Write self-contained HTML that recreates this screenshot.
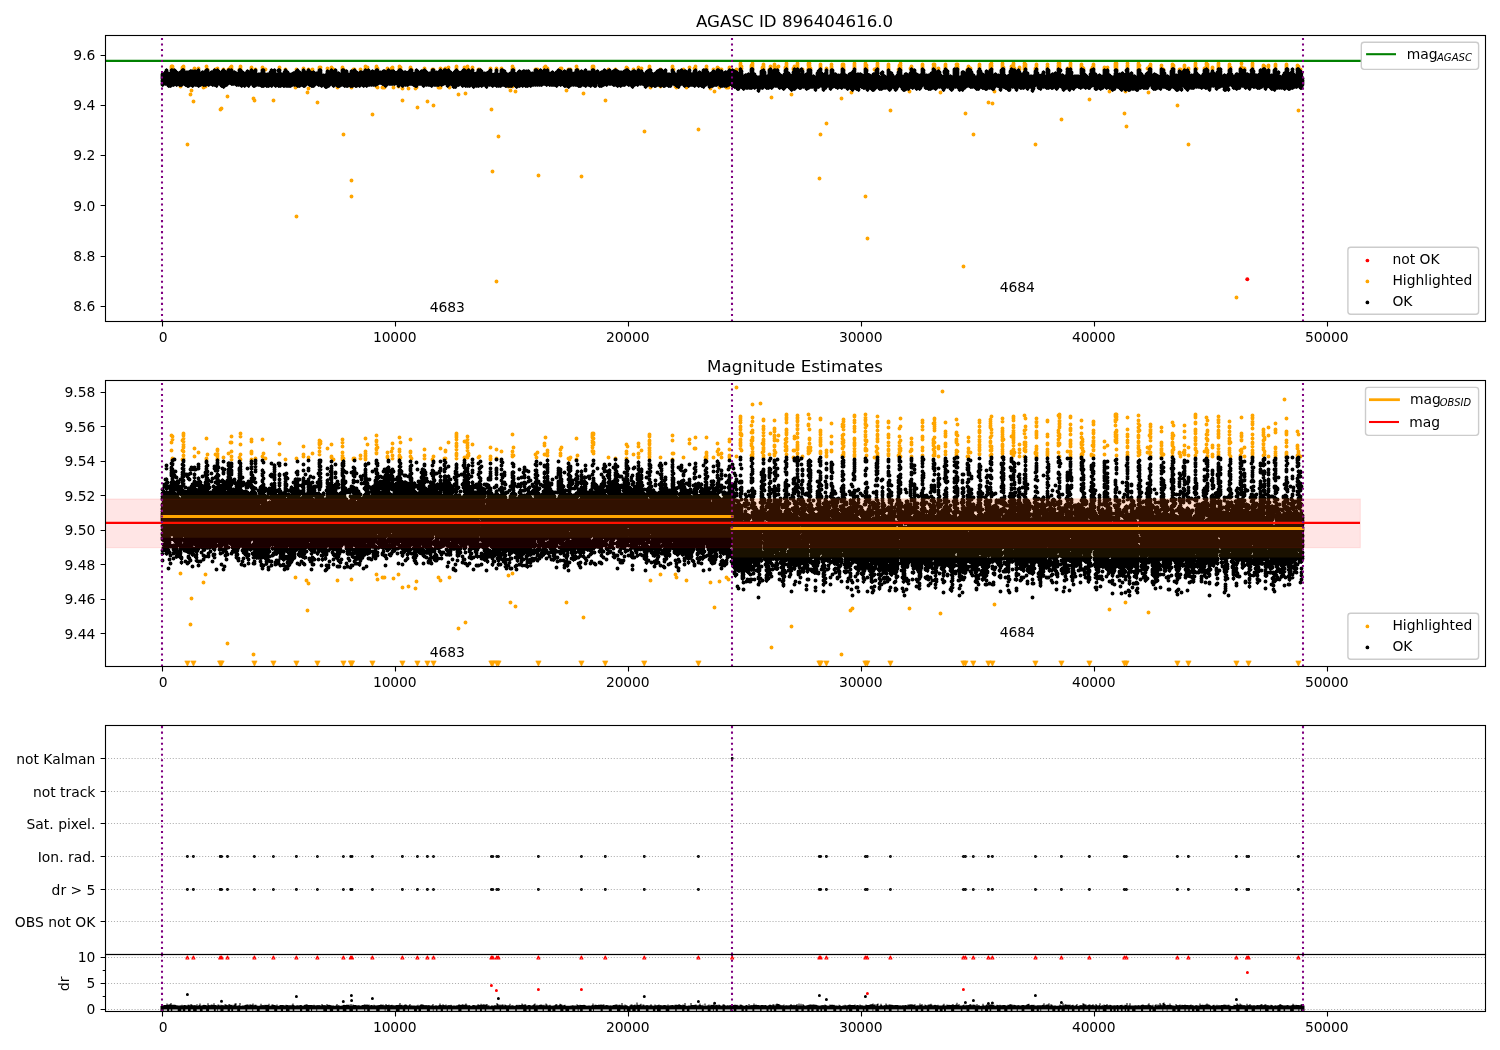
<!DOCTYPE html>
<html lang="en"><head><meta charset="utf-8"><title>AGASC ID 896404616.0</title>
<style>
html,body{margin:0;padding:0;background:#fff}
svg{display:block;will-change:transform}
text{font-family:"DejaVu Sans","Liberation Sans",sans-serif;font-size:13.89px;fill:#000}
.n{letter-spacing:-.12px}
.t{font-size:16.67px}
.sub{font-family:"DejaVu Sans","Liberation Sans",sans-serif;font-style:italic;font-size:9.9px}
.sp{fill:none;stroke:#000;stroke-width:1.11}
.tk{stroke:#000;stroke-width:1.11;fill:none}
.pv{stroke:#800080;stroke-width:2.08;stroke-dasharray:2.08 3.44;fill:none}
.gr{stroke:#b0b0b0;stroke-width:1.11;stroke-dasharray:1.11 1.83;fill:none}
.dk{stroke:#000;stroke-width:3.95;stroke-linecap:round;fill:none}
.do{stroke:#ffa500;stroke-width:3.95;stroke-linecap:round;fill:none}
.dr{stroke:#f00;stroke-width:3.95;stroke-linecap:round;fill:none}
.lg{fill:#fff;fill-opacity:.8;stroke:#ccc;stroke-width:1.39}
</style></head><body>
<svg width="1500" height="1050" viewBox="0 0 1500 1050">
<rect width="1500" height="1050" fill="#fff"/>
<defs><clipPath id="c1"><rect x="105.5" y="35.5" width="1380.0" height="286.0"/></clipPath><clipPath id="c2"><rect x="105.5" y="380.5" width="1380.0" height="286.0"/></clipPath><clipPath id="c3"><rect x="105.5" y="725.5" width="1380.0" height="229.0"/></clipPath><clipPath id="c4"><rect x="105.5" y="954.5" width="1380.0" height="57.0"/></clipPath></defs>
<!-- panel 1 -->
<g clip-path="url(#c1)">
<path class="dr" d="M1247.3 279.3h0"/>
<path class="do" d="M171.5 66.5h0m1 0h0m0 1h0m-1 0h0m0 1h0m11-1h0m0 1h0m0 1h0m-2 17h0m3-20h0m0 1h0m0 1h0m0 1h0m4 75h0m7-76h0m0 1h0m-3 21h0m-1 4h0m3 7h0m5-33h0m8-2h0m0 3h0m-1 17h0m-2 1h0m4-18h0m10-1h0m-2 1h0m8 0h0m-2 39h0m-1 1h0m10-42h0m-2 2h0m-1 27h0m4-30h0m0 1h0m0 1h0m0 1h0m9-3h0m0 1h0m0 2h0m-1 0h0m12-2h0m0 1h0m0 1h0m2 29h0m1 2h0m1-31h0m7-2h0m0 2h0m3 0h0m8 31h0m6-33h0m0 2h0m6 0h0m11 0h0m-1 18h0m1 129h0m7-148h0m5 1h0m-5 0h0m5 19h0m-1 4h0m5-23h0m8-2h0m-1 0h0m0 1h0m0 1h0m-2 33h0m14-35h0m-4 1h0m4 1h0m2 0h0m4 18h0m5-20h0m0 1h0m0 1h0m1 0h0m0 65h0m11-65h0m-1 0h0m-2 18h0m0 93h0m0 16h0m9-127h0m5-3h0m2 1h0m-2 1h0m0 1h0m7 45h0m4-48h0m0 1h0m0 1h0m1 0h0m-1 18h0m1 1h0m5 0h0m2 0h0m8-20h0m-5 1h0m4 0h0m1 0h0m-5 1h0m11 17h0m-5 1h0m6-21h0m1 1h0m-1 1h0m1 1h0m-1 0h0m3 19h0m0 12h0m8-33h0m0 1h0m0 1h0m-2 19h0m3-19h0m5 18h0m-1 1h0m2 19h0m7-39h0m0 1h0m3 32h0m6-32h0m-1 0h0m1 36h0m7-37h0m-2 19h0m2 0h0m5-19h0m-1 1h0m4-2h0m1 20h0m7-21h0m0 1h0m0 1h0m0 1h0m2 25h0m6-27h0m3-1h0m0 1h0m0 1h0m1 1h0m-3 24h0m7-26h0m0 2h0m7 0h0m-1 0h0m12-1h0m0 1h0m1 40h0m1 62h0m4-103h0m0 1h0m2 67h0m-2 145h0m5-213h0m11-2h0m0 2h0m0 1h0m0 17h0m-4 0h0m2 4h0m3-22h0m0 1h0m2 22h0m20-22h0m1 0h0m1 0h0m1 106h0m7-109h0m-1 1h0m3 1h0m-3 1h0m3 0h0m13-1h0m1 0h0m5 22h0m4-21h0m-1 0h0m-1 0h0m8-3h0m0 3h0m1 0h0m6 24h0m-2 83h0m12-110h0m-1 0h0m0 1h0m1 0h0m-1 1h0m1 0h0m0 1h0m15 0h0m-3 31h0m10-31h0m11-2h0m0 1h0m1 0h0m11-1h0m0 1h0m0 1h0m-5 0h0m8-1h0m3 63h0m5-65h0m0 1h0m0 1h0m1 19h0m10-18h0m0 17h0m12-20h0m0 1h0m1 2h0m-1 0h0m3 17h0m1 1h0m7-18h0m3 18h0m3-20h0m6-1h0m-1 2h0m1 0h0m3 61h0m8-63h0m0 2h0m-1 1h0m1 0h0m4 19h0m3-19h0m1 22h0m3-24h0m0 1h0m1 0h0m3 1h0m-2 18h0m7 0h0m2 0h0m1-20h0m0 1h0m11-5h0m0 1h0m0 1h0m0 1h0m0 1h0m0 1h0m-4 1h0m5-3h0m0 2h0m11-5h0m0 1h0m-1 1h0m1 0h0m0 1h0m-1 0h0m0 1h0m1 0h0m0 1h0m11-4h0m0 1h0m0 1h0m-1 1h0m1 0h0m-1 1h0m1 0h0m0 1h0m7-3h0m-1 3h0m5-5h0m0 1h0m0 1h0m0 1h0m0 1h0m-3 29h0m7-31h0m-1 1h0m9-4h0m0 1h0m0 1h0m0 1h0m-1 1h0m1 0h0m0 1h0m-1 0h0m9-2h0m-1 2h0m0 1h0m-2 25h0m6-31h0m0 1h0m0 1h0m0 1h0m0 1h0m5 2h0m7-6h0m-1 0h0m0 1h0m1 1h0m-1 0h0m1 1h0m0 1h0m0 1h0m1 0h0m-2 0h0m0 1h0m12-5h0m0 1h0m0 1h0m0 1h0m0 1h0m0 66h0m-1 44h0m7-110h0m0 1h0m0 54h0m5-59h0m0 2h0m0 1h0m0 1h0m11-4h0m0 1h0m0 1h0m0 1h0m0 1h0m-1 30h0m2-34h0m0 1h0m0 1h0m0 1h0m0 1h0m0 1h0m11-6h0m0 1h0m0 1h0m0 1h0m0 1h0m0 1h0m-3 24h0m14-29h0m0 1h0m0 1h0m1 0h0m-1 1h0m0 1h0m1 0h0m0 1h0m-1 0h0m1 1h0m-1 127h0m2 42h0m10-175h0m0 1h0m0 1h0m0 1h0m0 1h0m0 1h0m-1 0h0m-2 1h0m14-5h0m0 1h0m0 1h0m0 1h0m0 1h0m0 1h0m2 41h0m10-47h0m-1 2h0m1 0h0m-1 1h0m1 1h0m-1 0h0m1 1h0m-1 0h0m-1 1h0m2 0h0m11-3h0m0 1h0m0 1h0m-1 0h0m-1 23h0m13-27h0m0 1h0m0 1h0m0 1h0m0 1h0m11-4h0m1 0h0m0 1h0m0 1h0m-1 1h0m1 0h0m0 1h0m4 0h0m-5 0h0m5 1h0m2 23h0m5-28h0m0 1h0m0 1h0m0 1h0m0 1h0m11-4h0m0 2h0m1-2h0m0 2h0m0 1h0m0 1h0m11-2h0m0 1h0m0 1h0m-1 1h0m-2 44h0m-2 153h0m7-198h0m3 66h0m6-70h0m0 1h0m0 1h0m0 1h0m0 1h0m12-5h0m-1 1h0m0 1h0m1 0h0m0 1h0m-1 0h0m0 1h0m1 1h0m-1 0h0m0 1h0m-2 33h0m4 1h0m2-12h0m8-28h0m0 1h0m0 1h0m0 1h0m0 1h0m1 0h0m10-4h0m0 1h0m0 1h0m-2 1h0m2 0h0m0 1h0m1 1h0m-3 0h0m8-1h0m0 1h0m0 1h0m5-6h0m1 1h0m0 1h0m-1 0h0m0 1h0m1 0h0m-1 1h0m1 0h0m0 1h0m-1 0h0m0 1h0m12-5h0m0 1h0m0 1h0m-1 2h0m1 0h0m-1 1h0m0 75h0m12-80h0m0 2h0m0 1h0m0 1h0m11-5h0m0 2h0m0 1h0m0 1h0m0 1h0m1-5h0m0 1h0m0 1h0m0 1h0m0 1h0m2 52h0m9-56h0m0 1h0m0 1h0m0 1h0m0 1h0m0 1h0m-3 0h0m14-4h0m0 1h0m0 1h0m1 1h0m-1 0h0m0 1h0m2 0h0m10-4h0m0 1h0m0 1h0m-1 1h0m1 0h0m0 1h0m-2 1h0m-2 30h0m15-32h0m0 1h0m0 1h0m3-2h0m2 24h0m6-28h0m1 0h0m0 1h0m-1 0h0m1 1h0m-1 0h0m0 1h0m1 0h0m-1 1h0m1 0h0m0 1h0m0 1h0m8 44h0m3-50h0m0 2h0m0 1h0m0 1h0m0 1h0m-2 23h0m1 35h0m12-63h0m0 1h0m0 1h0m1 0h0m-1 1h0m0 1h0m0 1h0m1 0h0m-1 1h0m1 0h0m8-1h0m1 24h0m2-28h0m0 1h0m0 1h0m-1 0h0m1 1h0m0 1h0m11-3h0m0 2h0m0 1h0m2 1h0m9-5h0m0 2h0m0 1h0m0 1h0m1-3h0m0 1h0m0 2h0m4 37h0m7-40h0m0 1h0m0 1h0m0 1h0m-5 1h0m1 0h0m8-1h0m0 1h0m0 75h0m7-81h0m0 1h0m0 1h0m0 1h0m0 1h0m0 1h0m1 0h0m10-5h0m0 1h0m1 0h0m0 1h0m-1 1h0m1 0h0m-1 1h0m1 0h0m0 1h0m-3 0h0m3 1h0m5-2h0m0 1h0m0 1h0m6-6h0m0 1h0m0 1h0m0 1h0m0 1h0m0 1h0m11-4h0m0 1h0m0 1h0m1 1h0m-1 0h0m0 1h0m0 1h0m7 228h0m5-234h0m0 3h0m0 1h0m0 1h0m3 0h0m-4 0h0m4 1h0m8-6h0m0 1h0m0 1h0m0 1h0m0 1h0m0 1h0m11-3h0m5 0h0m-4 1h0m4 0h0m-5 0h0m1 1h0m-1 0h0m1 1h0m4 1h0m7-5h0m0 1h0m0 1h0m0 2h0m11-4h0m0 1h0m0 1h0m0 1h0m0 1h0m11-3h0m1 1h0m-1 1h0m0 1h0m1 0h0m0 42h0m2-41h0"/>
<path fill="#000" d="M161 73.2H162V72.5H163V72.2H164V71.2H165V69.2H166V68.5H167V69H168V71.5H169V71.8H170V69.2H171V68.5H172H173V68.8H174V68.5H175V69H176V70H177V71H178V71.5H179V71.2H180V70.5H181V69.2H182V68.5H183H184V69H185V70.8H186V70.5H187H188H189V70.2H190V69.5H191H192H193V69.8H194V69.5H195H196V69.8H197V69.2H198V68.5H199V69H200V71.5H201V71.2H202V70.5H203V70.8H204V70.2H205V69.2H206V68.5H207H208V69H209V71.5H210V71.2H211V70.5H212H213V69.2H214V68.5H215V69H216V69.2H217V68.5H218V69H219V70H220V71H221V70.2H222V69.2H223V68.5H224V69H225V70H226V70.5H227V69.2H228V68.5H229H230V68.8H231V68.5H232V69H233V70.8H234V70.5H235V71H236V71.5H237V71.8H238V69.2H239V68.5H240H241V69H242V70.5H243V71H244V71.8H245V71.5H246V70.2H247V69.5H248V70H249V70.5H250V69.2H251V68.5H252V69H253V70H254V69.2H255V68.5H256V69H257V72.8H258V72.5H259H260V72.2H261V69.2H262V68.5H263H264V69H265V72.5H266V72.8H267V72.5H268H269V71.2H270V69.2H271V68.5H272V69H273V69.2H274V68.5H275V69H276V72.5H277H278V68.5H279H280V69H281V72.5H282V72.8H283V71.2H284V69.2H285V68.5H286V69H287V70.5H288V71H289V72.5H290V72.8H291V72.5H292V72.2H293V71.5H294V71.2H295V70.2H296V69.2H297V68.5H298V69H299V70.5H300V71H301V71.5H302V69.2H303V68.5H304V69H305V70.5H306V70.8H307V69.2H308V68.5H309V69H310V70.5H311V71H312V71.2H313V70.5H314V71H315V71.8H316V71.5H317V71.2H318V69.2H319V68.5H320H321V69H322V73.5H323H324V73.8H325V73.2H326V70.2H327V69.5H328V70H329V70.2H330V69.2H331V68.5H332V69H333V70H334V69.2H335V68.5H336V69H337V71.5H338H339V72H340V72.5H341V69.2H342V68.5H343H344V69H345V69.8H346V69.5H347V70H348V72.5H349H350V70.2H351V69.5H352V69.8H353V69.2H354V68.5H355V69H356V70.5H357V71H358V71.8H359V71.2H360V70.5H361H362V70.8H363V70.5H364V69.2H365V68.5H366V69H367V69.2H368V68.5H369V69H370V70.5H371V70.2H372V69.5H373V70H374V70.2H375V69.2H376V68.5H377H378V69H379V70.8H380V70.5H381V70.8H382V70.2H383V69.5H384H385V70H386V70.2H387V69.2H388V68.5H389V69H390V69.8H391V69.5H392H393H394V70H395V71H396V71.2H397V70.5H398V69.2H399V68.5H400H401V69H402V70H403V70.8H404V70.5H405H406V71H407V71.2H408V70.5H409V69.2H410V68.5H411H412V69H413V71.8H414V71.5H415V69.2H416V68.5H417V69H418V70H419V71H420V70.2H421V69.5H422H423V69.2H424V68.5H425V69H426V70H427V71H428V71.8H429V71.5H430V71.2H431V69.2H432V68.5H433H434V69H435V70.8H436V70.5H437V70.8H438V70.2H439V69.2H440V68.5H441V69H442V70H443V69.2H444V68.5H445H446V69H447V69.2H448V68.5H449V69H450V70.5H451V71H452V72H453V71.2H454V70.2H455V69.2H456V68.5H457V69H458V70.5H459V71H460V71.2H461V70.5H462V69.2H463V68.5H464H465V69H466V69.8H467V69.2H468V68.5H469V69H470V70H471V69.2H472V68.5H473V69H474V72H475V72.2H476V71.5H477V69.2H478V68.5H479V68.8H480V68.5H481V69H482V70H483V71.8H484V71.5H485V71.8H486V71.5H487V71.2H488V70.5H489V69.2H490V68.5H491V69H492V73H493V73.2H494V72.5H495V69.2H496V68.5H497V69H498V72.8H499V72.5H500V69.2H501V68.5H502H503V69H504V69.5H505V70H506V72H507V72.5H508V72.8H509V72.2H510V71.5H511V69.2H512V68.5H513H514V69H515V72H516V72.2H517V71.2H518V70.2H519V69.5H520V70H521V70.5H522V70.2H523V69.5H524H525V69.8H526V69.5H527V69.8H528V69.5H529V70H530V71.5H531V71.8H532V71.5H533H534V69.2H535V68.5H536H537V69H538V70H539V69.2H540V68.5H541V69H542V70H543V69.2H544V68.5H545V69H546V69.2H547V68.5H548V69H549V71.5H550V71.8H551V71.2H552V70.5H553V71H554V72H555V71.2H556V70.5H557V69.2H558V68.5H559V69H560V69.5H561V70H562V70.8H563V70.2H564V69.5H565V70H566V70.5H567V69.2H568V68.5H569H570H571V69H572V71.5H573V71.8H574V71.2H575V69.2H576V68.5H577H578V69H579V70.5H580V70.2H581V69.5H582V70H583V70.5H584V69.2H585V68.5H586V69H587V70.8H588V70.5H589H590V70.8H591V69.2H592V68.5H593H594V69H595V70.5H596V70.2H597V69.5H598V70H599V71.5H600V71.2H601V70.5H602V70.2H603V69.2H604V68.5H605V69H606V69.8H607V69.5H608V69.2H609V68.5H610V69H611V70.5H612V70.2H613V69.5H614V69.2H615V68.5H616V69H617V69.5H618V70H619V70.5H620H621H622V70.8H623V70.2H624V69.5H625V69.2H626V68.5H627H628V69H629V70H630V70.8H631V70.5H632V70.2H633V69.5H634H635V70H636V70.5H637V69.2H638V68.5H639V69H640V69.8H641V69.5H642V70H643V72H644V72.5H645V71.2H646V70.2H647V69.5H648V69.2H649V68.5H650H651V69H652V72H653V72.5H654V72.2H655V71.5H656V70.2H657V69.5H658V69.2H659V68.5H660H661H662V69H663V70H664V69.2H665V68.5H666V69H667V72.8H668V72.5H669H670V72.8H671V69.2H672V68.5H673V69H674V71H675V72.5H676H677V70.2H678V69.5H679V69.8H680V69.2H681V68.5H682V69H683V69.8H684V69.5H685H686V70H687V70.5H688V69.2H689V68.5H690V69H691V72.5H692V72.2H693V70.2H694V69.2H695V68.5H696V69H697V71.5H698V71.2H699V70.5H700V71H701V71.5H702V69.2H703V68.5H704V68.8H705V68.5H706H707V69H708V71H709V72.5H710V72.2H711V71.5H712V70.2H713V69.5H714V70H715V70.5H716V69.2H717V68.5H718H719V69H720V69.8H721V69.5H722V70H723V71.5H724V71.2H725V70.5H726V70.8H727V70.2H728V69.2H729V68.5H730V69H731V69.2H732V68.5H733V69H734V69.5H735V70H736V70.5H737V71H738V71.8H739V68.2H740V67.5H741V68H742V70H743V74.5H744V74.2H745V73.5H746H747V73.2H748V72.5H749V72.8H750V68.2H751V67.5H752H753V68H754V72.5H755V73H756V75H757V75.5H758H759V75.2H760V70.2H761V69.5H762V69.2H763V68.5H764V69H765V71H766V74.5H767V74.2H768V69.2H769V68.2H770V67.5H771V68H772V69.5H773V69.2H774V68.5H775H776V68.8H777V68.5H778V69H779V72H780V73.5H781V74H782V74.5H783V73.2H784V69.2H785V68.2H786V67.5H787V68H788V71.5H789V72H790V73.5H791V73.8H792V71.2H793V68.2H794V67.5H795V68H796V68.2H797V67.5H798V68H799V68.8H800V72.2H801V67.5H802V68H803V70H804V73.5H805V73.2H806V72.5H807V69.2H808V68.5H809H810H811V69H812V74.8H813V74.5H814V75H815V75.5H816V72.2H817V70.2H818V69.2H819V68.2H820V67.5H821V68H822V72H823V73H824V72.2H825V69.2H826V68.5H827V69H828V74.5H829V74.2H830V69.2H831V68.5H832H833V69H834V72.5H835H836V73H837V73.8H838V73.5H839V73.8H840V73.2H841V68.2H842V67.5H843V68H844V69H845V73.5H846V74H847V74.5H848V73.2H849V72.5H850V72.2H851V71.5H852V70.2H853V68.2H854V67.5H855V68H856V72.8H857V72.5H858H859V72.8H860V72.5H861V73H862V73.5H863V73.8H864V68.2H865V67.5H866V68H867V69H868V73H869V73.5H870V74H871V74.5H872V73.2H873V72.5H874V72.2H875V69.2H876V68.2H877V67.5H878V68H879V75H880V75.5H881V71.2H882V70.5H883V71H884V74.5H885V75H886V75.5H887V69.2H888V68.5H889V69H890V71H891V71.5H892V72H893V74H894V75.5H895V75.2H896V74.2H897V71.2H898V68.2H899V67.5H900V68H901V69H902V74.5H903V74.8H904V73.2H905V72.5H906H907V73H908V73.5H909V72.2H910V68.2H911V67.5H912V68H913V68.8H914V68.5H915V69H916V72.5H917V73H918V73.5H919V73.8H920V73.2H921V68.2H922V67.5H923V68H924V69H925V73.5H926H927V73.8H928V73.5H929V73.2H930V72.2H931V71.5H932V68.2H933V67.5H934V68H935V69H936V70.5H937V70.2H938V69.5H939V70H940V71H941V74H942V74.8H943V74.2H944V68.2H945V67.5H946V68H947V69H948V70H949V74.8H950V74.5H951V75H952V75.2H953V68.2H954V67.5H955V67.8H956V67.5H957H958V68H959V75.5H960V75.2H961V71.2H962V70.5H963H964V71H965V71.5H966V69.2H967V68.2H968V67.5H969V68H970V68.5H971V69H972V71H973V73.5H974V74H975V75.5H976V75.2H977V70.2H978V68.2H979V67.5H980V68H981V70H982V72.5H983V73H984V73.5H985V70.2H986V69.5H987V70H988V70.5H989V69.2H990V68.2H991V67.5H992V68H993V73.5H994V73.2H995V72.5H996V73H997V73.8H998V73.5H999V73.8H1000V69.2H1001V68.2H1002V67.5H1003H1004V68H1005V74H1006V74.8H1007V74.5H1008V74.2H1009V70.2H1010V68.2H1011V67.5H1012V68H1013V68.5H1014H1015V69H1016V70H1017V69.2H1018V68.5H1019V69H1020V71H1021V72.8H1022V72.5H1023V71.2H1024V68.2H1025V67.5H1026V68H1027V71.5H1028V72H1029V74.5H1030H1031H1032V74.8H1033V74.2H1034V70.2H1035V68.2H1036V67.5H1037V68H1038V72H1039V74H1040V74.2H1041V73.5H1042V71.2H1043V70.5H1044V71H1045V74.5H1046V68.2H1047V67.5H1048V68H1049V69H1050V73.5H1051V73.2H1052V72.5H1053V72.8H1054V72.2H1055V71.5H1056V71.8H1057V68.2H1058V67.5H1059V68H1060V68.5H1061V73.8H1062V73.5H1063V74H1064V74.8H1065V74.2H1066V68.2H1067V67.5H1068V68H1069V68.2H1070V67.5H1071V68H1072V71H1073V74.8H1074V74.5H1075H1076H1077H1078H1079V74.8H1080V68.2H1081V67.5H1082V68H1083V68.5H1084V69H1085V73H1086V74H1087V75H1088V75.8H1089V73.2H1090V69.2H1091V68.5H1092V68.2H1093V67.5H1094V68H1095V72.5H1096V73H1097V74.5H1098V74.2H1099V73.5H1100V74H1101V74.8H1102V74.5H1103V69.2H1104V68.5H1105V69H1106V69.2H1107V68.5H1108V69H1109V73.5H1110V74H1111V75H1112V75.5H1113V75.2H1114V72.2H1115V68.5H1116H1117V69H1118V72.8H1119V72.5H1120V72.8H1121V72.2H1122V71.5H1123V72H1124V73H1125V72.2H1126V68.2H1127V67.5H1128V68H1129V72.5H1130V72.2H1131V71.5H1132V72H1133V74.5H1134H1135V75H1136V75.5H1137V69.2H1138V68.5H1139H1140V69H1141V72H1142V73H1143V74.5H1144V74.8H1145V73.2H1146V72.2H1147V71.5H1148V68.2H1149V67.5H1150H1151V68H1152V73.5H1153V73.2H1154V72.5H1155V73H1156V73.5H1157V74H1158V74.5H1159V74.8H1160V68.2H1161V67.5H1162V68H1163V68.5H1164V69H1165V72H1166V74.5H1167H1168V75H1169V75.5H1170V70.2H1171V68.2H1172V67.5H1173H1174V68H1175V73.5H1176H1177V73.8H1178V70.2H1179V69.5H1180V70H1181V70.8H1182V70.2H1183V69.2H1184V68.5H1185V69H1186V69.2H1187V68.5H1188V69H1189V71H1190V73.8H1191V73.5H1192V73.8H1193V73.2H1194V68.2H1195V67.5H1196V68H1197V72H1198V73.5H1199V74H1200V74.8H1201V74.5H1202V73.2H1203V69.2H1204V68.5H1205V68.2H1206V67.5H1207V68H1208V69H1209V72.5H1210V72.2H1211V70.2H1212V69.5H1213V70H1214V72H1215V72.5H1216V71.2H1217V68.2H1218V67.5H1219V67.8H1220V67.5H1221V68H1222V74.5H1223V74.2H1224V73.5H1225V74H1226V74.2H1227V73.2H1228V69.2H1229V68.2H1230V67.5H1231V68H1232V73H1233V74.8H1234V74.5H1235V73.2H1236V72.5H1237H1238V72.8H1239V68.2H1240V67.5H1241V68H1242V69H1243V69.2H1244V68.5H1245V69H1246V72.8H1247V72.5H1248V73H1249V73.5H1250V72.2H1251V68.2H1252V67.5H1253V68H1254V70H1255V73.5H1256H1257V73.8H1258V73.2H1259V69.2H1260V68.5H1261V68.8H1262V68.2H1263V67.5H1264H1265V68H1266V69.5H1267V69.2H1268V68.5H1269V69H1270V73.8H1271V73.5H1272H1273V69.2H1274V68.2H1275V67.5H1276V68H1277V70.8H1278V70.5H1279V74.5H1280V75H1281V75.5H1282V74.2H1283V72.2H1284V71.5H1285V68.2H1286V67.5H1287H1288V68H1289V72.2H1290V71.5H1291V68.2H1292V67.5H1293V68H1294V73H1295V73.5H1296V68.2H1297V67.5H1298H1299V68H1300V69.5H1301V70H1302V72H1303V77H1304V86.2H1303V89.2H1302V89.8H1301H1300V89H1299V87.8H1298V88.2H1297V88.8H1296V88.5H1295V88.8H1294V89.2H1293V89.8H1292V89.5H1291V90.2H1290V90.8H1289H1288V90H1287V89.5H1286V90.2H1285V90.8H1284V90H1283V89.5H1282V89.8H1281V89.5H1280V89.8H1279V89.5H1278V89.8H1277H1276V91.2H1275V91.8H1274V91H1273V90.5H1272V90.8H1271V90H1270V88.8H1269V88H1268V88.2H1267V90.2H1266V90.8H1265V90H1264V87.8H1263V88.2H1262V88.8H1261V89.2H1260V89.8H1259V89.5H1258V89.8H1257V89H1256V88.5H1255V88.8H1254H1253V88H1252V88.2H1251V90.2H1250V90.8H1249V90H1248V88.8H1247V89.2H1246V89.8H1245V89H1244V87.8H1243H1242V87.5H1241V89.2H1240V89.8H1239H1238V90.2H1237V90.8H1236V90H1235V89.5H1234V89.8H1233V89H1232V87H1231V86.5H1230V86.8H1229V91.8H1228V91H1227V91.2H1226V91.8H1225H1224V88H1223V87.8H1222H1221V88.2H1220V88.8H1219V89.2H1218V90.2H1217V90.8H1216V90H1215V87.5H1214V87.8H1213V87.5H1212V87.8H1211V91.2H1210V91.8H1209V91H1208V89.5H1207V89.8H1206H1205V89H1204V88.8H1203V89.2H1202V89.8H1201V89H1200V88.8H1199H1198V88.5H1197V88.8H1196V88.5H1195V89.2H1194V89.8H1193H1192H1191V89.5H1190V89.8H1189V91.2H1188V91.8H1187V91H1186V89.8H1185V89H1184V87.8H1183H1182V91.8H1181V91H1180V90.5H1179V91.2H1178V91.8H1177H1176V91H1175V89.8H1174V89H1173V88.5H1172V88.8H1171V90.2H1170V90.8H1169H1168V90H1167V89.8H1166V89H1165V88.8H1164H1163V88.5H1162V90.2H1161V90.8H1160V90H1159V89.5H1158V89.8H1157V90.2H1156V90.8H1155V90.5H1154V90.8H1153V90H1152V89H1151V86.8H1150V87.2H1149V89.2H1148V89.8H1147H1146H1145H1144H1143V89H1142V89.2H1141V89.8H1140V89.5H1139V91.2H1138V91.8H1137H1136V91H1135V90.5H1134V90.8H1133H1132V90.5H1131V91.2H1130V91.8H1129H1128V91H1127V91.2H1126V91.8H1125V91H1124V90.2H1123V91.2H1122V91.8H1121V91H1120V90H1119V89H1118V88.8H1117V88.5H1116V90.2H1115V90.8H1114V91.2H1113V91.8H1112V91H1111V89.5H1110V89.8H1109V89H1108V89.2H1107V89.8H1106V89H1105V88.2H1104V89.2H1103V89.8H1102V90.2H1101V90.8H1100V90H1099V89.5H1098V90.2H1097V90.8H1096H1095V90H1094V87H1093V87.2H1092V87.8H1091V89.2H1090V89.8H1089H1088V89H1087V89.2H1086V89.8H1085V89H1084V88.5H1083V88.8H1082V89.2H1081V89.8H1080V89H1079V88.8H1078V88H1077V88.2H1076V88.8H1075V90.2H1074V90.8H1073V90H1072V89.8H1071V91.2H1070V91.8H1069V91H1068V89.5H1067V89.8H1066V90.2H1065V91.2H1064V91.8H1063V91H1062V88.8H1061V88H1060V87.8H1059V89.2H1058V90.2H1057V90.8H1056V90H1055V88.8H1054V89.2H1053V89.8H1052H1051V89H1050V89.2H1049V89.8H1048V89.5H1047V89.8H1046V89H1045V88.5H1044V88.8H1043V88.5H1042V90.2H1041V90.8H1040V90H1039V89.8H1038V89H1037V86.8H1036V87.2H1035V90.2H1034V92.2H1033V92.8H1032V89H1031V88.8H1030H1029V90.2H1028V90.8H1027V90H1026V88.8H1025V89.2H1024V89.8H1023V89.5H1022V89.8H1021H1020V89H1019V88.8H1018V91.2H1017V91.8H1016V91H1015V89H1014V88.5H1013V88.8H1012V88.5H1011V91.2H1010V91.8H1009H1008V91H1007V90H1006V89.8H1005V89H1004V88.8H1003V88.5H1002V91.2H1001V91.8H1000V91H999V88H998V87.8H997V87.5H996V88.2H995V90.2H994V90.8H993H992V90H991V89.5H990V89.8H989V89.5H988V90.2H987V90.8H986H985V90H984V89.8H983H982V89H981V88.8H980V90.2H979V90.8H978V90.5H977V90.8H976V90H975V89H974V88.5H973V88.8H972H971H970V88H969V87.5H968V87.8H967V88.2H966V89.2H965V89.8H964V91.2H963V91.8H962V91H961V91.2H960V91.8H959V91H958V89H957V88.5H956V88.8H955V88.5H954V90.2H953V91.2H952V91.8H951V91H950V90H949V88.5H948V88.8H947V88.5H946V89.2H945V91.2H944V91.8H943V91H942V89H941V88.5H940V88.8H939V88.5H938V89.2H937V90.2H936V90.8H935V90H934V89.5H933V89.8H932V90.2H931V90.8H930V90.5H929V90.8H928V90H927V89.8H926H925V89H924V86.8H923V87.2H922V89.2H921V90.2H920V90.8H919V90H918V90.2H917V90.8H916V90H915V88.8H914V89.2H913V89.8H912V89H911V88.8H910V90.2H909V90.8H908V90.5H907V90.8H906V91.2H905V91.8H904H903V91H902V90H901V88H900V87.5H899V88.2H898V90.2H897V91.2H896V91.8H895V91H894V89H893V88.8H892V90.2H891V91.2H890V91.8H889V91H888V89.8H887V89.5H886V89.8H885H884H883V90.2H882V90.8H881V90.5H880V90.8H879V90H878V88.8H877V89.2H876V90.2H875V91.2H874V91.8H873H872V91H871V90H870V89.8H869V91.2H868V91.8H867V91H866V89.5H865V89.8H864H863V89H862V88.8H861V88H860V91.2H859V91.8H858V91H857V90.8H856V90H855V89.8H854V91.2H853V91.8H852V91H851V90H850V89.5H849V90.2H848V90.8H847V90H846V88.8H845H844V88.5H843V89.2H842V89.8H841V89H840V88.8H839V89.2H838V89.8H837V89H836V88.8H835V88H834V88.2H833V88.8H832V90.2H831V90.8H830V90H829V87.8H828H827V89.2H826V89.8H825V91.2H824V91.8H823V91H822V87.8H821V87.5H820V88.2H819V88.8H818V88.5H817V91.2H816V91.8H815V91H814V88.5H813V88.8H812H811H810V89.2H809V89.8H808V90.2H807V90.8H806V90H805V88.5H804V88.8H803V88.5H802V89.2H801V89.8H800H799V89H798V88.5H797V89.2H796V90.2H795V90.8H794V90.5H793V91.2H792V91.8H791V91H790V89.8H789V89H788V88H787V88.2H786V89.2H785V90.2H784V90.8H783V90H782V89H781V89.2H780V89.8H779V89H778V87.8H777H776H775V87.5H774V88.2H773V89.2H772V89.8H771V89H770V89.2H769V89.8H768V89.5H767V89.8H766V89H765V88.2H764V89.2H763V89.8H762V89.5H761V89.8H760V92.2H759V92.8H758V92H757V88.8H756V89.2H755V89.8H754V89H753V89.2H752V89.8H751H750H749V89.5H748V89.8H747H746V89.5H745V90.2H744V90.8H743V90H742V89H741V88.8H740V90.2H739V90.8H738H737V90H736V88.8H735H734V88H733V87.8H732V87H731V86H730V86.2H729V86.8H728V87.2H727V87.8H726V87.5H725V87.8H724V87.5H723V87.8H722H721H720V87H719V85.8H718V86.2H717V86.8H716H715H714V87.2H713V87.8H712H711V88.2H710V88.8H709V88H708V85.8H707V86.2H706V86.8H705V88.2H704V88.8H703V88H702V87.8H701V87H700V87.2H699V87.8H698V87H697V86.5H696V87.2H695V87.8H694V87H693V86.8H692H691H690V87.2H689V87.8H688V87H687V86.8H686V87.2H685V87.8H684V87H683V85.8H682H681V86.2H680V88.2H679V88.8H678V88H677V87.8H676V87H675V86H674V85.8H673V85.5H672V87.2H671V87.8H670V87.5H669V87.8H668V87H667V86.8H666V87.2H665V87.8H664H663V87H662V87.2H661V87.8H660V87H659V86.8H658H657V87.2H656V87.8H655H654V87H653V87.2H652V87.8H651V87H650V86.5H649V86.8H648V87.2H647V88.2H646V88.8H645V88H644V86H643V85.8H642V85.5H641V85.8H640V85.5H639V86.2H638V86.8H637V86H636V86.2H635V86.8H634V88.2H633V88.8H632V88H631V86.8H630V86.5H629V86.8H628V86H627V85.5H626V86.2H625V86.8H624H623H622V87.2H621V87.8H620V87H619V87.2H618V87.8H617V87H616V86.5H615V86.8H614H613V86H612V85.5H611V85.8H610H609V85.5H608V86.2H607V86.8H606V86H605V86.2H604V86.8H603V87.2H602V87.8H601V87.5H600V87.8H599V87H598V84.8H597V87.2H596V87.8H595H594V87H593V86.5H592V87.2H591V87.8H590V87H589V86.8H588V86.5H587V87.2H586V87.8H585V87H584V86.8H583V86.5H582V87.2H581V87.8H580H579H578V87H577V86.8H576H575V86.5H574V86.8H573V86.5H572V86.8H571V87.2H570V88.2H569V88.8H568V88H567V87.5H566V87.8H565H564V87H563V86H562V86.2H561V86.8H560V86H559V86.2H558V87.2H557V87.8H556V87H555V86.8H554H553H552H551V86.5H550V86.8H549V86H548V86.2H547V86.8H546V86H545V85.8H544H543V86.2H542V86.8H541V86.5H540V86.8H539V86.5H538V86.8H537V86.5H536V86.8H535V86.5H534V86.8H533H532V87.2H531V87.8H530V87H529V87.2H528V87.8H527V87.5H526V87.8H525V87H524V87.2H523V87.8H522V87H521V87.2H520V87.8H519V87.5H518V88.2H517V88.8H516V88H515V87H514V86.2H513V87.2H512V87.8H511H510H509H508V87.5H507V87.8H506H505V87H504V86.8H503H502V87.2H501V87.8H500V87.5H499V87.8H498V87.5H497V87.8H496V87H495V86.8H494V87.2H493V87.8H492V87H491V86.5H490V86.8H489V86.5H488V88.2H487V88.8H486V88H485V86.8H484H483V87.2H482V87.8H481V87H480V87.2H479V87.8H478V87.5H477V87.8H476V87.5H475V88.2H474V88.8H473V88H472V86.8H471V87.2H470V87.8H469V87.5H468V87.8H467V87.5H466V87.8H465V87H464V87.2H463V87.8H462V87H461V85.8H460V86.2H459V86.8H458H457V88.2H456V88.8H455V88.5H454V88.8H453V88H452V86H451V85.8H450V86.2H449V87.2H448V87.8H447V87H446V85H445V85.2H444V85.8H443V86.2H442V86.8H441V86H440V86.2H439V86.8H438H437H436H435H434V86.5H433V87.2H432V87.8H431V87H430V86.8H429H428V86.5H427V86.8H426V86.5H425V87.2H424V87.8H423V87H422V85.8H421H420H419H418V87.2H417V87.8H416H415V87H414V86.8H413V86H412V85.8H411H410H409V86.2H408V86.8H407V86.5H406V86.8H405V86.5H404V87.2H403V87.8H402V87H401V86.2H400V87.2H399V87.8H398V87H397V85H396V85.2H395V85.8H394V85.5H393V85.8H392H391H390H389V85.5H388V86.2H387V87.2H386V87.8H385V87H384V86H383V85.8H382V85H381V84.8H380H379V85.2H378V85.8H377V86.2H376V86.8H375V86.5H374V86.8H373V86.5H372V86.8H371V86.5H370V86.8H369H368V87.2H367V87.8H366V87H365V87.2H364V87.8H363V87H362V86.5H361V87.2H360V87.8H359V87H358V87.2H357V87.8H356H355V87H354V87.2H353V87.8H352H351H350V87H349V87.2H348V87.8H347H346V87.5H345V87.8H344V87H343V86.5H342V86.8H341V87.2H340V87.8H339H338H337V87H336V86.5H335V87.2H334V87.8H333V87H332V85.8H331V86.2H330V87.2H329V87.8H328V88.2H327V88.8H326H325V88H324V86.8H323V87.2H322V87.8H321V87H320V86.5H319V86.8H318V86H317V85.5H316V86.2H315V87.2H314V87.8H313H312H311V87H310V86.8H309V86H308V85.5H307V86.2H306V87.2H305V87.8H304H303V87H302V86.8H301V87.2H300V87.8H299V87.5H298V87.8H297V87H296V86.5H295V86.8H294V86.5H293V86.8H292V87.2H291V87.8H290H289H288H287H286V87.5H285V87.8H284H283V87H282V87.2H281V87.8H280V87.5H279V87.8H278V87H277V87.2H276V87.8H275V87H274V86.2H273V87.2H272V87.8H271V87H270V87.2H269V87.8H268V87.5H267V87.8H266V87H265V87.2H264V87.8H263H262H261V87H260V86.8H259H258V86.5H257V86.8H256V87.2H255V87.8H254H253V87H252V85.5H251V85.8H250V87.2H249V87.8H248V87H247V86.5H246V87.2H245V87.8H244V87H243V87.2H242V87.8H241V87H240V86.5H239V86.8H238V86.5H237V86.8H236V86H235V85.5H234V85.8H233H232H231V85H230V84.8H229V85.2H228V86.2H227V86.8H226V87.2H225V88.2H224V88.8H223V88H222V87.8H221V87H220V85.8H219V85.5H218V87.2H217V87.8H216V87H215V86.8H214V86.5H213V86.8H212V86H211V85.8H210V86.2H209V86.8H208V86H207V86.2H206V86.8H205V86.5H204V86.8H203V86H202V86.2H201V86.8H200V87.2H199V87.8H198V87H197V86.8H196H195V86.5H194V87.2H193V87.8H192V87H191V86.8H190V87.2H189V87.8H188H187V87H186V86.8H185V86H184V85.5H183V86.2H182V86.8H181H180H179V86H178V86.2H177V86.8H176V86H175V86.2H174V86.8H173V86.5H172V87.2H171V87.8H170V87.5H169V87.8H168V87H167V85.8H166H165V85.5H164V86.2H163V86.8H162V86H161Z"/>
<path class="dk" d="M162.5 74.5h0m0 1h0m0 1h0m0 1h0m0 1h0m0 2h0m0 1h0m0 2h0m0 1h0m4-14h0m-1 2h0m3 13h0m2 0h0m4-15h0m-3 0h0m4 1h0m-2 13h0m3 0h0m6-14h0m-2 2h0m1 12h0m-2 0h0m4-14h0m2 14h0m3 1h0m-1 0h0m3-14h0m2 14h0m6-15h0m2 14h0m-2 1h0m8-15h0m-4 2h0m3 12h0m-2 0h0m4-14h0m4 2h0m1 12h0m-4 0h0m6-14h0m3 0h0m1 1h0m-2 14h0m7-15h0m-1 1h0m-1 14h0m2 1h0m5-16h0m-2 14h0m5-14h0m3 2h0m-3 11h0m5 1h0m3-14h0m1 0h0m2 2h0m-1 13h0m6-14h0m-3 14h0m4 0h0m3-15h0m2 15h0m1 0h0m1-15h0m0 1h0m7-1h0m1 0h0m0 1h0m-1 0h0m4 14h0m-3 0h0m-2 0h0m10-15h0m-1 2h0m1 13h0m-3 0h0m6-15h0m4 0h0m-4 1h0m1 14h0m3 0h0m1-15h0m0 2h0m5 0h0m-1 13h0m-3 0h0m5-15h0m2 2h0m3 13h0m6-14h0m-3 2h0m4-3h0m2 2h0m0 13h0m-2 0h0m11-15h0m-5 0h0m2 14h0m-2 1h0m1 0h0m6-13h0m3 0h0m1 12h0m-5 0h0m2 1h0m2 0h0m6-15h0m1 0h0m0 1h0m0 1h0m-2 12h0m3 1h0m4 1h0m1 0h0m5-16h0m-4 1h0m0 1h0m1 13h0m7-15h0m3 3h0m-1 12h0m-4 0h0m9-15h0m1 0h0m-1 1h0m-3 14h0m5 0h0m2-14h0m1 14h0m3 0h0m4-15h0m-3 1h0m5 1h0m-1 13h0m1 0h0m-4 0h0m8-13h0m-1 13h0m9-15h0m-3 0h0m1 15h0m-3 0h0m9-14h0m4-1h0m1 0h0m0 13h0m-2 1h0m8-13h0m1 0h0m-2 12h0m4 1h0m-1 1h0m3-15h0m5 1h0m4 1h0m-3 11h0m4 2h0m2-15h0m-1 0h0m2 1h0m1 14h0m8-15h0m-2 2h0m-3 0h0m2 12h0m4-14h0m5 0h0m-3 14h0m2 1h0m1 0h0m1-14h0m4 0h0m3-1h0m1 1h0m1 1h0m-3 13h0m10-15h0m-1 0h0m-1 15h0m9-15h0m-2 14h0m7-14h0m-1 0h0m-1 13h0m-2 1h0m7-14h0m2 2h0m-3 13h0m9-15h0m-1 1h0m-1 1h0m4 0h0m0 12h0m-5 2h0m2 0h0m8-16h0m1 0h0m-3 2h0m1 13h0m6-15h0m1 15h0m-4 0h0m7-15h0m0 1h0m4 2h0m-3 13h0m7-16h0m-2 0h0m3 1h0m0 14h0m-3 0h0m10-13h0m-2 14h0m4-16h0m0 1h0m0 1h0m4 2h0m-2 11h0m4-15h0m0 1h0m4 14h0m-4 0h0m5-15h0m1 0h0m2 1h0m-3 0h0m4 14h0m7-15h0m-2 3h0m1 12h0m2-15h0m0 1h0m5 1h0m-3 13h0m1 1h0m7-15h0m-4 0h0m3 14h0m-3 0h0m9-14h0m-3 14h0m2 0h0m3 0h0m5-15h0m1 0h0m4 0h0m1 14h0m6-14h0m-3 0h0m2 14h0m6-12h0m-3 12h0m9-14h0m2 1h0m-4 1h0m4 12h0m-4 1h0m8-14h0m0 14h0m6-15h0m-2 0h0m0 16h0m9-16h0m-1 0h0m2 15h0m3-14h0m-1 14h0m5-15h0m0 15h0m5 0h0m2-15h0m1 0h0m1 15h0m1 0h0m2-14h0m4 1h0m-2 13h0m2 0h0m3-15h0m2 14h0m-3 0h0m6-14h0m4 1h0m0 13h0m2-14h0m2 1h0m3 14h0m-3 0h0m9-15h0m-2 1h0m0 13h0m3-14h0m1 1h0m0 13h0m4 2h0m6-16h0m-4 1h0m-1 0h0m4 13h0m-3 0h0m7-13h0m8-1h0m1 0h0m0 1h0m-3 0h0m-1 1h0m-1 14h0m10-13h0m0 12h0m-1 0h0m-3 0h0m8-15h0m2 0h0m-4 1h0m3 14h0m5-15h0m0 2h0m3 13h0m-5 0h0m1 0h0m8-15h0m0 1h0m1 1h0m-3 13h0m8-14h0m-2 14h0m2 1h0m3-16h0m4 1h0m-1 14h0m5-15h0m0 2h0m-1 13h0m7-15h0m-1 1h0m4 14h0m-4 0h0m9-15h0m-4 2h0m2 13h0m2 1h0m3-16h0m1 2h0m-2 12h0m4 2h0m4-15h0m-2 2h0m5 11h0m-4 1h0m5-15h0m1 0h0m3 1h0m-1 14h0m5-13h0m3 12h0m-2 1h0m3-15h0m3 0h0m2 1h0m-2 14h0m2 1h0m6-17h0m0 1h0m-4 2h0m1 16h0m1 0h0m3-17h0m0 2h0m4 2h0m-2 13h0m8-19h0m1 0h0m-1 1h0m1 0h0m-1 1h0m1 0h0m-4 3h0m3 13h0m3-13h0m0 13h0m4 1h0m0 2h0m5-20h0m-2 1h0m3 1h0m-3 0h0m3 1h0m-3 0h0m0 1h0m1 13h0m8-18h0m-1 1h0m0 1h0m0 1h0m0 1h0m-3 14h0m2 0h0m6-17h0m-2 16h0m-1 1h0m6-17h0m0 1h0m1 2h0m2 2h0m-1 12h0m7-18h0m0 1h0m-1 0h0m0 1h0m3 2h0m-4 1h0m0 13h0m-1 1h0m11-19h0m0 1h0m-1 2h0m-4 15h0m5 1h0m-3 1h0m6-20h0m2 18h0m1 0h0m-5 0h0m6-18h0m0 1h0m1 1h0m0 1h0m4 2h0m0 14h0m4-18h0m-2 0h0m2 1h0m-2 0h0m2 1h0m0 1h0m-2 14h0m10-16h0m-1 2h0m0 1h0m-4 2h0m5 10h0m-3 2h0m0 1h0m5-20h0m-1 1h0m1 0h0m0 1h0m1 2h0m2 15h0m0 1h0m3-19h0m0 1h0m0 1h0m0 1h0m-1 14h0m5 1h0m1-18h0m1 0h0m0 1h0m-1 0h0m0 1h0m0 1h0m4 1h0m-3 12h0m3 0h0m7-17h0m0 1h0m0 1h0m0 1h0m-5 15h0m4 0h0m2-17h0m0 1h0m0 1h0m2 3h0m2 13h0m7-19h0m0 1h0m0 1h0m-1 0h0m-2 2h0m-2 1h0m3 15h0m8-15h0m-4 14h0m2 1h0m7-20h0m0 1h0m1 0h0m0 1h0m-1 0h0m0 1h0m-4 14h0m2 1h0m6-12h0m3 14h0m-5 0h0m10-20h0m0 1h0m-1 0h0m1 1h0m-1 0h0m1 1h0m0 1h0m-4 1h0m1 14h0m-1 1h0m9-17h0m-1 1h0m1 1h0m2 2h0m-5 12h0m2 0h0m7-18h0m0 1h0m0 1h0m0 1h0m0 1h0m2 14h0m-1 1h0m2-16h0m1 2h0m4 13h0m-1 1h0m4-20h0m0 1h0m1 0h0m0 1h0m0 1h0m-2 0h0m0 1h0m2 0h0m-3 2h0m5 13h0m4-14h0m-1 0h0m3 14h0m-5 1h0m1 0h0m7-20h0m0 1h0m3 0h0m0 1h0m-3 0h0m-1 2h0m2 14h0m4-13h0m4 13h0m-1 1h0m-3 0h0m6-19h0m1 1h0m-1 0h0m0 1h0m0 1h0m1 0h0m2 15h0m6-14h0m-1 15h0m-2 0h0m5-19h0m0 1h0m1 0h0m4 1h0m-2 16h0m-1 1h0m9-17h0m0 1h0m-5 0h0m0 1h0m4 16h0m2-20h0m0 1h0m1 0h0m-1 1h0m2 0h0m0 2h0m3 3h0m0 12h0m4-19h0m0 1h0m0 1h0m0 1h0m0 1h0m0 1h0m-2 14h0m-1 1h0m6-20h0m0 1h0m0 1h0m5 1h0m-5 0h0m0 1h0m5 0h0m0 1h0m-5 0h0m5 15h0m-3 0h0m9-20h0m-1 1h0m-4 2h0m1 15h0m6-17h0m1 2h0m2 3h0m-3 11h0m9-17h0m1 2h0m-2 0h0m0 1h0m0 2h0m-2 14h0m2 0h0m8-17h0m0 1h0m-4 2h0m0 13h0m3 1h0m1 0h0m5-19h0m0 1h0m-1 0h0m1 1h0m0 1h0m1 16h0m3-14h0m-2 14h0m9-19h0m1 0h0m-2 1h0m2 0h0m0 1h0m-2 0h0m0 1h0m2 0h0m0 1h0m-4 13h0m1 3h0m10-18h0m0 1h0m-1 3h0m-4 12h0m3 2h0m1 0h0m2-20h0m3 1h0m2 19h0m2-19h0m1 2h0m1 15h0m5-18h0m0 1h0m-1 2h0m3 1h0m-4 14h0m4 1h0m6 0h0m-1 2h0m4-21h0m0 1h0m0 1h0m-1 0h0m0 1h0m0 1h0m2 0h0m1 14h0m2 1h0m3-16h0m-2 3h0m5 12h0m1-18h0m0 1h0m1 0h0m0 1h0m-1 0h0m1 1h0m-1 0h0m0 1h0m5 1h0m0 13h0m-4 0h0m3 0h0m7-18h0m0 1h0m-3 3h0m2 14h0m-1 1h0m3-18h0m1 0h0m-1 2h0m3 3h0m-1 11h0m2 3h0m4-20h0m3 0h0m0 1h0m-3 1h0m0 1h0m0 1h0m2 16h0m2-17h0m0 1h0m4 13h0m-2 2h0m8-19h0m0 1h0m0 1h0m0 1h0m0 1h0m-3 13h0m2 1h0m3-17h0m0 1h0m0 1h0m1 2h0m1 1h0m1 1h0m-1 11h0m3 0h0m5-18h0m0 1h0m-2 0h0m0 1h0m2 0h0m-2 1h0m-1 2h0m1 11h0m-2 2h0m6-13h0m4 1h0m-4 12h0m0 1h0m5 0h0m-4 0h0m8-18h0m0 1h0m0 1h0m0 1h0m-2 14h0m4 0h0m1-17h0m0 1h0m0 1h0m2 3h0m0 12h0m3 2h0m3-19h0m1 0h0m0 1h0m-1 2h0m0 1h0m-1 14h0m8-15h0m-2 15h0m1 1h0m6-20h0m-1 1h0m1 0h0m0 1h0m1 18h0m1 0h0m-4 0h0m6-16h0m3 3h0m2 13h0m2-19h0m1 0h0m-1 1h0m1 0h0m-1 1h0m2 1h0m-2 0h0m0 1h0m3 0h0m-1 13h0m-3 2h0m10-16h0m-1 1h0m1 13h0m-4 0h0m6-18h0m1 0h0m0 1h0m0 1h0m-1 0h0m1 1h0m4 2h0m-2 13h0m1 1h0m3-13h0m-1 13h0m5 0h0m1-19h0m0 1h0m2 0h0m0 1h0m-2 0h0m0 1h0m0 1h0m3 0h0m2 14h0m6-18h0m-1 2h0m0 1h0m0 1h0m0 1h0m-4 2h0m2 12h0m-1 0h0m5-19h0m0 1h0m0 1h0m0 1h0m1 15h0m3 2h0m-1 0h0m8-19h0m-5 1h0m0 1h0m2 17h0m6-19h0m1 2h0m-3 15h0m2 2h0m8-20h0m0 1h0m0 1h0m0 1h0m1 1h0m-3 14h0m5-12h0m3 12h0m5-18h0m1 1h0m-3 0h0m3 1h0m-3 0h0m0 1h0m-1 2h0m2 13h0m7-16h0m-3 17h0m0 1h0m9-20h0m2 0h0m-2 1h0m2 1h0m0 1h0m-3 0h0m3 1h0m-1 13h0m-3 2h0m8-13h0m1 14h0m-1 0h0m6-20h0m-1 1h0m1 0h0m0 1h0m-1 0h0m0 1h0m1 0h0m1 2h0m-3 0h0m-1 13h0m1 2h0m8-15h0m-3 13h0m3 1h0m4-19h0m4 1h0m-4 0h0m0 1h0m4 1h0m-5 15h0m8-13h0m-2 13h0m4 1h0m3-19h0m-1 1h0m2 1h0m-2 2h0m2 0h0m0 13h0m7-16h0m0 1h0m-1 3h0m2 12h0m-2 1h0m-2 0h0m6-18h0m1 0h0m4 1h0m0 1h0m0 1h0m-3 16h0m9-18h0m0 1h0m0 1h0m-5 14h0m2 2h0m3 1h0m1-20h0m3 3h0m1 4h0m7-7h0m0 1h0m-2 3h0m-1 2h0m1 13h0m3-19h0m5 0h0m-5 1h0m5 1h0m0 1h0m-2 1h0m2 14h0m-3 1h0m-1 0h0m9-19h0m1 0h0m-1 1h0m0 2h0m-1 14h0m4-15h0m1 2h0m0 3h0m1 2h0m0 2h0m0 1h0m0 1h0m0 1h0m0 1h0m-1 2h0m0 1h0m-1 0h0"/>
<path d="M104.1 60.9H1361.0" stroke="#008000" stroke-width="2.08" fill="none"/>
<path class="pv" d="M162.0 321.5V35.5"/><path class="pv" d="M732.0 321.5V35.5"/><path class="pv" d="M1303.0 321.5V35.5"/>
</g>
<rect class="sp" x="105.5" y="35.5" width="1380.0" height="286.0"/>
<path class="tk" d="M162.5 321.5v4.9M395.5 321.5v4.9M628.5 321.5v4.9M861.5 321.5v4.9M1094.5 321.5v4.9M1327.5 321.5v4.9"/><text class="n" x="163.1" y="341.8" text-anchor="middle">0</text><text class="n" x="394.7" y="341.8" text-anchor="middle">10000</text><text class="n" x="627.7" y="341.8" text-anchor="middle">20000</text><text class="n" x="860.7" y="341.8" text-anchor="middle">30000</text><text class="n" x="1093.7" y="341.8" text-anchor="middle">40000</text><text class="n" x="1326.7" y="341.8" text-anchor="middle">50000</text>
<path class="tk" d="M105.5 55.5h-4.9M105.5 105.5h-4.9M105.5 155.5h-4.9M105.5 205.5h-4.9M105.5 256.5h-4.9M105.5 306.5h-4.9"/><text x="95.4" y="60.1" text-anchor="end">9.6</text><text x="95.4" y="110.1" text-anchor="end">9.4</text><text x="95.4" y="160.1" text-anchor="end">9.2</text><text x="95.4" y="211.1" text-anchor="end">9.0</text><text x="95.4" y="261.1" text-anchor="end">8.8</text><text x="95.4" y="311.1" text-anchor="end">8.6</text>
<text class="t" x="794.6" y="27" text-anchor="middle">AGASC ID 896404616.0</text>
<text x="447.3" y="311.8" text-anchor="middle">4683</text><text x="1017.3" y="291.8" text-anchor="middle">4684</text>
<rect class="lg" x="1361.3" y="42.3" width="117.3" height="27.1" rx="2.8" ry="2.8"/><path d="M1366.1 54.2h29.9" stroke="#008000" stroke-width="2.08" fill="none"/><text x="1406.8" y="59.1">mag<tspan class="sub" dy="1.6" dx="-0.7" style="font-size:10.15px">AGASC</tspan></text>
<rect class="lg" x="1347.9" y="247.3" width="130.7" height="67.0" rx="2.8" ry="2.8"/><path class="dr" style="stroke-width:3.7" d="M1367.4 260.5h0"/><text x="1392.4" y="263.7">not OK</text><path class="do" style="stroke-width:3.7" d="M1367.4 281.4h0"/><text x="1392.4" y="284.6">Highlighted</text><path class="dk" style="stroke-width:3.7" d="M1367.4 302.4h0"/><text x="1392.4" y="305.6">OK</text>
<!-- panel 2 -->
<g clip-path="url(#c2)">
<path class="do" d="M171.5 435.5h0m1 1h0m0 3h0m-1 3h0m0 8h0m1 8h0m0 1h0m10-19h0m0 10h0m0 9h0m-2 114h0m3-140h0m0 1h0m0 1h0m0 3h0m0 3h0m0 3h0m0 2h0m0 1h0m0 4h0m0 4h0m0 3h0m11-10h0m0 8h0m-3 142h0m-1 26h0m8-172h0m8-14h0m0 20h0m0 1h0m-1 115h0m-2 8h0m4-128h0m10-5h0m0 1h0m0 3h0m-2 1h0m2 0h0m0 1h0m0 1h0m0 2h0m0 1h0m6-2h0m7-15h0m-2 11h0m-1 190h0m4-207h0m0 6h0m0 9h0m0 5h0m0 3h0m9-26h0m0 3h0m0 8h0m0 10h0m-1 3h0m1 2h0m11-20h0m0 2h0m0 10h0m0 1h0m0 1h0m0 6h0m2 195h0m2-196h0m7-19h0m1 14h0m-1 3h0m3 2h0m14-15h0m0 11h0m6 5h0m11-1h0m-1 119h0m8-131h0m0 8h0m0 2h0m5 1h0m-2 123h0m2 3h0m-1 27h0m5-157h0m7-13h0m1 1h0m-1 1h0m1 1h0m-1 0h0m0 1h0m0 3h0m0 4h0m0 3h0m12-10h0m-4 4h0m4 8h0m0 1h0m2 2h0m4 121h0m5-141h0m0 3h0m0 4h0m0 6h0m0 3h0m0 2h0m1 1h0m-1 0h0m0 1h0m11-1h0m1 0h0m0 1h0m-1 0h0m-2 120h0m9-124h0m0 3h0m5-20h0m2 6h0m-2 7h0m0 2h0m0 2h0m0 1h0m0 2h0m0 1h0m11-24h0m0 5h0m0 1h0m0 3h0m1 3h0m-1 1h0m0 1h0m0 3h0m0 1h0m0 121h0m1 5h0m7-2h0m-2 0h0m10-134h0m0 5h0m-1 3h0m-4 1h0m5 3h0m-5 1h0m0 1h0m5 1h0m6 116h0m-5 4h0m6-141h0m1 5h0m-1 7h0m0 2h0m0 4h0m0 1h0m1 1h0m-1 1h0m3 129h0m8-148h0m0 12h0m0 1h0m0 4h0m-2 130h0m3-128h0m5 123h0m-1 7h0m9-139h0m0 6h0m0 3h0m9-2h0m-1 3h0m8-11h0m-2 129h0m2 3h0m5-130h0m0 1h0m0 7h0m-1 0h0m4-16h0m1 135h0m7-144h0m0 1h0m0 1h0m0 1h0m0 1h0m0 2h0m0 4h0m0 2h0m0 1h0m0 3h0m0 4h0m0 1h0m0 1h0m0 3h0m2 170h0m6-187h0m0 16h0m3-21h0m0 3h0m0 3h0m0 1h0m0 2h0m0 2h0m0 3h0m1 3h0m0 2h0m-1 0h0m0 2h0m-2 165h0m7-178h0m7 12h0m-1 1h0m12-10h0m0 9h0m0 2h0m0 1h0m6-10h0m0 9h0m5-7h0m11-17h0m0 17h0m0 3h0m0 2h0m0 117h0m-4 2h0m2 27h0m3-155h0m0 8h0m2 151h0m20-152h0m1 3h0m1-5h0m8-15h0m-1 6h0m0 2h0m3 5h0m0 2h0m-3 2h0m3 1h0m13-6h0m0 4h0m0 2h0m1-8h0m5 155h0m4-145h0m-2 1h0m1 1h0m7-21h0m1 17h0m-1 4h0m7 158h0m10-184h0m-1 0h0m1 1h0m-1 0h0m0 1h0m0 1h0m0 1h0m1 1h0m-1 2h0m1 2h0m-1 0h0m1 1h0m0 1h0m-1 1h0m0 2h0m0 3h0m1 1h0m-1 0h0m1 2h0m15 4h0m7 1h0m11-14h0m0 7h0m0 2h0m0 5h0m1-12h0m11-3h0m0 3h0m0 7h0m-5 1h0m5 2h0m0 1h0m3-7h0m8-16h0m0 1h0m0 1h0m0 4h0m0 1h0m0 2h0m0 1h0m0 3h0m0 1h0m0 2h0m0 2h0m0 1h0m0 1h0m0 2h0m0 1h0m1 123h0m10-123h0m0 117h0m12-139h0m0 5h0m1 13h0m-1 0h0m0 6h0m3 115h0m1 3h0m7-120h0m3 123h0m3-141h0m0 4h0m6-6h0m0 11h0m-1 0h0m12-11h0m0 15h0m0 1h0m0 2h0m0 1h0m-1 1h0m1 1h0m4 124h0m3-125h0m1 150h0m3-164h0m1 6h0m-1 2h0m4 2h0m-3 1h0m3 3h0m-2 124h0m7-4h0m2 2h0m1-140h0m0 2h0m0 8h0m0 6h0m0 1h0m0 1h0m7-70h0m4 29h0m0 1h0m0 1h0m0 2h0m0 2h0m0 4h0m0 1h0m0 2h0m0 3h0m0 2h0m0 5h0m0 1h0m0 2h0m0 1h0m0 1h0m0 1h0m0 3h0m-4 8h0m5-22h0m0 1h0m0 15h0m11-46h0m0 13h0m0 4h0m-1 4h0m1 5h0m0 2h0m-1 0h0m1 5h0m0 1h0m0 2h0m-1 0h0m0 3h0m0 2h0m1 2h0m0 1h0m0 3h0m0 2h0m0 1h0m-1 1h0m1 1h0m0 1h0m8-54h0m3 16h0m0 1h0m0 6h0m0 2h0m0 1h0m0 3h0m0 3h0m0 4h0m0 1h0m0 1h0m-1 2h0m1 0h0m0 1h0m0 3h0m0 1h0m0 1h0m0 2h0m-1 1h0m1 3h0m0 2h0m7-24h0m-1 21h0m5-34h0m0 8h0m0 1h0m0 2h0m0 4h0m0 1h0m0 2h0m0 2h0m0 5h0m0 1h0m0 4h0m1 2h0m-1 1h0m0 1h0m0 1h0m-3 192h0m7-212h0m-1 5h0m9-26h0m0 1h0m0 2h0m0 1h0m0 1h0m0 3h0m0 7h0m0 1h0m0 2h0m0 1h0m0 1h0m0 4h0m-1 1h0m1 2h0m-1 2h0m1 3h0m-1 0h0m1 2h0m0 1h0m0 1h0m-1 0h0m1 4h0m8-18h0m0 2h0m0 12h0m-1 0h0m0 7h0m-2 169h0m6-211h0m0 2h0m0 1h0m0 2h0m0 1h0m0 3h0m0 1h0m0 3h0m0 1h0m0 4h0m0 4h0m0 5h0m0 2h0m0 1h0m0 1h0m0 1h0m0 1h0m0 1h0m0 4h0m0 3h0m5 0h0m6-42h0m1 4h0m-1 6h0m0 1h0m1 4h0m0 9h0m0 1h0m0 4h0m-1 4h0m2 0h0m-2 1h0m1 0h0m-1 2h0m2 0h0m-1 0h0m-1 1h0m1 1h0m-1 1h0m12-35h0m0 1h0m0 11h0m0 1h0m0 1h0m0 2h0m0 3h0m0 2h0m0 1h0m0 1h0m0 1h0m0 2h0m0 1h0m0 6h0m0 1h0m0 1h0m6-3h0m0 2h0m0 3h0m0 1h0m5-33h0m0 13h0m0 6h0m0 1h0m0 7h0m0 1h0m11-27h0m0 2h0m0 9h0m0 3h0m0 3h0m0 2h0m0 5h0m0 7h0m-1 199h0m2-235h0m0 2h0m0 3h0m0 2h0m0 3h0m0 5h0m0 6h0m0 2h0m0 3h0m0 1h0m0 6h0m0 1h0m0 1h0m0 2h0m11-41h0m0 1h0m0 4h0m0 2h0m0 4h0m0 2h0m0 3h0m0 7h0m0 1h0m0 3h0m0 1h0m0 1h0m0 1h0m0 3h0m0 3h0m0 3h0m0 1h0m0 1h0m-2 152h0m-2 2h0m15-196h0m0 3h0m0 2h0m0 1h0m0 3h0m0 1h0m1 1h0m-1 2h0m0 4h0m0 3h0m0 2h0m0 3h0m1 1h0m-1 0h0m1 1h0m-1 3h0m0 4h0m0 1h0m1 0h0m-1 1h0m1 0h0m0 5h0m11-39h0m0 5h0m0 1h0m0 3h0m0 1h0m0 4h0m0 4h0m0 1h0m0 3h0m0 1h0m0 2h0m-1 5h0m1 2h0m-1 3h0m1 2h0m0 2h0m0 1h0m-3 1h0m14-36h0m0 1h0m0 5h0m0 7h0m0 1h0m0 2h0m0 5h0m0 3h0m0 4h0m0 1h0m0 3h0m0 1h0m0 1h0m12-37h0m0 8h0m-1 2h0m0 8h0m1 4h0m-1 2h0m0 3h0m0 3h0m1 0h0m-1 1h0m1 1h0m-1 2h0m0 3h0m-1 0h0m2 1h0m11-18h0m0 4h0m0 2h0m0 5h0m0 1h0m-1 1h0m1 5h0m-2 152h0m13-188h0m0 2h0m0 4h0m0 3h0m0 7h0m0 1h0m0 2h0m0 8h0m0 3h0m0 5h0m12-37h0m0 1h0m0 3h0m-1 1h0m1 1h0m0 2h0m0 2h0m0 2h0m0 7h0m-1 2h0m0 1h0m1 2h0m-1 0h0m0 1h0m0 2h0m5 1h0m-4 1h0m4 1h0m-5 1h0m1 2h0m0 1h0m0 1h0m0 1h0m0 1h0m-1 0h0m5 1h0m4-65h0m-2 222h0m5-191h0m0 9h0m0 2h0m0 2h0m0 1h0m0 7h0m0 1h0m0 2h0m0 5h0m0 3h0m11-35h0m0 13h0m0 1h0m0 1h0m0 5h0m0 1h0m0 1h0m0 1h0m0 8h0m0 2h0m0 2h0m0 1h0m1-31h0m0 11h0m0 9h0m0 7h0m11-14h0m0 4h0m0 7h0m0 3h0m0 1h0m-1 4h0m1 0h0m2-4h0m9-32h0m0 2h0m0 4h0m0 4h0m0 1h0m0 1h0m0 4h0m0 3h0m0 2h0m0 3h0m0 1h0m0 2h0m0 2h0m0 1h0m0 3h0m0 1h0m12-38h0m-1 3h0m0 2h0m0 2h0m0 2h0m0 1h0m0 1h0m1 2h0m0 3h0m0 3h0m-1 2h0m0 4h0m0 1h0m0 3h0m0 1h0m1 0h0m0 2h0m0 2h0m-1 0h0m1 4h0m-1 1h0m4 149h0m8-186h0m0 3h0m0 7h0m0 2h0m0 1h0m0 1h0m0 2h0m0 2h0m0 1h0m1 2h0m-1 0h0m0 1h0m0 4h0m0 1h0m0 1h0m0 3h0m0 2h0m0 2h0m0 3h0m11-40h0m0 1h0m0 1h0m0 2h0m0 5h0m0 2h0m0 3h0m0 2h0m0 1h0m0 1h0m0 1h0m-2 1h0m2 0h0m0 1h0m0 1h0m0 1h0m0 1h0m0 2h0m0 3h0m0 4h0m0 1h0m-2 1h0m2 0h0m1 1h0m-1 1h0m-2 0h0m2 1h0m0 1h0m6-11h0m0 5h0m0 3h0m0 4h0m5-41h0m1 3h0m0 8h0m0 3h0m-1 1h0m0 3h0m1 4h0m0 5h0m-1 0h0m1 2h0m-1 0h0m1 2h0m-1 2h0m1 1h0m-1 1h0m1 1h0m-1 5h0m12-38h0m0 3h0m0 1h0m0 3h0m0 1h0m0 5h0m0 1h0m0 1h0m0 1h0m0 1h0m0 2h0m0 9h0m0 2h0m0 1h0m-1 3h0m1 0h0m0 1h0m-1 0h0m1 2h0m0 1h0m0 1h0m11-37h0m0 1h0m0 13h0m0 2h0m0 7h0m0 1h0m0 5h0m0 2h0m0 1h0m0 1h0m0 1h0m0 1h0m11-40h0m0 15h0m0 2h0m0 3h0m0 4h0m0 3h0m0 1h0m0 2h0m0 7h0m1-38h0m0 1h0m0 1h0m0 1h0m0 3h0m0 1h0m0 2h0m0 1h0m0 2h0m0 1h0m0 7h0m0 1h0m0 2h0m0 6h0m0 1h0m0 12h0m11-40h0m0 1h0m0 7h0m0 4h0m0 1h0m0 1h0m0 4h0m0 6h0m0 1h0m0 2h0m0 1h0m0 2h0m-3 5h0m3 0h0m0 1h0m0 2h0m0 2h0m0 1h0m11-37h0m0 7h0m0 6h0m0 4h0m1 2h0m0 2h0m-1 1h0m0 1h0m0 1h0m1 0h0m-1 3h0m1 1h0m0 1h0m0 3h0m0 2h0m-1 0h0m0 2h0m2-5h0m10-30h0m0 1h0m0 2h0m0 6h0m0 2h0m0 1h0m0 4h0m0 3h0m0 1h0m0 1h0m0 2h0m-1 1h0m1 0h0m0 1h0m0 3h0m0 1h0m-2 4h0m2 1h0m-2 0h0m13-14h0m0 6h0m0 7h0m3-9h0m2 164h0m6-195h0m1 0h0m-1 1h0m0 1h0m1 0h0m0 1h0m-1 2h0m1 0h0m-1 1h0m0 1h0m0 4h0m1 5h0m0 1h0m-1 1h0m0 2h0m1 0h0m0 1h0m-1 1h0m1 0h0m0 2h0m-1 1h0m0 1h0m1 0h0m-1 1h0m1 1h0m0 7h0m0 6h0m11-38h0m0 12h0m0 5h0m0 2h0m0 4h0m0 2h0m0 4h0m0 1h0m0 5h0m0 2h0m0 1h0m0 1h0m-2 146h0m13-187h0m0 5h0m0 3h0m1 2h0m-1 2h0m1 3h0m-1 0h0m0 1h0m0 4h0m0 1h0m0 1h0m0 4h0m0 1h0m0 3h0m0 2h0m0 1h0m1 2h0m-1 1h0m0 1h0m1 0h0m0 2h0m-1 1h0m9-8h0m0 5h0m1 160h0m2-188h0m0 2h0m0 3h0m0 1h0m0 1h0m0 2h0m-1 2h0m1 1h0m0 1h0m0 3h0m0 6h0m-1 2h0m0 3h0m0 1h0m1 0h0m0 3h0m11-28h0m0 4h0m0 11h0m0 1h0m0 2h0m0 3h0m0 1h0m0 1h0m0 2h0m0 1h0m2 1h0m-2 2h0m0 1h0m11-35h0m0 11h0m0 2h0m0 2h0m0 1h0m0 4h0m0 1h0m0 1h0m0 1h0m0 5h0m0 1h0m0 1h0m0 3h0m1-30h0m0 10h0m0 12h0m0 2h0m11-24h0m0 6h0m0 6h0m0 8h0m0 5h0m0 2h0m-1 0h0m-4 0h0m0 1h0m5 1h0m-4 1h0m0 1h0m8-9h0m0 8h0m7-41h0m0 1h0m0 1h0m0 1h0m0 5h0m0 1h0m0 6h0m0 1h0m0 1h0m0 2h0m0 4h0m0 1h0m0 2h0m0 3h0m0 1h0m0 4h0m0 1h0m1 2h0m0 1h0m-1 3h0m11-38h0m1 3h0m-1 4h0m1 6h0m0 1h0m-1 3h0m1 0h0m-1 4h0m1 1h0m0 1h0m-1 4h0m0 4h0m1 2h0m-1 1h0m-2 0h0m3 1h0m0 3h0m0 1h0m5-11h0m0 2h0m0 7h0m0 2h0m6-40h0m0 3h0m0 1h0m0 2h0m0 4h0m0 4h0m0 1h0m0 2h0m0 1h0m0 2h0m0 1h0m0 8h0m0 3h0m0 3h0m0 1h0m0 2h0m0 1h0m0 1h0m11-35h0m0 5h0m0 1h0m0 4h0m0 3h0m0 4h0m0 2h0m0 1h0m1 1h0m-1 1h0m0 5h0m0 2h0m0 2h0m0 2h0m1 2h0m11-39h0m0 16h0m0 2h0m0 1h0m0 3h0m0 1h0m3 7h0m-3 2h0m-1 1h0m1 1h0m0 1h0m-1 3h0m4 1h0m8-41h0m0 2h0m0 1h0m0 3h0m0 2h0m0 1h0m0 4h0m0 6h0m0 4h0m0 4h0m0 1h0m0 3h0m0 4h0m0 2h0m0 1h0m0 1h0m0 2h0m16-29h0m-5 2h0m0 1h0m0 2h0m0 2h0m5 1h0m-5 0h0m1 2h0m0 1h0m0 1h0m-1 1h0m0 3h0m0 1h0m0 3h0m0 2h0m1 2h0m0 3h0m-1 1h0m5 1h0m7-33h0m0 6h0m0 1h0m0 2h0m0 15h0m0 1h0m0 3h0m0 2h0m0 2h0m0 2h0m9-58h0m2 19h0m0 13h0m0 1h0m0 1h0m0 1h0m0 6h0m0 2h0m0 4h0m0 6h0m0 1h0m0 1h0m0 1h0m0 1h0m11-25h0m1 3h0m-1 11h0m0 1h0m0 2h0m1 3h0m0 1h0m0 1h0m0 1h0m-1 1h0m3 1h0"/>
<path fill="#ffa500" stroke="#ffa500" stroke-width="0.6" stroke-linejoin="round" d="M184.8 660.9h5.3l-2.65 5.3zM190.8 660.9h5.3l-2.65 5.3zM217.5 660.9h5.3l-2.65 5.3zM218.9 660.9h5.3l-2.65 5.3zM251.8 660.9h5.3l-2.65 5.3zM270.8 660.9h5.3l-2.65 5.3zM293.8 660.9h5.3l-2.65 5.3zM314.8 660.9h5.3l-2.65 5.3zM340.8 660.9h5.3l-2.65 5.3zM348.2 660.9h5.3l-2.65 5.3zM349.4 660.9h5.3l-2.65 5.3zM369.8 660.9h5.3l-2.65 5.3zM399.8 660.9h5.3l-2.65 5.3zM414.8 660.9h5.3l-2.65 5.3zM424.8 660.9h5.3l-2.65 5.3zM430.9 660.9h5.3l-2.65 5.3zM488.8 660.9h5.3l-2.65 5.3zM490.2 660.9h5.3l-2.65 5.3zM494.2 660.9h5.3l-2.65 5.3zM495.8 660.9h5.3l-2.65 5.3zM535.8 660.9h5.3l-2.65 5.3zM578.8 660.9h5.3l-2.65 5.3zM602.6 660.9h5.3l-2.65 5.3zM641.6 660.9h5.3l-2.65 5.3zM695.8 660.9h5.3l-2.65 5.3zM816.8 660.9h5.3l-2.65 5.3zM818.0 660.9h5.3l-2.65 5.3zM823.8 660.9h5.3l-2.65 5.3zM862.8 660.9h5.3l-2.65 5.3zM864.6 660.9h5.3l-2.65 5.3zM887.8 660.9h5.3l-2.65 5.3zM960.8 660.9h5.3l-2.65 5.3zM962.8 660.9h5.3l-2.65 5.3zM970.6 660.9h5.3l-2.65 5.3zM985.8 660.9h5.3l-2.65 5.3zM989.8 660.9h5.3l-2.65 5.3zM1032.8 660.9h5.3l-2.65 5.3zM1058.8 660.9h5.3l-2.65 5.3zM1086.8 660.9h5.3l-2.65 5.3zM1121.8 660.9h5.3l-2.65 5.3zM1123.8 660.9h5.3l-2.65 5.3zM1174.8 660.9h5.3l-2.65 5.3zM1185.8 660.9h5.3l-2.65 5.3zM1233.8 660.9h5.3l-2.65 5.3zM1245.9 660.9h5.3l-2.65 5.3zM1295.8 660.9h5.3l-2.65 5.3z"/>
<path fill="#000" d="M161 507.2H162V487.5H163V483.2H164V490H165V490.8H166V477.5H167V490.5H168V490.8H169V484.8H170V481.2H171V459.2H172V458.5H173V468H174V480.5H175V492H176V492.5H177V479.5H178V479.8H179V497H180V497.5H181V484.2H182V459.2H183V489H184V489.5H185V490H186V490.2H187V486.8H188V486.5H189H190V485.2H191V483.2H192V482.5H193V480.2H194V472.5H195V480H196V488H197V488.2H198V476.5H199V477H200V480H201V481H202V484H203V484.5H204V481.2H205V465.2H206V459.5H207V460H208V477H209V490.8H210V490.5H211V490.8H212V489.2H213V484.5H214V485H215V485.8H216V485.5H217V458.5H218V473H219V479.5H220V483.8H221V483.5H222V478.5H223V479H224V480H225V480.5H226V490.8H227V475.2H228V461.5H229H230V461.8H231V477H232V487.8H233V487.5H234V487.8H235V478H236V481.5H237V480.2H238V472.2H239V465.2H240V460H241V462H242V489.5H243V490H244V490.2H245V489.5H246V490H247V490.5H248V491H249V492H250V491.2H251V459.5H252V484H253V485.5H254V486H255V491H256V492H257V494.5H258V494.2H259V486.2H260V504.8H261V484.5H262V468.5H263V469H264V483H265V494H266V494.8H267V501.5H268V501.2H269V500.5H270V500.8H271V482.5H272V482.8H273V482.2H274V463.5H275V482H276V488.8H277V493.8H278V488.2H279V472.5H280V488H281V490H282V491.5H283V491.2H284V480.2H285V472.2H286V498H287V492.8H288V492.5H289V493H290V493.5H291V485.5H292V486H293V487H294V478.2H295V477.5H296V477.8H297V477.5H298V477.8H299V489.5H300V496.5H301V496.2H302V477.2H303V476.5H304V477H305V492.5H306V492.2H307V478.2H308V477.5H309V475.2H310V481.5H311V481.2H312V485.5H313V498H314V498.2H315V484.8H316V492H317V492.2H318V491.5H319V492H320V493H321V493.5H322V492.2H323V491.5H324V497.8H325V497.5H326V488.2H327V478.5H328V478.8H329V482H330V481.2H331V464.5H332V465H333V484H334V483.2H335V482.5H336V480.2H337V492H338V492.8H339V492.2H340V491.5H341V490.2H342V460.2H343V459.5H344V475H345V486.5H346V497.5H347V498H348V499.8H349V499.5H350V494.5H351V494.8H352V494.2H353V485.5H354V486H355V486.8H356V500.8H357V487H358V489.5H359V490H360V492.5H361V496.8H362V496.2H363V494.2H364V493.2H365V462.5H366V468H367V477.5H368V482H369V490.8H370V494.5H371V485.8H372V485.2H373V484.5H374V479.2H375V476.2H376V467.5H377V468H378V480.5H379V480.2H380V490.5H381V490.2H382V480.2H383V475.8H384V474.2H385V467.8H386V467.2H387V466.2H388V465.5H389V473.8H390V492.5H391V493H392V493.2H393V475H394V483H395V482.2H396V481.5H397V475.5H398V469.2H399V458.5H400V459H401V477H402V480H403V480.8H404V480.5H405H406V481H407V481.5H408V481.8H409V481.2H410V464.2H411V463.5H412V477H413V481.8H414V481.5H415V490H416V491H417V491.8H418V491.2H419V479.8H420V479.2H421V468.2H422V467.5H423V468H424V468.5H425V486.5H426V487H427V487.8H428V485.2H429V484.5H430V480.5H431V480.8H432V480.2H433V469H434V470H435V483.5H436V483.2H437V482.5H438V490.8H439V479.2H440V474.5H441V479H442V493.8H443V478.2H444V474.5H445H446V475H447V478.8H448V474.5H449V475H450V482H451V484H452V484.5H453V494.5H454V494.2H455V463.2H456V462.5H457V493.5H458H459H460V494H461V495.8H462V495.5H463V494.2H464V458.5H465V459H466V473.8H467V464.2H468V463.5H469V481H470V485H471V484.2H472V480.5H473V481H474V490.5H475H476H477V482.8H478V481.2H479V466.2H480V476H481V483H482V486.5H483V487H484V487.5H485V504.5H486V498.2H487V490.2H488V483.5H489V484H490V486.5H491V487H492V492H493V493.5H494V493.2H495V490.2H496V489.5H497V489.8H498V493H499V494H500V493.2H501V485.5H502V486H503V486.8H504V491.5H505V491.2H506V496H507V498.8H508V498.5H509V495.2H510V493.2H511V492.2H512V470.5H513H514V481.5H515V492.5H516V496.5H517V496.8H518V495.2H519V489.2H520V482.2H521V489H522V493.5H523V493.8H524V493.5H525V493.8H526V493.2H527V487.2H528V486.2H529V485.5H530V491H531V496H532V497.5H533V497.8H534V485H535V485.2H536V468.5H537V469H538V486.8H539V492H540V493.5H541V493.2H542V490.2H543V489.5H544V470.5H545V479.8H546V475.2H547V458.5H548V475H549V481.5H550V481.8H551V488H552V490H553V490.5H554V490.8H555V495H556V497.8H557V497.2H558V495.2H559V467H560V467.5H561V468H562V478H563V484.5H564V488.8H565V488.5H566V492.5H567H568V461.5H569V462H570V474H571V493H572V493.8H573V493.5H574V493.2H575V492.2H576V491.5H577V491.2H578V498.5H579V498.2H580V486.2H581V469.5H582V485.8H583V479.8H584V475.5H585V480H586V481H587V490.5H588V490.8H589V489.2H590V488.5H591V482.2H592V477.2H593V490.5H594V490.2H595V482.5H596V483H597V484H598V485.5H599V485.2H600V483.2H601V482.5H602V480.2H603V475.5H604V488.5H605V488.8H606V494H607V494.2H608V469.2H609V468.5H610V469H611V480.5H612V480.2H613V479.5H614V477.2H615V462.5H616V463H617V470H618V483H619V484H620V484.2H621V492.5H622H623V477.5H624V477.8H625V475.2H626V458.5H627V459H628V478H629V485.5H630V486H631V487H632V488H633V480.5H634V484.5H635V484.8H636V482.2H637V472.5H638V460.5H639V461H640V473.8H641V467.5H642V481H643V487.8H644V492H645V492.8H646V492.5H647V487.2H648V498.5H649V498.2H650V478H651V484.5H652V488.8H653V488.5H654V489H655V491H656V491.5H657V491.8H658V491.2H659V490.5H660V481.2H661V462H662V480.8H663V486.2H664V476.2H665V482.5H666V483H667V487H668V488.8H669V488.5H670V488.8H671V482.2H672V458.5H673V459H674V477H675V486.8H676V486.5H677V496H678V496.5H679V492.2H680V480.2H681V479.5H682V479.2H683V478.5H684V482.8H685V486H686V488.5H687V489H688V489.2H689V488.2H690V487.5H691V495H692V495.2H693V488.2H694V483.2H695V482.5H696V482.8H697V482.2H698V494H699V494.2H700V482.8H701V482.5H702V487H703V487.5H704V484.2H705V467.2H706V466.5H707V481H708V486.8H709V486.5H710V490.5H711V501.5H712V479.8H713V479.5H714V486.8H715V486.5H716V492.2H717V459.5H718V474H719V496H720V497H721V497.8H722V497.5H723V490.8H724V490.5H725V491H726V491.5H727H728V474.2H729V473.5H730V474H731V482.8H732V482.5H733V482.8H734V491.5H735V503.8H736V503.5H737V499H738V499.5H739V499.8H740V503H741V504H742V504.2H743V520.8H744V510.2H745V509.5H746V510H747V513H748V513.5H749V514H750V521.5H751V521.2H752V520.5H753V487H754V501.5H755V505.5H756V506H757V508H758V509.5H759V509.8H760V506.2H761V470.5H762V468.2H763V493H764V521.5H765H766V522H767V522.2H768V510.5H769V480.2H770V486H771V502.8H772V502.5H773V498.2H774V484.5H775V485H776V498.5H777H778V498.8H779V497.2H780V509.5H781V510H782V512.8H783V512.5H784V510.2H785V479.2H786V478.5H787V483H788V507.5H789V508H790V508.5H791V512H792V512.8H793V506.5H794V496H795V500H796V500.5H797V498.2H798V516.5H799V516.8H800V534.5H801V495.5H802V496H803V498H804V500H805V512.5H806V513H807V513.8H808V513.5H809V458.5H810V501.5H811V502H812V504H813V507.5H814V512H815V513H816V513.2H817V512.5H818V479.8H819V474.2H820V487.8H821V505.5H822V505.8H823V501.5H824V498.2H825V495.2H826V494.5H827V500H828V500.8H829V500.5H830V518H831V518.2H832V508.5H833V496.5H834V497H835V497.8H836V497.5H837V507.5H838V508H839V512H840V512.5H841V504.5H842V504.2H843V483.5H844V484H845V507.5H846V507.8H847V507.2H848V506.5H849V506.2H850V498.5H851V505.8H852V498.2H853V489.2H854V513.8H855V501H856V502H857V501.2H858V517H859V518H860V518.5H861V505.5H862V506H863V509H864V510.5H865V510.8H866V510.2H867V508.2H868V505.2H869V494.5H870V504.8H871V517.8H872V517.2H873V516.5H874H875V510.2H876V502.5H877V490H878V499H879V508.8H880V515.8H881V508.2H882V485.5H883V490H884V502H885V514H886V514.5H887V514.2H888V505.5H889V505.8H890V505.2H891V498.8H892V498.5H893V509.8H894V505.5H895V520.8H896V526.5H897V526.8H898V474.5H899V473.2H900V499H901V501.5H902V510H903V525.8H904V525.5H905V526H906V526.2H907V499.5H908V500H909V502.8H910V502.5H911V516H912V516.2H913V515.2H914V482.5H915V483H916V501.8H917V510H918V510.5H919V511H920V511.2H921V489.2H922V487.2H923V486.5H924V494H925V513.8H926V509.5H927V513.8H928V510.5H929V509.2H930V503H931V504H932V495H933V523H934V523.8H935V515H936V514.2H937V501.2H938V472.5H939V510.5H940V510.2H941V509.2H942V508.5H943V506.2H944V505.2H945V487.2H946V486.5H947V491H948V505.5H949V504.2H950V514H951V514.8H952V514.5H953V510.5H954V495.5H955H956V470.5H957V516.5H958V516.2H959V510.5H960V510.8H961V510.2H962V486.5H963H964V505H965V506.5H966V506.2H967V493.5H968V485H969V486H970V487.8H971V502.5H972V502.8H973V502.5H974V514H975V515H976V515.5H977V514.2H978V490.5H979V483.5H980H981V502H982V513H983V513.5H984V512.2H985V511.5H986V493.2H987V498.5H988V499H989V499.2H990V498.5H991V505.5H992V505.2H993V504.5H994V504.2H995V499.2H996V498.5H997V505.5H998V506H999V508.5H1000V508.2H1001V517.5H1002V507.2H1003V455.5H1004V514.5H1005V508.5H1006V509H1007V509.8H1008V509.2H1009V499.5H1010V491.5H1011V492H1012V492.2H1013V491.5H1014V491.2H1015V499H1016V512.8H1017V499.2H1018V487.2H1019V486.5H1020V496H1021V502H1022V503.5H1023V503.2H1024V490.2H1025V455.5H1026V496H1027V498.5H1028V499H1029V500H1030V517.5H1031H1032V523.5H1033V523.2H1034V495.2H1035V494.5H1036V495H1037V502H1038V502.5H1039V509H1040V503.2H1041V516.2H1042V496.2H1043V495.5H1044V503H1045V503.5H1046V508.5H1047V456.5H1048V524H1049V501H1050V501.8H1051V499.2H1052V507H1053V507.5H1054V498H1055V508H1056V512H1057V512.2H1058V511.5H1059V491H1060V506H1061V506.5H1062H1063H1064V515.8H1065V503.2H1066V502.5H1067V483.5H1068V509.5H1069V510H1070V510.2H1071V497.5H1072V523H1073V523.5H1074V516.2H1075V503.5H1076H1077V503.2H1078V502.5H1079V503H1080V503.5H1081V497.2H1082V495.2H1083V506.5H1084V507H1085V508.5H1086V508.2H1087V507.5H1088V519.5H1089V523.2H1090V494.2H1091V480.5H1092V462.2H1093V482.5H1094V488H1095V510H1096V512H1097V514H1098V514.8H1099V493.5H1100V509H1101V508.2H1102V507.5H1103V508H1104V509.8H1105V509.5H1106V484.8H1107V491.5H1108V502.5H1109V502.2H1110V506.5H1111V523.8H1112V523.5H1113V523.2H1114V515.8H1115V503.5H1116H1117V496H1118V498.8H1119V507.5H1120V519.8H1121V519.5H1122V519.8H1123V519.5H1124V513.8H1125V505.2H1126V504.5H1127V505H1128V512.5H1129V512.8H1130V510.2H1131V495.5H1132V496H1133V499.5H1134V509.8H1135V509.5H1136V520H1137V521.8H1138V544H1139V458.5H1140V464H1141V505H1142V505.8H1143V505.5H1144V505.8H1145V505.2H1146V487.2H1147V486.5H1148V481.8H1149V473.2H1150V462.5H1151V498H1152V503.5H1153V511H1154V514.5H1155V514.2H1156V505.5H1157H1158V506H1159V508.5H1160V508.2H1161V512.5H1162V512.2H1163V478.5H1164V493H1165V499H1166V499.8H1167V499.5H1168V513H1169V513.2H1170V505.2H1171V504.2H1172V455.5H1173V509H1174V509.8H1175V514H1176V514.5H1177V515H1178V515.2H1179V504.2H1180V497H1181V497.8H1182V507H1183V508H1184V508.5H1185V508.8H1186V507.2H1187V506.5H1188V507H1189V508H1190V509.5H1191V509.2H1192V516.5H1193V515.2H1194V514.5H1195V508.2H1196V503.2H1197V502.5H1198V502.8H1199V502.5H1200V502.8H1201V502.2H1202V501.5H1203V501.2H1204V519.5H1205V519.2H1206V518.5H1207V518.2H1208V502H1209V508H1210V500.2H1211V494.2H1212V493.5H1213V493.8H1214V495.8H1215V491.5H1216V507.8H1217V507.5H1218V461.5H1219V499.5H1220H1221V500H1222V510.5H1223H1224V510.8H1225V510.2H1226V500.8H1227V500.5H1228H1229V511.8H1230V509H1231V500.5H1232V501H1233V504H1234V504.5H1235V499.5H1236H1237V486.5H1238V491H1239V498H1240V498.2H1241V497.5H1242V478.8H1243V508.8H1244V508.5H1245V502.8H1246V502.5H1247V503H1248V503.5H1249V510.8H1250V510.5H1251V504.2H1252V493H1253V493.5H1254V493.8H1255V501.8H1256V508.5H1257V508.2H1258V503H1259V495.2H1260V479.5H1261V489.8H1262V493.8H1263V493.5H1264V469.5H1265V515.8H1266V504.2H1267V500.2H1268V477.5H1269V494H1270V504.8H1271V504.5H1272H1273V524.5H1274V524.8H1275V521.2H1276V497H1277V502H1278V507H1279V507.8H1280V512H1281V513.5H1282V513.2H1283V500.5H1284V511.5H1285V511.8H1286V505H1287V505.5H1288V506H1289V506.8H1290V506.5H1291V511H1292V511.8H1293V499H1294V499.8H1295V509.8H1296V505.5H1297V510H1298V469.5H1299V512.2H1300V494.5H1301V509.5H1302V510H1303V514H1304V532.2H1303V550.2H1302V563.8H1301V563.5H1300V563.8H1299V510H1298V551.8H1297V561.2H1296V574H1295V573.8H1294V563.8H1293V564.2H1292V576H1291V581.2H1290V581.8H1289V581H1288V568H1287V565.8H1286V566.2H1285V573.8H1284V577.8H1283V578.2H1282V578.8H1281V567H1280V565.8H1279V572.8H1278V573.2H1277V581.8H1276V568H1275V565.5H1274V565.8H1273V569.8H1272V570.2H1271V574.5H1270V558.8H1269V550H1268V549.8H1267V577.8H1266H1265V561H1264V561.2H1263V565.8H1262H1261V565.5H1260V565.8H1259V573.8H1258V584.8H1257V577H1256V576.5H1255V566H1254V565.8H1253V545.5H1252V554.2H1251V571.8H1250V588.8H1249V576H1248V566.8H1247V562.8H1246V562H1245V567.8H1244V569.2H1243V569.8H1242V562H1241V561.5H1240V561.8H1239V564.2H1238V566.2H1237V577.8H1236V561H1235V560.8H1234V580.8H1233V576H1232V563.8H1231V552.5H1230V558.8H1229V559.2H1228V559.8H1227V581.2H1226V581.8H1225V563.8H1224V560H1223V560.2H1222V568H1221V548.8H1220V537.8H1219V537.5H1218V565.8H1217V565H1216V564.8H1215V567.2H1214V567.8H1213V567H1212V566.8H1211V571.8H1210V577.8H1209V577.5H1208V564.8H1207V565.2H1206V568.2H1205V577.8H1204V573.8H1203H1202H1201V573.5H1200V568H1199V568.2H1198V568.8H1197V555H1196V554.8H1195V574.2H1194V583.8H1193V574H1192V573.8H1191V568.5H1190V568.8H1189V577.8H1188V577.5H1187V579.2H1186V564.5H1185V561.5H1184V562.2H1183V567.8H1182V567H1181V570.2H1180V572.2H1179V581.2H1178V584.2H1177V584.8H1176V571H1175V564H1174V562H1173V561.5H1172V565.2H1171V572.2H1170V572.8H1169V572H1168V569.5H1167V572.2H1166V572.8H1165H1164V569H1163V567.8H1162V560.8H1161V561.2H1160V561.8H1159V578.2H1158V582.8H1157V583.2H1156V583.8H1155V580H1154V577.8H1153V577H1152V567H1151V553H1150V564.2H1149V556.8H1148V557.2H1147V574.2H1146V582.8H1145V582H1144V571H1143V570.8H1142V575H1141V536H1140V534H1139V574.2H1138V579.2H1137V579.8H1136V579H1135V568H1134V567.8H1133V569.2H1132V573.8H1131V573.5H1130V585.8H1129V579H1128V570H1127V568.8H1126V568.5H1125V578H1124V577.5H1123V577.8H1122V577H1121V577.2H1120V569H1119V568.8H1118V568H1117V568.2H1116V572.2H1115V574.2H1114V577.2H1113V577.8H1112V577H1111V557.8H1110V558.2H1109V575.8H1108V572H1107V570.8H1106V570H1105V568.5H1104V568.8H1103H1102V568H1101V568.2H1100V573.2H1099V573.8H1098V580.8H1097V580H1096V571H1095V568H1094V550.5H1093V550.8H1092V553.2H1091V567.5H1090V583.2H1089V583.8H1088V583H1087V563.8H1086H1085V563H1084V562H1083V554.8H1082V571.5H1081V571.8H1080V572.2H1079V566.5H1078V567.2H1077V567.8H1076V567.5H1075V578.5H1074V575.5H1073V582.8H1072V582H1071V538.2H1070V562.8H1069V562H1068V561.8H1067V574.8H1066V582.2H1065V574.8H1064V575.2H1063V565.5H1062V558H1061V557.8H1060V557.5H1059V553.5H1058V553.8H1057V568.8H1056V576H1055V572H1054V571.2H1053V559.8H1052H1051V567.2H1050V572.8H1049V557.8H1048V506.5H1047V569.8H1046V569.5H1045V573.2H1044V577.8H1043V577.5H1042V587.2H1041V587.8H1040V587H1039V567H1038V563.8H1037V563.5H1036V564.2H1035V570.8H1034V575.2H1033V575.8H1032V575H1031V574.5H1030V563.5H1029V563.8H1028V572.8H1027V567.8H1026V568.2H1025V572.2H1024V572.8H1023V572H1022V571H1021V570.8H1020V570H1019V565.8H1018V571.2H1017V581.8H1016V566H1015V559H1014V549.8H1013V563.8H1012V563.5H1011V563.8H1010V573.2H1009V573.8H1008V573H1007V573.2H1006V560H1005V560.2H1004V494.8H1003V549.2H1002V569.2H1001V572.2H1000V572.8H999V566.8H998V566H997V564H996V562.8H995V562.5H994V563.2H993V563.8H992V563.5H991V556.8H990V557.2H989V568.8H988V557.5H987V577.8H986V582H985V580.8H984V581.2H983V581.8H982V568H981V555H980V555.2H979V566.8H978V573.2H977V584H976V583.8H975V574H974V571.5H973V571.8H972V577H971V564H970V563.8H969V531.5H968V563.2H967V574.2H966V574.8H965H964V549H963V574H962V573.5H961V581.8H960V582.2H959V578H958V553H957V553.2H956V553.8H955V568.2H954V574.8H953V592.2H952V592.8H951V573H950V569H949V567.8H948V567H947V566.8H946V568.2H945V577.2H944V577.8H943V571H942V570.8H941V566.8H940V566.5H939V566.8H938V569.2H937V577.2H936V589.8H935V560H934V560.2H933V560.8H932V570H931V568.8H930V569.2H929V572.2H928V572.8H927V572H926V571.8H925V566H924V564.8H923V569.2H922V578.2H921V580.2H920V580.8H919V590H918V573H917V571H916V569.8H915V570.2H914V574.8H913V570H912V567H911V563.2H910V564.2H909V568.2H908V568.8H907H906V582.2H905V583.2H904V583.8H903V580H902V568H901V559H900V539.5H899V570.2H898V573.2H897V579.8H896V579H895V575H894V574.8H893V576.2H892V576.8H891V576H890V564H889V563.5H888V571.8H887V575.8H886V575H885V574.5H884V574.8H883V576.2H882V571.8H881V572.2H880V590.8H879V572H878V565.8H877V569.8H876V570.2H875V566H874V565.5H873V583.8H872H871V583H870V562H869V572H868V569.8H867H866V572.2H865V575.2H864V583.8H863V580H862V570.8H861V570.5H860V572.2H859V575.2H858V575.8H857V564H856V563.8H855V563.5H854V564.2H853V564.8H852V561H851V561.2H850V571.5H849V568.8H848V569.2H847V569.8H846H845V558H844V557.5H843V552.5H842V567.2H841V568.2H840V563.5H839V575H838V566.8H837V566H836V565.5H835V565.8H834V565H833V563.8H832V559.5H831V564.8H830V570.2H829V562.8H828H827V562H826V562.2H825V586.2H824V586.8H823V571.5H822V554.8H821V555.2H820V560.8H819V567.2H818V567.8H817V574.8H816V574.5H815V574.8H814V558.8H813V559.2H812V565H811V553H810V543.8H809V563.8H808V573.8H807V573H806V569.8H805V573.2H804V573.8H803V565H802V533.8H801V569.5H800V579H799V569H798V566.8H797V567.2H796V570.2H795V570.8H794V567H793V566.8H792V572.8H791V578.2H790V572.8H789V548.8H788V548.5H787V550.2H786V562.8H785V582.2H784V587.8H783V587H782V569.8H781V564.8H780V551.5H779V560.8H778V570.8H777H776V561H775V554.5H774V560.8H773H772V567H771V565H770V564.8H769V580.8H768V582.2H767V582.8H766V568H765V561H764V541H763V533.2H762V562.8H761V562.5H760V586.2H759V580.8H758V573H757V567H756V567.2H755V571.5H754V564H753V563.8H752V571.8H751V571.5H750V576H749V574.8H748V574H747V573H746V572.2H745V579.2H744V580.2H743V580.8H742V580H741V572.5H740V572.8H739H738V572H737V571.5H736V577.8H735V577H734V569H733V547.8H732V547.5H731V547.8H730V558.2H729V559.2H728V565.2H727V565.8H726V555H725V555.2H724V555.8H723V555H722V554.5H721V558.8H720V554H719V551.5H718V551.8H717V561.2H716V564.2H715V564.8H714V553.5H713V554.2H712V565H711V564H710V561.8H709V557.5H708V551H707V548H706V545.5H705V554.2H704V560.2H703V560.8H702V555H701V554.5H700V554.8H699V556.2H698V560.8H697V551H696V548.8H695V551.2H694V553.2H693V558.2H692V562H691V559.8H690V541H689V564.8H688V560H687V559.8H686V562.2H685V555.8H684V556.2H683V556.8H682V556H681V554.8H680V555.2H679V556.2H678V556.8H677V556H676V555H675V554.8H674V554H673V542.5H672V549.8H671V552.2H670V557.8H669V557H668V560.2H667V560.8H666V563.2H665V557H664V547.8H663H662V543.5H661V543.8H660V554.5H659V560.2H658V564.5H657V556.8H656V557.2H655V557.8H654V550.8H653V557H652V554.8H651V534H650V544H649V544.2H648V564.2H647V564.8H646V541.5H645V560.8H644V553H643V550.8H642V545H641V545.2H640V551H639V545.5H638V557.8H637V557.5H636V554H635V552H634V549.8H633V549.5H632V559H631V557.8H630V543.2H629V528.5H628V528.8H627V547.2H626V553.8H625V553H624V550H623V549.8H622V551.2H621V555H620V547.8H619V548.2H618V540H617V539.8H616V539.5H615V541.2H614V545.8H613V550H612V549H611V549.2H610V540.8H609V541.2H608V542.2H607V551H606V550H605V539H604V539.2H603V553.8H602V557.8H601V553.5H600V553.8H599V548.8H598H597V548.5H596V548.8H595V550.2H594V537H593V537.2H592V538.2H591V538.8H590V552H589V551.5H588V551.8H587V551H586V550.8H585V554.2H584V558.8H583V554H582V557.5H581V557.8H580V554H579V553.8H578V550H577V549.8H576V560.8H575V554.5H574V561.8H573V561H572V539H571V538.8H570V531.5H569V557.2H568V567.8H567V552H566V540.8H565V541.2H564V557H563V554.5H562V546H561V545.8H560V545H559V544.2H558V547.5H557V547.8H556V560.2H555V561.2H554V561.8H553V557H552V554H551V554.2H550V550H549V539.8H548V540.2H547V540.8H546V540.5H545V556.2H544V556.8H543V558.2H542V547H541V551.8H540V552.2H539V562.2H538V543H537V540.5H536V548.2H535V555.2H534V548.8H533V548.5H532V556.2H531V556.8H530V556.5H529V557.2H528V568.8H527V568H526V554.5H525V555.2H524V555.8H523V563.2H522V567H521V560H520V559.2H519V562.2H518V562.8H517V562H516V554.8H515V554H514V553.5H513V554.2H512V554.8H511V556.2H510V556.8H509V553H508V552.2H507V553.2H506V570H505V565H504V556.8H503V552H502V551.8H501V560.8H500V562.2H499V566.8H498V562H497V556.5H496V557.2H495V557.8H494V566.2H493V566.8H492V548.8H491V548H490V546.8H489V547.2H488V563.8H487V563H486V561.5H485V561.8H484V552H483V549H482V542H481V520H480V519.8H479V551.2H478V558.8H477V558H476V557.8H475V553H474V550H473V550.2H472V551.2H471V560H470V553.8H469V545.8H468V545.5H467V549.2H466V550.2H465V550.8H464V550H463V547.8H462V550.2H461V554.8H460V545H459V544.5H458V557.8H457V557H456V550.5H455V550.8H454H453V550.5H452V556.2H451V541.5H450V556.5H449V548H448V547.8H447V547H446V546.5H445V547.2H444V547.8H443V548.2H442V548.8H441V549.2H440V539.5H439V553H438V550H437V549.8H436V536H435V535.8H434V539.2H433V540.2H432V559.8H431V565H430V556H429V554.8H428H427H426V549H425V548.5H424V558H423V557H422V545.8H421V555H420V554.8H419V554H418V553.5H417V559.2H416V565H415V564H414V550.8H413V546.5H412V546.8H411V555H410V554.8H409V556.2H408V560.8H407V552.2H406V553.2H405V554.2H404V557.2H403V557.8H402V550H401V543H400V549.5H399V550.2H398V546H397V545.8H396V552.2H395V552.8H394V553.2H393V555.2H392V533.2H391V543.5H390V550.8H389V543.5H388V537.8H387V538.2H386V550H385V549.8H384V557H383V549.8H382V549H381V548.8H380V549.2H379V549.8H378V534.5H377V544H376V543.5H375V560H374V548.8H373H372V548.5H371V554.2H370V554.8H369V555.2H368V555.8H367V543.5H366V556.2H365V556.8H364V559.2H363V559.8H362V562.2H361V566.2H360V566.8H359V560.5H358V560.8H357V561.2H356V554.8H355V547H354V546.8H353V558.8H352V551.5H351V555.8H350H349H348H347V555H346V550H345V545.8H344H343V547.2H342V547.8H341V555.2H340V558.2H339V563H338V562H337V559.8H336V551H335V551.2H334V557H333V556H332V550.5H331V550.8H330V552.2H329V547.5H328V547.8H327V556.8H326V560.8H325V556.8H324V557.2H323V561.8H322V553H321V552.2H320V553.2H319V555.2H318V555.8H317V549.8H316V553.5H315V553.8H314V553.5H313V555.2H312V555.8H311V552H310V542.5H309V550H308V548.8H307V549.2H306V555.2H305V559.8H304V559H303V558.8H302V558H301V557.5H300V557.8H299V550.8H298V551.2H297V551.8H296V559.2H295V559.8H294V561.2H293V563.2H292V564.2H291V566.2H290V567.2H289V547.2H288V554H287V553H286V552.8H285V561.2H284V561.8H283V561H282V560H281V559.8H280V555H279V554.2H278V555.2H277V555.8H276V555.5H275V556.2H274V546.5H273V550.8H272V546.5H271V547.2H270V553.8H269V562.8H268V565.2H267V565.8H266V565.5H265V559.8H264V559H263V559.2H262V559.8H261V567H260V559.8H259H258V559.5H257V559.8H256V559H255V559.2H254V550.8H253V540.8H252V541.2H251V551.8H250V551H249V550.8H248V561H247V559H246V556.8H245V556H244V554.8H243V554H242V547.8H241H240V549.2H239V552.2H238V562H237V559.8H236V559H235V553.5H234V553.8H233V555.2H232V546H231V545.8H230V545H229V544.8H228V549.5H227V557.2H226V557.8H225V547H224V546.5H223V547.2H222V551H221V551.2H220V551.8H219V547.8H218V543.2H217V548.2H216V551.2H215V551.8H214V551H213V550H212V548.8H211V549.2H210V549.8H209V549.5H208V549.8H207V549.5H206V551.2H205V551.8H204H203V557H202V549H201V548.8H200V550.2H199V552.2H198V563H197V562.8H196V553H195V546H194V545.8H193V556.8H192V556H191V554.5H190V554.8H189V554H188V553.8H187V553H186V552.5H185V538H184V537.5H183V541.8H182V564.8H181V560H180V558.8H179V547H178V558.2H177V558.8H176V554.8H175V543H174V541.8H173V536H172V536.2H171V536.8H170V548.5H169V554.5H168V555.2H167V555.8H166V555H165V552H164V542H163V541.8H162V524H161Z"/>
<path class="dk" d="M164.5 484.5h0m0 1h0m0 1h0m-2 3h0m1 2h0m0 1h0m-1 1h0m0 3h0m0 2h0m0 1h0m1 3h0m0 1h0m-1 1h0m0 1h0m0 3h0m0 1h0m0 2h0m0 2h0m0 1h0m0 1h0m0 1h0m0 1h0m0 1h0m0 1h0m0 1h0m0 2h0m1 2h0m-1 1h0m0 1h0m1 1h0m-1 2h0m1 1h0m0 1h0m-1 2h0m0 1h0m1 1h0m-1 2h0m0 1h0m0 1h0m2 1h0m-1 4h0m1 2h0m-1 1h0m-1 3h0m0 3h0m0 7h0m4-95h0m0 3h0m-1 11h0m1 0h0m1 3h0m-1 1h0m0 2h0m1 1h0m1 0h0m-1 1h0m-1 1h0m4 1h0m0 45h0m-1 4h0m0 1h0m1 0h0m-2 1h0m1 2h0m0 1h0m0 2h0m1 0h0m0 1h0m-5 4h0m3 0h0m-1 2h0m2 0h0m-3 1h0m4 2h0m-1 4h0m1 4h0m-2 5h0m6-109h0m-2 1h0m0 3h0m-1 0h0m1 1h0m-1 3h0m0 1h0m1 1h0m-1 1h0m4 1h0m-4 1h0m1 1h0m-1 0h0m0 1h0m3 1h0m-3 0h0m3 1h0m2 1h0m-4 0h0m0 1h0m0 1h0m0 1h0m-1 2h0m2 0h0m1 0h0m-3 2h0m5 0h0m-2 0h0m0 1h0m1 0h0m-1 1h0m1 0h0m0 2h0m0 1h0m-1 4h0m0 43h0m-1 3h0m2 2h0m0 3h0m-2 1h0m0 2h0m3 1h0m-3 1h0m1 1h0m1 1h0m-2 1h0m0 1h0m3 3h0m-3 2h0m9-94h0m0 4h0m0 4h0m0 2h0m0 2h0m0 2h0m0 1h0m-2 0h0m-3 2h0m1 1h0m4 0h0m0 3h0m-3 1h0m-2 0h0m4 2h0m-4 1h0m1 0h0m4 1h0m-3 0h0m1 1h0m-2 0h0m2 2h0m1 1h0m-4 0h0m0 2h0m5 1h0m-1 42h0m1 0h0m-2 3h0m0 1h0m-1 2h0m2 1h0m1 1h0m-2 1h0m1 0h0m-1 1h0m-2 2h0m2 1h0m0 1h0m-3 1h0m2 2h0m2 1h0m0 1h0m0 4h0m2-102h0m0 1h0m0 4h0m0 3h0m0 2h0m0 2h0m0 1h0m3 1h0m-3 0h0m5 0h0m-1 2h0m-4 0h0m5 2h0m-5 2h0m0 3h0m0 1h0m2 3h0m2 4h0m-2 48h0m-1 1h0m1 1h0m-1 2h0m0 1h0m2 1h0m-1 0h0m-1 0h0m-1 0h0m3 3h0m-2 0h0m0 2h0m3 1h0m1 5h0m0 1h0m-3 4h0m3 1h0m-1 1h0m7-96h0m-3 0h0m1 1h0m2 1h0m-4 0h0m1 0h0m-1 4h0m4 1h0m0 3h0m-5 2h0m5 2h0m-2 3h0m2 1h0m-3 1h0m3 1h0m-3 58h0m2 3h0m0 1h0m1 1h0m-2 1h0m-3 1h0m4 2h0m-1 0h0m-3 4h0m1 2h0m2 6h0m6-102h0m0 2h0m0 2h0m-3 1h0m3 9h0m0 3h0m1 0h0m-2 1h0m3 0h0m-3 2h0m1 1h0m-3 0h0m4 2h0m-4 57h0m3 4h0m-3 0h0m2 2h0m-1 1h0m0 3h0m-1 2h0m1 1h0m0 3h0m4 1h0m-2 0h0m0 4h0m8-104h0m0 1h0m0 4h0m0 2h0m0 1h0m-1 3h0m0 2h0m1 2h0m-4 0h0m4 1h0m0 2h0m0 1h0m-1 2h0m0 2h0m-1 65h0m-1 0h0m-2 3h0m2 3h0m2 1h0m-2 3h0m4-94h0m0 6h0m4 2h0m-4 1h0m5 4h0m-5 0h0m1 2h0m3 1h0m-3 3h0m1 3h0m-1 1h0m1 59h0m1 4h0m-2 2h0m0 2h0m0 1h0m4 5h0m5-101h0m0 2h0m0 1h0m0 2h0m0 1h0m-2 0h0m-1 0h0m4 1h0m-4 1h0m3 0h0m0 2h0m-2 0h0m2 4h0m1 1h0m-1 0h0m-1 1h0m1 1h0m-2 0h0m2 1h0m0 1h0m0 1h0m0 1h0m-2 1h0m2 1h0m-4 3h0m1 2h0m-1 2h0m2 54h0m0 1h0m3 0h0m-3 1h0m-2 2h0m1 1h0m0 5h0m-1 0h0m0 1h0m1 2h0m2 12h0m7-108h0m-1 7h0m2 1h0m-1 1h0m0 2h0m0 1h0m-1 7h0m-3 1h0m3 0h0m2 1h0m-3 63h0m2 4h0m-1 0h0m-3 0h0m4 1h0m-1 2h0m-2 1h0m1 11h0m3 2h0m-1 3h0m5-106h0m0 2h0m1 3h0m-1 1h0m1 2h0m-1 0h0m0 1h0m0 1h0m0 3h0m0 1h0m2 1h0m-2 2h0m-1 0h0m3 2h0m-3 0h0m0 1h0m0 1h0m-2 0h0m1 1h0m4 1h0m-2 1h0m-1 1h0m-2 0h0m5 55h0m-4 2h0m2 2h0m-3 1h0m0 2h0m1 2h0m1 2h0m-2 1h0m1 4h0m5-96h0m0 1h0m0 2h0m0 4h0m0 1h0m0 1h0m0 1h0m0 1h0m3 5h0m-3 1h0m3 2h0m-3 0h0m4 1h0m-4 1h0m5 2h0m-4 61h0m0 4h0m-1 2h0m5 0h0m0 2h0m0 2h0m3-96h0m0 1h0m1 1h0m0 3h0m-1 2h0m0 1h0m1 0h0m-1 1h0m1 1h0m-1 2h0m1 0h0m0 1h0m-1 1h0m0 2h0m3 0h0m-2 2h0m-1 0h0m1 1h0m0 1h0m-2 0h0m2 4h0m1 0h0m1 0h0m-2 4h0m2 2h0m-4 56h0m-1 2h0m0 1h0m5 0h0m-5 4h0m1 4h0m0 2h0m4 1h0m-1 3h0m6-96h0m1 13h0m0 1h0m-5 0h0m4 1h0m-2 1h0m1 0h0m1 0h0m0 3h0m-1 0h0m-1 4h0m2 1h0m-4 56h0m3 3h0m-3 1h0m5 2h0m-3 0h0m2 1h0m1 0h0m-1 2h0m-4 1h0m5 1h0m0 4h0m-4 2h0m7-104h0m0 2h0m0 3h0m0 1h0m0 1h0m0 4h0m0 1h0m0 1h0m1 1h0m2 3h0m-3 0h0m0 2h0m1 1h0m-1 0h0m3 0h0m-4 1h0m-1 1h0m1 2h0m1 0h0m2 2h0m-2 0h0m1 2h0m2 3h0m-3 0h0m3 48h0m-5 1h0m5 1h0m-5 1h0m4 1h0m-3 1h0m2 1h0m0 1h0m-2 0h0m3 1h0m-3 1h0m4 3h0m0 1h0m-2 0h0m1 1h0m0 3h0m1 4h0m0 2h0m-1 0h0m2-103h0m0 1h0m0 2h0m0 3h0m0 3h0m0 2h0m0 11h0m5 5h0m-5 1h0m5 1h0m-2 1h0m1 2h0m-4 1h0m5 1h0m-1 1h0m0 2h0m0 3h0m0 2h0m-3 55h0m4 4h0m2-101h0m1 2h0m-1 8h0m1 2h0m-1 1h0m0 2h0m1 3h0m-1 2h0m0 1h0m1 3h0m0 1h0m-2 1h0m4 2h0m-4 2h0m3 1h0m-3 3h0m3 1h0m-3 1h0m4 2h0m-4 1h0m0 1h0m4 1h0m-4 1h0m3 55h0m-3 0h0m5 2h0m0 2h0m0 2h0m-5 1h0m2 1h0m-2 0h0m1 3h0m9-105h0m0 11h0m-1 1h0m1 1h0m0 8h0m0 4h0m-2 0h0m2 1h0m-1 1h0m-3 0h0m4 1h0m-1 1h0m-1 0h0m2 1h0m-3 0h0m3 1h0m-4 2h0m5 0h0m-1 0h0m-3 1h0m1 0h0m2 1h0m-2 4h0m-1 45h0m4 1h0m-4 0h0m1 3h0m-2 3h0m5 1h0m-3 1h0m-2 1h0m1 3h0m3 1h0m-1 0h0m1 4h0m-3 2h0m0 2h0m10-106h0m-4 2h0m0 2h0m0 2h0m0 2h0m0 3h0m0 1h0m0 2h0m0 1h0m0 1h0m0 4h0m0 2h0m0 1h0m0 1h0m3 3h0m-1 1h0m-1 58h0m0 2h0m1 2h0m-3 0h0m0 1h0m5 6h0m-2 0h0m2 1h0m-1 1h0m-2 0h0m3 1h0m-3 0h0m0 1h0m4-101h0m0 2h0m0 9h0m5 0h0m-5 1h0m0 4h0m0 3h0m0 1h0m0 2h0m0 4h0m0 1h0m1 1h0m3 62h0m-3 3h0m4 0h0m-4 1h0m3 1h0m0 1h0m0 5h0m0 1h0m-3 0h0m4 4h0m1-105h0m1 9h0m-1 2h0m0 1h0m1 1h0m1 1h0m-2 0h0m0 3h0m0 2h0m1 1h0m-1 0h0m1 1h0m-1 0h0m0 2h0m0 1h0m0 1h0m1 0h0m3 1h0m-4 0h0m1 0h0m-1 1h0m0 2h0m3 1h0m-2 1h0m2 54h0m-1 2h0m1 1h0m1 3h0m-2 1h0m0 1h0m1 1h0m-2 0h0m2 1h0m2 3h0m-3 0h0m2 2h0m-1 1h0m-2 1h0m1 2h0m9-96h0m-1 7h0m-2 3h0m2 3h0m-4 2h0m0 1h0m0 3h0m5 58h0m-2 2h0m0 2h0m0 3h0m0 1h0m-2 2h0m-1 2h0m6-100h0m0 10h0m0 1h0m0 2h0m0 5h0m2 0h0m-2 2h0m0 2h0m5 2h0m-1 0h0m-3 0h0m4 1h0m-5 2h0m2 3h0m2 0h0m-1 2h0m-1 1h0m0 58h0m-1 2h0m1 1h0m3 1h0m-1 5h0m-4 2h0m2 1h0m9-104h0m-5 4h0m5 4h0m0 2h0m-5 0h0m2 4h0m-2 4h0m5 1h0m-5 1h0m0 1h0m1 0h0m3 0h0m1 0h0m-5 1h0m1 1h0m3 0h0m-4 0h0m0 2h0m5 0h0m0 1h0m0 1h0m-5 0h0m0 1h0m5 1h0m-5 1h0m5 1h0m-5 0h0m0 5h0m2 51h0m-1 4h0m1 0h0m1 0h0m-2 1h0m0 1h0m1 4h0m-1 0h0m-1 6h0m1 1h0m6-88h0m3 1h0m-1 5h0m-2 3h0m4 1h0m0 2h0m-2 0h0m2 2h0m-2 0h0m2 2h0m-2 1h0m0 1h0m1 1h0m-3 49h0m-1 1h0m0 1h0m1 1h0m-1 1h0m1 1h0m1 1h0m3 1h0m-3 2h0m1 4h0m-3 1h0m4 0h0m1 1h0m-5 0h0m2 1h0m-1 1h0m1 0h0m2 3h0m-1 0h0m-1 5h0m8-109h0m1 0h0m0 1h0m-1 1h0m0 1h0m0 1h0m0 2h0m1 0h0m-1 3h0m1 0h0m-1 3h0m1 1h0m-2 0h0m1 2h0m1 2h0m-1 2h0m0 1h0m1 0h0m-1 1h0m1 1h0m-3 0h0m2 1h0m-1 0h0m2 0h0m0 1h0m-1 1h0m1 0h0m0 1h0m-1 0h0m-3 0h0m3 2h0m0 1h0m-1 4h0m-3 0h0m1 4h0m2 53h0m0 1h0m-1 2h0m1 6h0m8-69h0m-3 3h0m0 1h0m-1 3h0m3 51h0m0 1h0m1 2h0m-4 0h0m4 2h0m0 1h0m-5 1h0m1 0h0m3 3h0m-3 1h0m4 6h0m-5 0h0m5 4h0m-1 1h0m6-109h0m0 5h0m-4 2h0m4 0h0m0 2h0m0 1h0m-1 0h0m1 1h0m0 2h0m-4 0h0m4 1h0m0 1h0m0 2h0m-1 0h0m1 1h0m-4 1h0m4 2h0m-4 0h0m0 1h0m0 3h0m0 3h0m0 4h0m0 2h0m0 2h0m3 51h0m-2 2h0m4 2h0m-3 9h0m-1 4h0m0 2h0m7-103h0m0 8h0m0 1h0m0 4h0m2 4h0m-2 3h0m3 0h0m-2 1h0m-1 2h0m3 0h0m-3 1h0m0 1h0m0 1h0m1 3h0m1 58h0m-3 3h0m-1 0h0m5 1h0m-4 0h0m4 1h0m-2 1h0m-3 2h0m5 1h0m-5 4h0m4 2h0m1 0h0m5-105h0m-1 2h0m1 0h0m-1 1h0m0 1h0m1 0h0m-1 3h0m1 2h0m-1 0h0m2 1h0m-2 1h0m0 1h0m0 1h0m0 1h0m1 1h0m0 1h0m0 1h0m-1 2h0m2 1h0m-2 0h0m0 1h0m2 1h0m-1 1h0m-1 0h0m1 1h0m-1 1h0m0 1h0m0 1h0m0 3h0m-2 2h0m4 3h0m-3 49h0m-1 4h0m3 2h0m-3 0h0m-1 2h0m2 6h0m-2 2h0m1 1h0m-1 4h0m5 1h0m2-95h0m-1 9h0m0 1h0m0 6h0m4 1h0m-1 1h0m2 0h0m-3 1h0m-1 1h0m3 0h0m1 4h0m-4 3h0m0 47h0m0 2h0m1 3h0m3 2h0m-3 0h0m1 5h0m1 2h0m-3 3h0m1 3h0m3 1h0m4-107h0m-1 7h0m1 1h0m0 2h0m0 1h0m-1 0h0m-2 1h0m3 0h0m-1 0h0m3 1h0m-2 1h0m-1 1h0m1 1h0m-1 4h0m1 1h0m-1 1h0m-2 4h0m2 1h0m3 1h0m-5 1h0m4 0h0m1 0h0m-3 1h0m-2 1h0m3 1h0m-1 0h0m3 1h0m-1 1h0m0 1h0m-1 2h0m1 1h0m-4 1h0m0 47h0m5 1h0m-4 2h0m3 0h0m1 1h0m-1 0h0m0 2h0m-2 1h0m-1 0h0m0 1h0m0 2h0m2 1h0m2 1h0m-1 1h0m-1 2h0m2 2h0m-1 0h0m-4 2h0m1 0h0m8-89h0m1 2h0m0 1h0m-4 2h0m4 2h0m-3 8h0m-1 1h0m0 1h0m3 1h0m-3 1h0m0 60h0m5 2h0m-2 3h0m-1 3h0m0 1h0m9-101h0m-3 1h0m0 1h0m0 4h0m0 1h0m0 2h0m0 2h0m0 1h0m-2 0h0m2 1h0m0 2h0m2 1h0m-2 0h0m0 1h0m0 1h0m-1 1h0m0 1h0m3 0h0m0 1h0m1 2h0m-3 1h0m3 0h0m-4 1h0m3 1h0m-2 0h0m1 2h0m2 1h0m-3 2h0m-1 1h0m0 48h0m3 2h0m1 1h0m-4 0h0m2 2h0m-2 1h0m2 0h0m1 2h0m0 2h0m-1 0h0m-2 1h0m4 4h0m-2 8h0m-3 2h0m9-97h0m-3 8h0m4 7h0m-3 1h0m1 1h0m1 2h0m-1 1h0m1 2h0m1 51h0m0 2h0m-4 2h0m3 3h0m-3 1h0m5 0h0m0 1h0m-1 1h0m0 2h0m-4 2h0m2 1h0m5-99h0m0 1h0m1 2h0m-1 0h0m1 2h0m-1 4h0m-1 0h0m1 2h0m0 1h0m0 1h0m1 0h0m0 2h0m3 1h0m-2 1h0m-2 0h0m1 1h0m-2 2h0m0 1h0m5 0h0m-1 1h0m-4 1h0m5 1h0m0 1h0m-1 1h0m0 2h0m-4 47h0m3 1h0m0 1h0m-1 0h0m-2 2h0m4 0h0m-4 1h0m4 0h0m-2 2h0m1 1h0m1 2h0m-4 1h0m3 1h0m-3 2h0m2 3h0m-2 0h0m0 2h0m2 1h0m-2 3h0m9-89h0m-1 2h0m3 2h0m-1 2h0m-3 2h0m1 4h0m-2 3h0m0 1h0m0 2h0m1 1h0m2 50h0m0 1h0m2 2h0m0 2h0m-2 1h0m2 0h0m-1 3h0m-3 0h0m4 1h0m-3 3h0m-1 2h0m0 1h0m3 1h0m-1 0h0m1 1h0m1 2h0m-1 7h0m3-105h0m0 1h0m0 6h0m-1 1h0m5 1h0m-4 0h0m3 1h0m-3 0h0m0 1h0m4 0h0m-1 2h0m0 1h0m-1 1h0m1 0h0m1 1h0m-1 1h0m-3 1h0m3 0h0m1 0h0m-3 1h0m3 1h0m-4 1h0m4 2h0m-1 0h0m1 1h0m0 1h0m-1 1h0m-1 0h0m2 1h0m-3 1h0m3 1h0m-4 1h0m0 2h0m2 2h0m1 41h0m-1 1h0m1 0h0m-1 1h0m1 1h0m-3 1h0m4 1h0m-4 0h0m1 1h0m3 0h0m0 2h0m-3 2h0m3 1h0m0 1h0m-3 0h0m-1 0h0m1 1h0m-2 2h0m5 1h0m-1 2h0m-2 1h0m1 1h0m3-84h0m4 6h0m-3 2h0m3 0h0m-1 4h0m-3 6h0m1 3h0m4 52h0m-5 0h0m1 1h0m1 3h0m2 0h0m-3 1h0m0 1h0m3 3h0m1 10h0m1-103h0m0 1h0m1 2h0m-1 3h0m1 0h0m0 4h0m-1 0h0m2 1h0m-2 0h0m2 2h0m-2 0h0m0 1h0m5 1h0m-5 1h0m1 2h0m1 3h0m0 60h0m1 3h0m-1 2h0m-1 0h0m2 1h0m-2 0h0m2 1h0m1 2h0m1 1h0m-3 1h0m2 0h0m-1 3h0m0 9h0m8-103h0m0 5h0m0 2h0m0 1h0m0 1h0m0 3h0m0 1h0m-5 1h0m5 1h0m-2 0h0m2 1h0m0 2h0m-5 3h0m4 67h0m1 0h0m-3 5h0m0 4h0m-2 2h0m11-98h0m-5 3h0m0 8h0m0 5h0m0 1h0m0 1h0m3 3h0m1 3h0m-2 2h0m1 3h0m1 1h0m-1 56h0m-1 0h0m1 4h0m-3 1h0m2 0h0m3 2h0m-1 0h0m0 2h0m-2 0h0m1 3h0m1 1h0m0 1h0m1 1h0m1-94h0m5 0h0m0 1h0m-1 2h0m1 3h0m0 1h0m-1 1h0m-3 4h0m2 2h0m-1 2h0m-1 0h0m-1 0h0m1 1h0m0 2h0m2 2h0m0 58h0m0 1h0m1 0h0m-2 3h0m2 1h0m3-89h0m0 1h0m0 5h0m0 1h0m0 1h0m1 0h0m0 2h0m1 4h0m-2 0h0m0 1h0m0 1h0m3 1h0m-4 1h0m1 0h0m-1 3h0m2 3h0m-2 58h0m3 1h0m-3 3h0m3 1h0m-1 0h0m0 1h0m-2 3h0m1 1h0m2 1h0m2 4h0m0 1h0m-5 1h0m10-102h0m0 1h0m-1 3h0m0 5h0m1 1h0m0 1h0m-2 1h0m1 0h0m1 1h0m-1 1h0m1 0h0m0 3h0m1 2h0m-4 2h0m3 0h0m-4 4h0m3 51h0m-1 1h0m3 3h0m0 1h0m-2 0h0m-1 1h0m3 1h0m-4 1h0m1 3h0m1 1h0m2 0h0m0 1h0m-2 0h0m-1 1h0m1 0h0m2 0h0m-4 3h0m4 2h0m-4 1h0m1 0h0m3 2h0m-5 0h0m1 2h0m1 2h0m9-102h0m0 7h0m0 2h0m-1 1h0m0 1h0m-3 1h0m4 3h0m0 4h0m0 1h0m0 2h0m-3 1h0m2 3h0m-1 0h0m-1 1h0m3 0h0m0 2h0m0 2h0m-4 45h0m1 1h0m-1 1h0m-1 2h0m0 1h0m4 0h0m-3 1h0m2 0h0m1 0h0m0 2h0m-2 0h0m2 2h0m-4 0h0m3 1h0m1 3h0m1 1h0m-5 2h0m1 1h0m-1 2h0m2 1h0m1 0h0m-2 2h0m-1 0h0m9-100h0m1 2h0m-1 2h0m0 1h0m1 3h0m-1 1h0m0 2h0m0 5h0m1 0h0m0 2h0m-1 1h0m0 1h0m0 2h0m0 1h0m-2 1h0m0 1h0m-1 1h0m2 1h0m-1 2h0m2 2h0m0 1h0m-3 48h0m2 5h0m-2 1h0m5 3h0m-4 3h0m1 0h0m-2 2h0m5 0h0m-5 4h0m7-92h0m0 10h0m2 3h0m-1 4h0m3 4h0m0 5h0m-3 51h0m-2 2h0m3 0h0m-1 1h0m2 1h0m-4 3h0m1 0h0m2 0h0m0 1h0m-2 1h0m0 2h0m2 0h0m2 5h0m-4 3h0m-1 4h0m9-102h0m0 1h0m0 2h0m0 1h0m-1 3h0m1 0h0m0 1h0m-1 1h0m3 2h0m-2 1h0m-1 0h0m0 1h0m-1 0h0m2 2h0m-1 0h0m1 1h0m0 1h0m0 1h0m0 1h0m0 1h0m-2 0h0m1 1h0m3 2h0m-1 1h0m-2 1h0m-1 0h0m-1 0h0m1 1h0m1 0h0m1 1h0m-1 0h0m-1 0h0m1 4h0m2 51h0m0 1h0m1 2h0m-1 2h0m0 1h0m0 2h0m0 1h0m1 0h0m-1 5h0m-2 4h0m-2 4h0m0 1h0m2 1h0m9-110h0m0 2h0m0 2h0m-1 1h0m1 1h0m0 1h0m0 5h0m-3 2h0m3 0h0m0 2h0m0 3h0m0 1h0m0 1h0m-1 2h0m-1 1h0m2 2h0m-1 1h0m1 1h0m0 2h0m-4 1h0m4 0h0m0 4h0m-5 0h0m2 50h0m-2 2h0m1 1h0m4 0h0m-5 1h0m0 1h0m1 2h0m2 4h0m1 3h0m1 0h0m-2 3h0m6-97h0m-1 3h0m-2 2h0m2 1h0m1 3h0m0 4h0m0 4h0m0 3h0m-3 9h0m0 51h0m5 1h0m-5 1h0m4 2h0m1 0h0m-1 2h0m-4 1h0m5 3h0m-1 2h0m0 6h0m-4 0h0m2 2h0m5-106h0m0 3h0m0 3h0m0 5h0m0 2h0m-1 4h0m1 6h0m4 2h0m-3 1h0m0 1h0m0 1h0m3 0h0m-4 2h0m2 59h0m1 3h0m1 1h0m-5 1h0m5 0h0m0 2h0m-3 2h0m-2 1h0m5 7h0m-3 4h0m7-108h0m-2 2h0m3 3h0m-1 1h0m-1 1h0m0 3h0m1 1h0m-2 2h0m1 3h0m1 1h0m0 2h0m-1 2h0m1 2h0m0 1h0m-2 1h0m0 1h0m4 1h0m-4 1h0m3 29h0m-4 2h0m5 1h0m-1 0h0m-3 0h0m2 2h0m-2 0h0m2 1h0m-1 2h0m0 2h0m-1 1h0m2 1h0m1 1h0m-3 1h0m3 2h0m-1 0h0m-1 0h0m-2 1h0m4 1h0m-4 1h0m4 0h0m0 1h0m0 1h0m-3 0h0m2 0h0m-3 1h0m5 0h0m-5 1h0m0 1h0m5 1h0m-5 1h0m5 0h0m-2 0h0m2 1h0m-3 1h0m2 0h0m-3 1h0m-1 1h0m0 1h0m4 4h0m0 3h0m-1 0h0m-3 0h0m5 1h0m0 1h0m-1 0h0m0 6h0m-3 1h0m10-87h0m0 1h0m-2 5h0m-2 0h0m2 1h0m2 0h0m0 1h0m-1 1h0m-3 2h0m4 2h0m-4 0h0m3 1h0m1 2h0m-4 0h0m4 1h0m-4 1h0m4 0h0m-4 3h0m3 0h0m-2 1h0m1 1h0m-3 1h0m4 2h0m0 41h0m-4 2h0m1 2h0m3 0h0m-3 1h0m2 0h0m1 0h0m-1 2h0m-2 1h0m0 1h0m3 2h0m-4 0h0m3 2h0m-2 1h0m3 2h0m-1 9h0m4-107h0m0 5h0m0 3h0m0 2h0m0 2h0m0 1h0m0 2h0m0 1h0m-1 0h0m5 8h0m-4 1h0m0 2h0m0 1h0m1 2h0m0 53h0m2 2h0m-4 2h0m3 1h0m-3 1h0m2 1h0m-2 1h0m0 1h0m3 0h0m2 0h0m-5 1h0m3 2h0m2 3h0m-1 0h0m-1 3h0m4-105h0m0 9h0m0 1h0m0 1h0m0 2h0m0 2h0m0 4h0m0 7h0m0 1h0m3 3h0m-3 2h0m0 1h0m1 2h0m3 59h0m0 3h0m-3 2h0m1 1h0m0 1h0m0 4h0m2 0h0m-4 4h0m5-109h0m0 2h0m1 1h0m-1 3h0m0 4h0m3 3h0m0 2h0m-3 0h0m3 1h0m-2 2h0m-1 3h0m3 2h0m-2 1h0m3 1h0m-4 3h0m0 1h0m3 0h0m-3 2h0m0 1h0m1 0h0m4 1h0m-1 1h0m-1 2h0m1 2h0m0 54h0m-2 2h0m0 1h0m2 1h0m-1 3h0m-2 1h0m4 0h0m-3 1h0m2 1h0m-2 0h0m2 2h0m0 3h0m1 2h0m6-105h0m0 9h0m0 1h0m0 1h0m0 1h0m0 2h0m0 4h0m0 1h0m0 1h0m0 1h0m-1 2h0m-1 0h0m2 2h0m-3 2h0m-2 2h0m5 1h0m-1 1h0m-1 2h0m0 1h0m1 55h0m-2 2h0m2 4h0m-1 0h0m-1 1h0m0 3h0m-1 3h0m2 3h0m1 0h0m2-104h0m0 2h0m0 6h0m0 4h0m0 2h0m5 0h0m-5 1h0m1 4h0m4 1h0m-4 1h0m3 1h0m-4 1h0m0 3h0m0 2h0m2 2h0m0 58h0m2 3h0m-2 2h0m2 1h0m0 2h0m-1 5h0m-1 1h0m1 3h0m8-102h0m-5 2h0m5 0h0m-1 3h0m1 3h0m-3 2h0m3 0h0m0 5h0m-1 1h0m-1 0h0m-1 0h0m3 3h0m-4 0h0m4 4h0m-1 0h0m-3 0h0m0 2h0m-1 0h0m0 4h0m4 57h0m-2 3h0m0 1h0m2 2h0m-2 2h0m-2 3h0m3 1h0m4-95h0m2 1h0m0 6h0m2 3h0m-2 1h0m-3 2h0m4 4h0m-1 1h0m-3 1h0m3 2h0m-1 3h0m3 3h0m0 57h0m-3 1h0m-1 1h0m0 2h0m4 1h0m-2 1h0m-1 1h0m3 1h0m-3 0h0m3 3h0m-5 0h0m2 1h0m9-105h0m0 3h0m-1 0h0m1 1h0m0 5h0m-1 0h0m1 2h0m-1 2h0m1 1h0m0 1h0m-1 1h0m1 1h0m0 2h0m0 2h0m-1 0h0m1 1h0m-4 1h0m0 1h0m4 1h0m-3 0h0m2 3h0m-2 1h0m-1 1h0m1 1h0m0 1h0m-2 0h0m4 3h0m-1 46h0m0 2h0m1 0h0m-1 2h0m-3 4h0m3 0h0m2 1h0m-5 1h0m3 0h0m-1 1h0m-1 5h0m3 0h0m-4 2h0m2 0h0m7-97h0m-3 12h0m1 6h0m-1 1h0m3 2h0m2 1h0m-3 3h0m-1 1h0m0 4h0m4 1h0m-4 47h0m1 4h0m-2 0h0m2 3h0m-2 1h0m0 1h0m5 0h0m0 1h0m-1 2h0m-4 0h0m0 2h0m3 0h0m1 1h0m-2 2h0m-2 2h0m10-100h0m0 4h0m0 1h0m-3 0h0m0 1h0m3 1h0m0 1h0m0 1h0m0 2h0m0 1h0m-3 0h0m0 1h0m3 3h0m-3 1h0m3 1h0m0 2h0m-3 1h0m0 3h0m0 1h0m-1 1h0m2 3h0m-2 2h0m3 47h0m-3 2h0m5 2h0m-5 0h0m3 1h0m2 0h0m-2 2h0m-1 0h0m3 0h0m-2 1h0m2 0h0m-5 1h0m0 1h0m2 1h0m1 1h0m0 1h0m-3 0h0m3 1h0m2 1h0m-4 0h0m-1 1h0m3 4h0m6-79h0m-3 4h0m2 0h0m0 1h0m-2 3h0m1 2h0m4 7h0m-4 44h0m-1 3h0m5 5h0m-4 0h0m2 4h0m-3 0h0m5 1h0m0 2h0m-1 0h0m-4 1h0m5 2h0m-2 1h0m-1 0h0m2 0h0m5-98h0m0 7h0m2 1h0m0 1h0m-2 0h0m2 2h0m-2 0h0m0 1h0m0 1h0m2 1h0m0 1h0m0 1h0m-4 0h0m4 1h0m-2 3h0m0 1h0m0 1h0m0 1h0m0 1h0m0 1h0m0 2h0m1 1h0m-1 0h0m-1 3h0m1 0h0m-3 0h0m4 4h0m1 47h0m-4 2h0m3 2h0m-4 3h0m2 1h0m3 0h0m0 2h0m-3 4h0m3 3h0m-3 1h0m-1 6h0m8-95h0m-3 7h0m0 2h0m0 3h0m2 2h0m2 4h0m-2 49h0m3 3h0m-3 1h0m3 0h0m-1 0h0m0 1h0m-2 0h0m1 1h0m2 1h0m-3 0h0m-1 1h0m4 0h0m-2 0h0m0 1h0m1 0h0m-4 0h0m5 1h0m-2 1h0m-1 1h0m0 1h0m1 3h0m2 2h0m-3 3h0m3 0h0m-1 3h0m-1 2h0m0 2h0m4-104h0m2 3h0m-1 0h0m-1 1h0m2 0h0m0 1h0m-2 1h0m1 0h0m0 1h0m1 0h0m-1 1h0m-1 3h0m1 1h0m0 1h0m1 0h0m-2 3h0m2 0h0m2 1h0m0 2h0m-2 0h0m-1 0h0m3 1h0m-2 0h0m0 1h0m1 0h0m-2 0h0m-1 1h0m2 0h0m-2 1h0m2 1h0m1 1h0m-2 0h0m-1 2h0m1 1h0m1 3h0m0 39h0m-2 0h0m-1 1h0m3 1h0m0 1h0m-2 1h0m0 3h0m3 1h0m-3 0h0m2 1h0m1 1h0m-3 0h0m3 2h0m-3 1h0m1 1h0m1 0h0m2 2h0m-2 0h0m1 1h0m-4 0h0m4 2h0m-4 1h0m5 1h0m-5 1h0m4 3h0m-2 4h0m-2 3h0m1 5h0m8-110h0m1 4h0m0 7h0m-1 3h0m1 2h0m-1 1h0m1 1h0m-2 1h0m1 1h0m1 1h0m0 2h0m-1 0h0m1 1h0m-1 2h0m-1 0h0m1 1h0m-2 1h0m4 1h0m0 3h0m-2 1h0m0 2h0m2 0h0m-1 1h0m-4 43h0m1 10h0m4 2h0m-5 1h0m2 0h0m-2 4h0m2 0h0m1 1h0m2 0h0m-3 1h0m-2 0h0m0 1h0m5 4h0m3-92h0m0 3h0m0 1h0m0 1h0m3 1h0m-3 2h0m0 1h0m3 1h0m-4 1h0m1 1h0m0 4h0m0 1h0m-1 2h0m-1 3h0m0 1h0m2 4h0m2 52h0m0 2h0m-3 3h0m3 1h0m-3 6h0m-1 3h0m1 2h0m5-102h0m0 4h0m0 1h0m4 6h0m-1 0h0m-3 1h0m4 1h0m-4 4h0m1 1h0m-1 3h0m0 2h0m5 2h0m0 46h0m-1 4h0m0 4h0m1 1h0m0 2h0m-3 2h0m2 0h0m1 1h0m0 4h0m-2 2h0m-3 2h0m1 2h0m4 3h0m-5 0h0m8-103h0m0 3h0m-1 2h0m1 6h0m-1 3h0m1 4h0m0 2h0m0 1h0m0 1h0m-1 1h0m3 1h0m-1 0h0m2 1h0m-4 0h0m0 1h0m4 1h0m-3 0h0m-1 0h0m3 1h0m-4 2h0m3 48h0m-1 2h0m-2 1h0m2 1h0m-2 1h0m3 0h0m-2 2h0m-1 1h0m4 0h0m-2 2h0m-2 3h0m3 1h0m-3 1h0m0 8h0m3 2h0m1 1h0m2-96h0m4 6h0m0 10h0m0 56h0m0 2h0m1 3h0m-1 1h0m-1 2h0m1 1h0m1 2h0m-3 0h0m2 4h0m-2 7h0m1 0h0m1 1h0m3-99h0m0 1h0m1 1h0m-2 2h0m1 1h0m0 1h0m0 1h0m3 0h0m1 2h0m0 2h0m-1 0h0m-4 2h0m5 0h0m-4 2h0m-1 2h0m5 1h0m-5 0h0m1 0h0m0 1h0m-1 1h0m1 1h0m4 0h0m-1 1h0m-4 0h0m5 1h0m-1 1h0m1 1h0m-2 1h0m-1 1h0m3 1h0m-3 48h0m1 0h0m-1 2h0m-2 0h0m1 1h0m2 1h0m-1 0h0m0 1h0m1 3h0m1 1h0m-4 2h0m4 2h0m-4 4h0m3 2h0m3-95h0m4 3h0m-4 3h0m0 2h0m0 3h0m0 3h0m0 2h0m4 1h0m-4 11h0m4 47h0m-3 3h0m1 1h0m-1 0h0m3 0h0m-4 2h0m3 2h0m-3 0h0m4 1h0m-3 3h0m-1 1h0m4 1h0m0 3h0m1 1h0m1-98h0m0 5h0m2 2h0m-2 3h0m1 2h0m-1 1h0m2 2h0m-2 0h0m0 1h0m5 1h0m-1 0h0m-2 0h0m-2 2h0m2 2h0m-1 2h0m1 2h0m3 3h0m-1 3h0m-1 51h0m-1 1h0m-1 1h0m2 1h0m-1 2h0m3 3h0m-1 2h0m-2 4h0m-1 0h0m2 4h0m2 1h0m0 2h0m-3 6h0m9-108h0m0 2h0m0 1h0m0 1h0m0 1h0m0 1h0m0 2h0m-2 4h0m2 1h0m-5 3h0m5 0h0m0 1h0m-3 2h0m1 3h0m-3 3h0m1 0h0m1 1h0m0 1h0m0 3h0m3 40h0m-1 10h0m0 5h0m-1 3h0m1 3h0m-4 2h0m3 3h0m-1 4h0m-1 2h0m5-101h0m0 5h0m1 2h0m-1 2h0m0 3h0m0 1h0m5 1h0m-5 0h0m4 2h0m-4 2h0m4 1h0m-4 0h0m0 1h0m0 1h0m1 1h0m4 1h0m-3 3h0m1 1h0m-1 42h0m1 1h0m-1 0h0m-1 0h0m0 2h0m0 1h0m-1 0h0m0 1h0m0 1h0m1 1h0m-1 0h0m2 2h0m-1 0h0m1 1h0m-2 2h0m0 2h0m1 1h0m3 1h0m0 1h0m-1 2h0m-3 1h0m4 2h0m1 1h0m0 1h0m-4 1h0m2 0h0m2 2h0m0 8h0m0 4h0m6-107h0m0 3h0m-4 2h0m-1 1h0m5 0h0m0 1h0m-1 5h0m0 2h0m0 2h0m0 1h0m-4 3h0m5 0h0m-1 1h0m-3 3h0m2 60h0m1 3h0m-2 1h0m1 0h0m0 1h0m0 1h0m1 3h0m-3 2h0m7-88h0m0 1h0m0 1h0m-2 0h0m2 4h0m0 2h0m0 1h0m0 4h0m0 1h0m0 1h0m1 1h0m2 4h0m-1 4h0m1 50h0m-2 3h0m2 0h0m-5 1h0m3 1h0m-2 0h0m4 1h0m-4 0h0m4 1h0m0 1h0m0 3h0m-4 0h0m2 1h0m2 3h0m5-98h0m0 3h0m0 1h0m1 1h0m-1 0h0m1 2h0m-1 1h0m1 3h0m-1 0h0m-2 1h0m2 1h0m0 2h0m-3 2h0m3 2h0m1 3h0m-2 1h0m1 0h0m1 3h0m-1 1h0m1 1h0m-2 0h0m1 1h0m-2 0h0m0 1h0m1 1h0m2 1h0m-1 0h0m-1 0h0m-2 2h0m4 1h0m-1 0h0m-3 1h0m4 0h0m-4 2h0m4 38h0m-2 2h0m0 1h0m-1 3h0m3 0h0m-5 3h0m2 1h0m-1 0h0m4 1h0m-3 0h0m1 1h0m0 2h0m-2 2h0m-1 1h0m1 0h0m0 3h0m-1 2h0m1 1h0m2 1h0m-2 2h0m-1 8h0m10-90h0m0 4h0m0 1h0m-4 1h0m2 4h0m-2 4h0m1 40h0m-1 2h0m1 1h0m-1 0h0m1 1h0m0 2h0m0 3h0m-1 0h0m0 2h0m0 4h0m3 3h0m-3 0h0m2 1h0m1 2h0m-1 0h0m3 5h0m-2 1h0m1 0h0m-4 1h0m4 1h0m-1 3h0m6-103h0m0 1h0m-1 1h0m2 0h0m-1 2h0m1 1h0m0 2h0m-4 2h0m4 1h0m-1 1h0m1 1h0m0 2h0m0 1h0m0 4h0m-1 2h0m-1 0h0m1 1h0m1 2h0m-1 1h0m-1 4h0m-1 52h0m4 1h0m-2 1h0m-1 2h0m1 1h0m2 3h0m-4 0h0m3 1h0m1 0h0m-4 3h0m-1 2h0m1 4h0m2 3h0m5-102h0m0 14h0m0 2h0m-1 1h0m0 4h0m1 0h0m0 1h0m0 1h0m1 2h0m-2 61h0m-1 1h0m1 1h0m-1 1h0m1 1h0m1 2h0m1 3h0m-2 1h0m0 2h0m4 3h0m-5 2h0m1 1h0m8-107h0m0 1h0m0 3h0m0 2h0m0 1h0m0 3h0m0 1h0m1 2h0m-1 1h0m0 3h0m1 1h0m-1 1h0m1 0h0m0 1h0m-1 0h0m1 2h0m-1 1h0m0 1h0m1 0h0m-1 1h0m1 1h0m-1 0h0m0 2h0m-2 55h0m0 1h0m3 0h0m-3 1h0m1 2h0m2 1h0m1 1h0m-5 1h0m5 1h0m0 1h0m-5 2h0m0 1h0m1 8h0m8-96h0m2 2h0m-2 13h0m2 1h0m-1 1h0m0 2h0m-1 1h0m-2 1h0m-1 4h0m1 0h0m4 1h0m-4 0h0m3 1h0m-3 3h0m1 57h0m1 5h0m-3 1h0m4 1h0m-3 2h0m0 3h0m2 2h0m0 2h0m3-105h0m0 2h0m0 3h0m4 0h0m-1 1h0m-1 3h0m0 1h0m0 5h0m-2 1h0m5 2h0m-3 1h0m1 3h0m-3 2h0m5 1h0m-5 0h0m1 64h0m4 1h0m-2 3h0m0 2h0m0 4h0m5-100h0m0 15h0m0 2h0m0 2h0m-1 1h0m1 0h0m0 1h0m1 4h0m-1 1h0m0 1h0m1 0h0m2 1h0m-3 1h0m1 49h0m-3 2h0m4 0h0m-3 0h0m-1 1h0m2 2h0m-1 1h0m1 2h0m3 1h0m-2 0h0m-3 2h0m4 0h0m-1 0h0m-2 3h0m3 0h0m-1 1h0m-2 1h0m4 2h0m-4 2h0m7-99h0m0 3h0m-1 2h0m1 1h0m0 2h0m-1 2h0m1 4h0m-1 0h0m0 1h0m4 5h0m-3 1h0m2 1h0m-2 0h0m-2 0h0m4 1h0m0 2h0m-3 1h0m0 1h0m-1 2h0m3 0h0m-2 2h0m-1 55h0m4 0h0m0 4h0m0 1h0m0 4h0m-4 3h0m5 1h0m-4 2h0m0 1h0m9-100h0m-4 11h0m2 8h0m-2 2h0m2 2h0m-1 3h0m0 4h0m3 52h0m1 4h0m-1 1h0m-1 1h0m2 3h0m-1 1h0m-3 0h0m-1 1h0m3 0h0m-3 1h0m2 4h0m2 7h0m2-110h0m1 1h0m-1 1h0m1 6h0m-1 2h0m1 2h0m-1 1h0m0 1h0m2 2h0m-2 2h0m1 0h0m-1 3h0m1 1h0m0 1h0m0 1h0m-1 1h0m1 1h0m-1 0h0m4 2h0m0 6h0m1 1h0m0 2h0m-1 2h0m-2 47h0m1 2h0m0 1h0m1 3h0m-2 3h0m-2 1h0m4 3h0m0 10h0m4-103h0m0 5h0m-2 10h0m2 0h0m0 3h0m-2 0h0m0 3h0m4 1h0m-2 1h0m-2 3h0m1 2h0m0 1h0m-1 1h0m2 3h0m0 1h0m2 52h0m-4 0h0m4 2h0m1 0h0m-4 2h0m4 0h0m-3 0h0m-1 1h0m1 1h0m2 1h0m-1 0h0m0 1h0m-3 0h0m0 2h0m3 0h0m-2 1h0m5-102h0m1 2h0m0 1h0m-1 0h0m0 1h0m1 0h0m0 3h0m3 2h0m-4 1h0m4 2h0m0 1h0m0 1h0m-4 0h0m0 2h0m4 1h0m-3 0h0m0 2h0m0 1h0m-1 2h0m1 0h0m0 1h0m-1 0h0m4 1h0m-3 0h0m3 1h0m-3 0h0m-1 0h0m4 1h0m-4 0h0m5 0h0m-5 1h0m4 0h0m-4 2h0m1 0h0m3 1h0m-1 0h0m-2 1h0m-1 4h0m1 1h0m1 1h0m1 54h0m0 4h0m2 4h0m-1 1h0m-1 3h0m2 1h0m-1 3h0m7-99h0m-3 6h0m3 5h0m-2 2h0m-2 5h0m4 0h0m-4 5h0m-1 2h0m1 3h0m4 51h0m-5 5h0m5 2h0m-1 0h0m1 1h0m-1 1h0m-1 3h0m-2 2h0m2 0h0m0 1h0m-2 2h0m5-105h0m3 4h0m0 2h0m-3 0h0m0 1h0m4 1h0m1 5h0m-5 2h0m0 1h0m0 1h0m0 1h0m0 1h0m0 3h0m0 3h0m4 1h0m-4 0h0m0 1h0m4 0h0m-4 2h0m3 1h0m-3 1h0m5 2h0m0 3h0m-1 2h0m0 2h0m0 3h0m1 44h0m-3 3h0m1 0h0m1 2h0m-3 0h0m0 1h0m4 1h0m-2 0h0m-2 1h0m1 1h0m2 1h0m-1 0h0m-1 4h0m1 2h0m1 3h0m1 1h0m0 5h0m0 1h0m6-116h0m0 2h0m0 5h0m-5 11h0m5 0h0m-4 4h0m0 1h0m4 1h0m-1 1h0m-4 0h0m0 2h0m0 2h0m5 2h0m0 1h0m-4 0h0m0 4h0m4 0h0m-4 1h0m4 1h0m-4 0h0m-1 0h0m5 1h0m-4 4h0m-1 0h0m3 1h0m-1 0h0m2 3h0m-4 65h0m3 1h0m-2 4h0m-1 1h0m2 11h0m1 2h0m3-120h0m0 13h0m0 1h0m0 5h0m0 1h0m0 2h0m0 1h0m0 2h0m4 1h0m1 2h0m-5 3h0m4 0h0m1 1h0m0 3h0m-2 0h0m-1 2h0m2 1h0m-4 2h0m0 2h0m4 1h0m-4 1h0m0 1h0m4 0h0m-4 1h0m3 0h0m-1 1h0m2 2h0m-4 0h0m4 1h0m-1 0h0m-3 2h0m2 51h0m-1 2h0m1 1h0m-1 1h0m0 1h0m1 1h0m-1 0h0m0 1h0m4 3h0m-3 1h0m0 7h0m8-131h0m1 0h0m-1 2h0m1 3h0m-1 3h0m1 3h0m0 2h0m0 2h0m-1 1h0m0 3h0m1 1h0m0 2h0m-1 0h0m1 1h0m-1 0h0m0 1h0m1 6h0m0 1h0m0 1h0m-1 0h0m1 1h0m-4 0h0m4 2h0m0 1h0m-3 1h0m2 2h0m0 2h0m1 0h0m0 3h0m-4 1h0m-1 1h0m4 1h0m1 1h0m-1 1h0m-3 1h0m4 4h0m0 2h0m-4 1h0m4 1h0m-2 0h0m-2 2h0m1 0h0m-1 2h0m4 2h0m-2 41h0m0 2h0m2 2h0m-1 2h0m-4 2h0m1 1h0m2 2h0m0 5h0m-3 0h0m4 0h0m-1 1h0m0 1h0m-1 0h0m5-90h0m0 2h0m-1 3h0m1 7h0m-1 1h0m0 2h0m2 1h0m-2 1h0m3 1h0m-3 4h0m0 5h0m5 45h0m-4 2h0m4 2h0m-5 0h0m5 1h0m-5 1h0m5 1h0m-2 0h0m2 1h0m-5 2h0m5 4h0m0 1h0m-4 1h0m4 5h0m0 13h0m5-138h0m0 3h0m0 1h0m0 6h0m0 1h0m0 1h0m-2 1h0m2 2h0m-2 0h0m3 1h0m0 1h0m-2 0h0m1 1h0m-1 0h0m1 1h0m-1 1h0m2 0h0m-1 1h0m-1 0h0m-1 1h0m1 3h0m2 0h0m-2 1h0m1 0h0m-2 1h0m1 1h0m1 1h0m-2 0h0m1 1h0m1 0h0m-1 1h0m2 0h0m-3 1h0m0 2h0m1 1h0m0 1h0m-1 0h0m0 1h0m0 2h0m2 0h0m1 1h0m-3 0h0m3 1h0m0 1h0m-3 0h0m-1 1h0m4 0h0m-2 2h0m0 2h0m-1 1h0m1 0h0m-1 2h0m1 0h0m0 1h0m0 1h0m2 3h0m-1 1h0m1 1h0m0 1h0m0 1h0m-2 2h0m-1 15h0m1 0h0m-1 1h0m0 1h0m1 0h0m0 1h0m-2 1h0m4 0h0m-3 3h0m-1 1h0m4 0h0m-4 1h0m4 1h0m-4 1h0m0 1h0m4 0h0m-4 1h0m4 0h0m-4 1h0m0 1h0m2 2h0m-1 1h0m0 1h0m0 1h0m3 0h0m-3 1h0m-1 1h0m4 1h0m-4 0h0m1 2h0m0 6h0m-2 0h0m0 1h0m0 2h0m0 1h0m0 4h0m1 4h0m2 2h0m-3 2h0m11-124h0m-1 2h0m0 8h0m1 1h0m-1 1h0m0 1h0m1 1h0m-1 0h0m0 2h0m0 1h0m0 1h0m0 1h0m1 4h0m0 1h0m-1 1h0m0 4h0m1 2h0m-1 1h0m1 3h0m-2 1h0m1 2h0m0 1h0m1 3h0m-2 0h0m1 2h0m-2 1h0m2 1h0m-1 1h0m1 1h0m-3 0h0m3 1h0m-3 0h0m-1 2h0m5 0h0m-2 3h0m-3 0h0m3 1h0m-3 1h0m4 1h0m0 1h0m-4 0h0m0 1h0m2 0h0m-2 1h0m2 0h0m1 1h0m-1 0h0m2 2h0m-4 2h0m0 18h0m0 7h0m0 1h0m0 1h0m0 3h0m0 3h0m0 3h0m1 2h0m-1 3h0m1 2h0m2 0h0m-1 2h0m3 1h0m-4 0h0m0 1h0m2 1h0m-1 0h0m0 2h0m3 0h0m-1 1h0m-3 1h0m0 2h0m2 1h0m-2 0h0m0 2h0m8-120h0m0 1h0m0 1h0m1 2h0m-1 3h0m1 4h0m-1 1h0m1 0h0m-1 1h0m1 2h0m0 3h0m-1 1h0m0 1h0m0 6h0m1 2h0m-1 1h0m-1 0h0m3 1h0m-3 1h0m1 2h0m0 1h0m1 0h0m0 1h0m-1 0h0m0 1h0m0 3h0m0 2h0m2 55h0m-4 0h0m1 0h0m0 2h0m3 1h0m0 3h0m-5 1h0m5 0h0m0 1h0m-4 1h0m1 0h0m3 3h0m-1 0h0m-3 1h0m-1 7h0m6-117h0m0 9h0m0 7h0m1 10h0m0 3h0m-1 1h0m1 1h0m0 4h0m2 4h0m0 2h0m-1 2h0m0 1h0m1 1h0m1 0h0m-3 2h0m4 1h0m-4 0h0m0 1h0m2 3h0m0 42h0m-1 1h0m-1 1h0m1 1h0m1 1h0m-2 1h0m3 1h0m0 3h0m-1 0h0m2 2h0m-5 0h0m5 3h0m-1 0h0m-4 0h0m0 1h0m5 3h0m-3 2h0m3 1h0m0 1h0m-3 4h0m3 2h0m4-124h0m0 2h0m-1 2h0m1 2h0m0 1h0m0 2h0m-1 2h0m0 3h0m1 1h0m0 1h0m0 1h0m0 6h0m-1 2h0m0 1h0m1 1h0m-1 0h0m0 1h0m3 0h0m-3 1h0m0 2h0m1 0h0m-2 2h0m2 1h0m0 2h0m2 1h0m-3 0h0m0 2h0m1 1h0m-2 1h0m2 1h0m0 2h0m1 0h0m0 1h0m-2 0h0m2 2h0m-3 0h0m3 1h0m-2 2h0m3 2h0m-3 2h0m0 37h0m3 3h0m-4 0h0m0 3h0m3 0h0m1 1h0m-3 1h0m2 1h0m1 0h0m0 2h0m-3 1h0m-1 4h0m3 0h0m1 1h0m-5 0h0m5 1h0m-5 0h0m1 4h0m4 0h0m-3 2h0m-1 4h0m-1 2h0m0 2h0m0 4h0m0 1h0m11-127h0m0 1h0m0 1h0m0 18h0m0 1h0m-1 0h0m0 3h0m1 0h0m-1 1h0m0 6h0m1 1h0m0 1h0m-1 1h0m1 1h0m-2 2h0m1 2h0m-3 1h0m3 1h0m0 1h0m1 1h0m-5 2h0m5 0h0m-1 5h0m-1 0h0m1 1h0m0 1h0m-4 0h0m1 3h0m0 36h0m-1 4h0m0 5h0m0 1h0m0 2h0m1 6h0m1 1h0m3 0h0m-3 1h0m0 1h0m-1 4h0m-1 2h0m5 8h0m-3 7h0m6-134h0m0 3h0m1 0h0m-1 1h0m0 1h0m0 1h0m0 2h0m0 4h0m0 1h0m0 3h0m0 3h0m0 1h0m1 3h0m0 1h0m-2 3h0m1 1h0m1 2h0m-3 0h0m1 1h0m1 3h0m1 1h0m0 3h0m0 4h0m2 1h0m0 1h0m-4 1h0m0 1h0m3 0h0m-3 2h0m-1 1h0m2 1h0m1 2h0m0 1h0m0 1h0m-1 2h0m3 1h0m-4 2h0m2 2h0m2 1h0m0 1h0m0 1h0m-1 1h0m1 0h0m0 1h0m0 1h0m-2 4h0m1 0h0m1 0h0m0 2h0m0 1h0m-1 1h0m-1 2h0m2 3h0m0 1h0m0 1h0m0 1h0m0 1h0m0 3h0m0 5h0m0 2h0m-1 2h0m1 5h0m0 1h0m-1 4h0m1 0h0m-1 1h0m0 1h0m0 1h0m0 1h0m0 4h0m-1 0h0m0 1h0m0 1h0m1 0h0m-1 1h0m2 3h0m-5 4h0m4 1h0m2-124h0m0 6h0m1 5h0m0 1h0m0 4h0m0 1h0m0 5h0m0 1h0m-1 3h0m0 4h0m1 0h0m0 2h0m0 2h0m4 1h0m-4 0h0m3 1h0m-4 3h0m1 2h0m0 1h0m1 1h0m1 3h0m1 0h0m-4 0h0m3 2h0m0 1h0m1 1h0m-3 0h0m-1 0h0m3 2h0m-2 0h0m0 1h0m0 1h0m-1 0h0m4 2h0m-4 0h0m0 2h0m1 2h0m-1 2h0m0 3h0m0 6h0m1 6h0m-1 2h0m0 3h0m0 2h0m0 1h0m1 2h0m-1 1h0m1 1h0m0 1h0m-1 0h0m1 2h0m-1 1h0m0 1h0m2 1h0m-2 0h0m0 2h0m2 1h0m-2 0h0m0 4h0m0 1h0m0 1h0m2 1h0m1 3h0m2 1h0m-3 1h0m-1 0h0m1 3h0m-2 0h0m5 14h0m0 4h0m3-129h0m-1 1h0m2 0h0m-2 2h0m2 2h0m-2 0h0m1 1h0m0 2h0m-1 1h0m0 1h0m1 0h0m1 0h0m0 2h0m-1 0h0m1 1h0m0 1h0m0 1h0m-2 0h0m2 2h0m-1 0h0m1 3h0m-1 1h0m0 1h0m0 1h0m-1 1h0m1 0h0m1 2h0m-1 0h0m0 1h0m-1 0h0m0 1h0m1 0h0m0 1h0m1 0h0m0 2h0m-1 0h0m0 1h0m0 2h0m-1 1h0m2 1h0m-1 0h0m0 3h0m-1 1h0m2 3h0m-1 2h0m2 0h0m-3 0h0m0 1h0m1 3h0m0 1h0m-1 0h0m1 1h0m2 32h0m-4 2h0m0 1h0m3 0h0m-3 3h0m3 1h0m-3 1h0m1 0h0m-1 2h0m4 1h0m-4 1h0m4 0h0m-4 1h0m0 1h0m4 0h0m-1 1h0m-3 1h0m0 1h0m3 1h0m1 0h0m-1 1h0m2 1h0m-5 2h0m0 2h0m4 2h0m-1 0h0m-3 0h0m4 1h0m-4 0h0m0 1h0m5 0h0m-5 8h0m1 0h0m10-108h0m-1 10h0m1 5h0m0 5h0m-1 0h0m1 1h0m-1 1h0m1 1h0m-1 1h0m0 2h0m1 1h0m0 1h0m-5 1h0m5 2h0m-1 2h0m1 3h0m-2 1h0m1 0h0m-4 1h0m5 0h0m-5 4h0m4 1h0m1 41h0m-3 3h0m-1 3h0m4 1h0m-1 2h0m-3 0h0m-1 1h0m4 0h0m-3 1h0m1 2h0m-1 0h0m1 1h0m1 0h0m-2 2h0m4 1h0m-4 0h0m2 0h0m2 1h0m-3 7h0m0 7h0m0 3h0m5-133h0m-1 2h0m1 1h0m-1 1h0m1 0h0m0 1h0m0 2h0m0 1h0m-1 6h0m1 1h0m0 3h0m0 2h0m0 1h0m0 1h0m-1 3h0m0 1h0m1 1h0m1 1h0m0 4h0m-2 0h0m0 2h0m0 2h0m1 1h0m1 2h0m-2 1h0m2 0h0m-2 2h0m0 2h0m4 2h0m-4 0h0m0 1h0m0 7h0m4 44h0m-1 2h0m-3 1h0m3 0h0m0 2h0m0 1h0m1 0h0m0 3h0m1 1h0m-2 1h0m2 1h0m-1 0h0m-1 0h0m1 2h0m-2 0h0m3 2h0m-1 2h0m0 1h0m1 0h0m-1 2h0m0 4h0m0 4h0m0 7h0m3-128h0m0 5h0m0 1h0m0 7h0m0 1h0m-1 4h0m1 3h0m0 1h0m0 2h0m-1 5h0m5 4h0m-4 0h0m0 1h0m-1 2h0m0 1h0m5 2h0m-1 4h0m0 1h0m-1 2h0m0 4h0m1 0h0m0 1h0m0 1h0m-1 2h0m-1 43h0m3 1h0m0 1h0m-2 3h0m0 3h0m-1 1h0m3 8h0m-5 1h0m0 4h0m5 2h0m1-122h0m0 1h0m1 1h0m-1 1h0m0 1h0m0 1h0m0 1h0m0 1h0m0 2h0m1 1h0m-1 4h0m0 2h0m0 5h0m0 1h0m0 1h0m1 1h0m0 1h0m0 2h0m0 1h0m0 1h0m2 0h0m-2 1h0m-1 1h0m4 0h0m-1 0h0m-2 1h0m-1 3h0m1 1h0m1 0h0m3 1h0m-4 0h0m0 1h0m4 1h0m-5 1h0m5 1h0m0 1h0m-4 0h0m4 1h0m-3 1h0m-1 4h0m-1 1h0m2 2h0m0 2h0m-2 0h0m1 1h0m2 47h0m1 5h0m-1 1h0m1 3h0m-3 2h0m10-117h0m0 4h0m0 2h0m0 3h0m0 5h0m0 3h0m0 2h0m0 4h0m0 6h0m-1 2h0m1 1h0m0 1h0m-1 1h0m1 3h0m0 2h0m-4 2h0m3 1h0m-4 1h0m5 0h0m-1 1h0m-4 1h0m4 4h0m-1 0h0m1 2h0m-4 1h0m3 0h0m1 1h0m-4 2h0m4 42h0m-1 1h0m2 0h0m-2 1h0m1 3h0m0 2h0m0 1h0m-4 2h0m3 1h0m-1 1h0m-1 2h0m0 1h0m0 1h0m1 1h0m0 1h0m0 1h0m0 3h0m-2 1h0m0 1h0m4 3h0m2-121h0m0 2h0m0 3h0m0 1h0m0 8h0m0 5h0m0 6h0m0 2h0m0 1h0m0 3h0m2 3h0m-2 3h0m1 1h0m-1 2h0m1 1h0m2 1h0m-2 1h0m2 1h0m-3 1h0m5 3h0m-3 51h0m0 1h0m3 1h0m-3 0h0m0 2h0m-1 1h0m1 1h0m3 1h0m-3 1h0m1 0h0m1 4h0m-3 0h0m1 1h0m3 6h0m-1 3h0m0 6h0m7-128h0m0 1h0m0 2h0m0 1h0m0 1h0m0 2h0m0 2h0m0 2h0m0 1h0m-1 2h0m0 1h0m1 2h0m0 1h0m0 2h0m-1 0h0m-2 5h0m1 2h0m2 4h0m-5 1h0m4 1h0m1 0h0m-3 1h0m-1 1h0m2 0h0m1 0h0m0 1h0m0 1h0m1 1h0m-1 2h0m-3 1h0m3 0h0m0 2h0m1 0h0m-4 1h0m3 2h0m1 1h0m-4 1h0m3 2h0m0 2h0m-1 51h0m-3 1h0m1 2h0m0 4h0m0 4h0m0 2h0m0 1h0m1 4h0m1 2h0m-1 7h0m1 6h0m6-106h0m-1 1h0m3 3h0m-3 3h0m-2 0h0m3 3h0m0 3h0m-2 2h0m1 0h0m1 1h0m1 1h0m-3 2h0m4 2h0m-1 1h0m-1 0h0m-2 0h0m-1 0h0m3 1h0m2 1h0m-3 1h0m0 4h0m0 44h0m1 3h0m-3 2h0m3 1h0m-2 0h0m2 2h0m-1 3h0m-2 3h0m2 4h0m-1 7h0m1 0h0m1 4h0m7-133h0m0 2h0m1 0h0m0 1h0m-1 0h0m1 7h0m-1 2h0m0 4h0m0 1h0m1 7h0m0 1h0m-1 0h0m1 5h0m0 3h0m-1 0h0m0 1h0m1 0h0m0 2h0m-4 1h0m3 1h0m1 0h0m-1 1h0m1 1h0m0 3h0m-1 0h0m0 3h0m-1 0h0m-3 3h0m1 3h0m-1 5h0m1 3h0m2 52h0m-1 1h0m0 1h0m0 1h0m-2 0h0m1 1h0m1 3h0m0 1h0m1 1h0m-1 2h0m4-94h0m2 9h0m0 3h0m-2 1h0m0 1h0m5 1h0m-3 0h0m3 2h0m-3 2h0m0 1h0m-1 2h0m2 1h0m0 2h0m2 0h0m0 2h0m-2 1h0m0 45h0m-1 4h0m1 1h0m-2 1h0m1 0h0m-2 1h0m3 0h0m2 0h0m-1 1h0m1 1h0m-3 1h0m1 1h0m2 2h0m-2 1h0m1 1h0m0 2h0m-4 0h0m4 1h0m0 1h0m1 2h0m-1 0h0m0 6h0m-4 4h0m5 1h0m5-135h0m0 2h0m0 1h0m0 1h0m-1 2h0m1 0h0m-1 2h0m1 1h0m0 1h0m-1 0h0m1 3h0m-1 0h0m0 1h0m1 0h0m0 2h0m-1 1h0m1 4h0m-1 1h0m0 1h0m-1 5h0m2 0h0m-1 6h0m-3 1h0m3 0h0m0 2h0m0 3h0m0 2h0m1 1h0m-4 2h0m5 1h0m-4 0h0m1 1h0m1 1h0m1 0h0m1 1h0m-1 1h0m-4 0h0m4 1h0m-1 0h0m-3 0h0m3 3h0m-3 1h0m3 2h0m0 1h0m-3 3h0m2 49h0m-1 1h0m4 1h0m-5 1h0m0 3h0m5 1h0m-4 0h0m-1 1h0m2 5h0m-1 6h0m-1 4h0m9-111h0m-1 1h0m1 7h0m0 4h0m0 1h0m0 2h0m0 1h0m0 3h0m0 2h0m1 3h0m-1 0h0m0 1h0m1 0h0m1 1h0m-2 0h0m0 1h0m2 2h0m0 1h0m-2 0h0m-2 1h0m4 0h0m0 1h0m-2 1h0m-1 1h0m2 0h0m-4 53h0m0 4h0m4 2h0m-2 2h0m-2 0h0m1 1h0m4 2h0m-1 1h0m-4 0h0m1 2h0m4 2h0m-5 1h0m2 1h0m-2 3h0m0 1h0m9-129h0m0 1h0m0 1h0m0 5h0m0 1h0m0 4h0m0 1h0m0 1h0m1 2h0m-1 0h0m1 5h0m-1 2h0m1 1h0m-1 0h0m0 2h0m0 4h0m1 1h0m1 2h0m-1 2h0m-1 0h0m0 1h0m0 1h0m1 2h0m0 2h0m0 2h0m-1 5h0m-1 1h0m-1 1h0m2 1h0m-3 0h0m4 3h0m-2 52h0m3 0h0m-3 2h0m2 0h0m-2 1h0m0 1h0m2 1h0m-3 3h0m4 0h0m-3 4h0m-2 1h0m4 1h0m-2 2h0m3 6h0m-1 3h0m2-105h0m0 7h0m0 3h0m1 5h0m-1 3h0m5 1h0m-5 2h0m3 1h0m-3 1h0m3 3h0m0 1h0m0 1h0m-1 2h0m1 0h0m0 1h0m-1 2h0m0 2h0m3 2h0m-1 2h0m-4 47h0m5 0h0m-1 2h0m-4 1h0m5 2h0m0 1h0m-1 4h0m-1 1h0m1 6h0m1 1h0m-1 1h0m4-133h0m0 1h0m0 1h0m0 1h0m1 1h0m-1 0h0m0 4h0m1 2h0m-1 1h0m1 0h0m-1 1h0m1 5h0m-2 2h0m1 0h0m1 1h0m-1 1h0m0 2h0m-1 0h0m0 2h0m2 0h0m0 2h0m-2 2h0m0 2h0m2 1h0m-1 1h0m1 0h0m-2 1h0m0 1h0m2 0h0m-1 1h0m-1 2h0m0 1h0m0 1h0m-1 2h0m1 1h0m1 0h0m-2 2h0m3 1h0m1 0h0m1 3h0m-3 0h0m-1 1h0m0 1h0m-1 1h0m3 0h0m-2 1h0m-1 0h0m4 1h0m-3 1h0m0 1h0m1 2h0m-2 1h0m1 1h0m4 0h0m-4 1h0m3 1h0m1 1h0m-3 0h0m3 1h0m-4 2h0m3 0h0m0 1h0m-3 0h0m-1 16h0m4 0h0m-2 2h0m-1 1h0m3 1h0m-3 0h0m0 2h0m2 1h0m1 1h0m-4 1h0m4 0h0m-3 2h0m-1 1h0m3 1h0m-1 1h0m-2 3h0m1 0h0m-1 1h0m0 1h0m4 1h0m0 2h0m-3 1h0m3 0h0m-4 2h0m5 1h0m-5 2h0m4 2h0m-4 6h0m5 1h0m0 11h0m3-99h0m1 3h0m0 9h0m1 0h0m0 1h0m0 1h0m-1 1h0m-1 1h0m1 0h0m0 2h0m-1 1h0m1 0h0m0 2h0m-1 0h0m-2 2h0m4 0h0m-2 0h0m2 1h0m-1 0h0m0 1h0m-3 1h0m4 0h0m0 1h0m-3 0h0m-1 1h0m5 1h0m-2 0h0m-1 0h0m-1 0h0m3 1h0m-1 0h0m1 1h0m-3 1h0m2 1h0m-1 0h0m0 1h0m2 4h0m1 35h0m-1 2h0m0 1h0m0 1h0m-3 4h0m-1 1h0m1 2h0m-1 0h0m0 1h0m1 0h0m0 1h0m-1 2h0m3 1h0m-3 0h0m1 1h0m4 1h0m-5 1h0m4 0h0m1 2h0m-2 6h0m-3 2h0m1 4h0m7-137h0m0 1h0m0 1h0m0 3h0m0 1h0m3 1h0m-3 1h0m0 1h0m3 2h0m0 3h0m-3 0h0m0 2h0m0 5h0m-1 2h0m1 1h0m0 1h0m3 1h0m-4 0h0m1 0h0m0 1h0m3 0h0m-4 1h0m4 0h0m0 2h0m-4 1h0m4 0h0m0 1h0m-4 1h0m4 1h0m-4 1h0m4 0h0m0 1h0m0 1h0m-4 0h0m1 3h0m3 0h0m0 1h0m-3 1h0m3 0h0m0 1h0m0 2h0m-4 1h0m4 1h0m0 1h0m-4 0h0m3 1h0m-3 0h0m0 1h0m1 1h0m1 0h0m1 1h0m1 1h0m-4 0h0m3 0h0m1 1h0m-1 0h0m-3 1h0m-1 2h0m5 1h0m-2 48h0m0 1h0m1 2h0m0 1h0m0 4h0m-1 0h0m0 7h0m4-91h0m1 7h0m1 1h0m-1 7h0m-2 2h0m1 0h0m-1 2h0m2 0h0m-1 4h0m2 1h0m2 57h0m-3 0h0m3 1h0m-2 1h0m2 2h0m-1 0h0m1 1h0m0 1h0m-1 0h0m0 1h0m1 0h0m-1 2h0m-3 1h0m1 2h0m2 2h0m0 2h0m-3 1h0m3 2h0m3-131h0m0 1h0m1 1h0m-1 1h0m0 1h0m0 2h0m0 3h0m0 5h0m1 2h0m-1 2h0m1 0h0m-1 2h0m1 0h0m-1 1h0m0 2h0m0 3h0m0 1h0m1 4h0m-1 2h0m0 1h0m-1 2h0m1 1h0m4 1h0m-5 0h0m4 2h0m-3 0h0m0 2h0m1 1h0m-1 1h0m1 0h0m0 1h0m3 0h0m-5 1h0m2 0h0m1 1h0m-3 0h0m1 2h0m1 0h0m1 2h0m-3 1h0m2 1h0m1 1h0m2 0h0m-1 53h0m-4 2h0m0 1h0m4 1h0m0 1h0m0 8h0m1 1h0m5-93h0m0 2h0m0 3h0m-1 2h0m1 4h0m-3 1h0m3 3h0m-2 4h0m1 2h0m1 2h0m-1 2h0m2 3h0m0 6h0m0 1h0m0 4h0m0 34h0m-2 3h0m2 2h0m-1 2h0m1 3h0m-5 2h0m5 2h0m-5 4h0m3 1h0m-2 1h0m0 1h0m4 1h0m-2 3h0m-2 2h0m5-126h0m0 1h0m1 3h0m-1 0h0m1 1h0m-1 2h0m1 1h0m4 1h0m-5 0h0m1 0h0m0 2h0m4 4h0m-4 0h0m4 4h0m0 1h0m-5 1h0m5 2h0m0 1h0m0 1h0m-4 1h0m4 1h0m-4 1h0m-1 1h0m1 1h0m-1 0h0m5 1h0m-4 1h0m4 1h0m0 2h0m0 4h0m-5 0h0m5 1h0m-5 1h0m1 1h0m-1 0h0m5 1h0m-5 0h0m4 1h0m0 1h0m-4 0h0m1 2h0m4 0h0m-5 1h0m1 0h0m4 0h0m-5 1h0m1 1h0m0 1h0m3 0h0m-4 1h0m0 1h0m1 0h0m4 1h0m-5 2h0m0 2h0m0 1h0m1 1h0m1 2h0m0 40h0m0 1h0m0 1h0m0 1h0m0 2h0m1 1h0m-1 2h0m0 1h0m0 1h0m1 0h0m-1 1h0m0 3h0m1 4h0m-1 0h0m0 1h0m1 1h0m-1 3h0m0 3h0m9-121h0m-5 12h0m5 0h0m-5 6h0m5 10h0m-5 2h0m5 2h0m-4 2h0m4 0h0m0 2h0m-3 2h0m-2 1h0m1 1h0m4 1h0m-2 3h0m2 56h0m-3 2h0m2 1h0m1 2h0m-1 1h0m0 1h0m-4 0h0m4 2h0m-1 4h0m1 2h0m1 0h0m-1 1h0m0 10h0m2-134h0m0 1h0m0 1h0m0 1h0m1 0h0m-1 2h0m0 1h0m1 1h0m-1 4h0m2 2h0m-2 0h0m0 1h0m0 1h0m0 1h0m0 1h0m1 2h0m-1 3h0m0 1h0m2 0h0m-1 1h0m0 6h0m-1 2h0m1 2h0m-1 1h0m1 1h0m0 2h0m-1 0h0m1 2h0m-1 1h0m3 2h0m-2 1h0m0 1h0m4 2h0m-5 1h0m4 2h0m1 2h0m-2 4h0m1 1h0m-1 50h0m2 2h0m0 3h0m-3 4h0m0 1h0m3 14h0m6-132h0m-2 1h0m0 3h0m2 1h0m0 2h0m0 1h0m-2 0h0m2 2h0m-2 4h0m2 1h0m0 3h0m0 2h0m-2 1h0m2 1h0m0 1h0m-2 1h0m0 1h0m2 0h0m0 4h0m-2 1h0m2 1h0m-1 1h0m1 2h0m-2 0h0m2 1h0m-1 0h0m-1 5h0m1 0h0m1 0h0m-1 3h0m-1 0h0m2 0h0m-3 1h0m1 1h0m2 1h0m-2 0h0m0 1h0m0 1h0m1 2h0m-1 0h0m2 2h0m-1 1h0m1 0h0m0 2h0m-2 0h0m-1 0h0m2 2h0m0 37h0m-2 3h0m0 1h0m1 2h0m1 0h0m-1 1h0m1 0h0m-2 1h0m2 2h0m0 4h0m-2 1h0m-1 1h0m0 3h0m-1 1h0m4 0h0m-3 1h0m3 1h0m-4 1h0m1 2h0m0 2h0m0 2h0m-1 1h0m1 3h0m-1 3h0m1 0h0m-1 1h0m0 2h0m6-133h0m0 5h0m0 5h0m5 7h0m-5 3h0m0 2h0m0 1h0m5 0h0m0 2h0m0 6h0m-5 0h0m0 1h0m0 1h0m0 1h0m0 1h0m5 0h0m0 1h0m-5 0h0m0 2h0m5 4h0m0 1h0m-1 2h0m-4 1h0m5 1h0m0 3h0m0 1h0m-5 0h0m0 2h0m0 1h0m2 1h0m1 2h0m-1 3h0m2 33h0m1 2h0m0 1h0m-4 1h0m3 0h0m1 0h0m-4 2h0m-1 1h0m4 0h0m1 0h0m-4 1h0m0 1h0m0 1h0m0 1h0m3 0h0m1 0h0m-4 1h0m0 3h0m1 1h0m0 1h0m2 1h0m-2 0h0m0 2h0m-1 0h0m3 0h0m-2 1h0m0 1h0m0 2h0m2 2h0m-2 0h0m1 3h0m-1 0h0m-1 1h0m2 5h0m-1 3h0m3 4h0m-3 3h0m9-136h0m-1 4h0m0 1h0m1 1h0m0 2h0m-1 0h0m1 1h0m-1 1h0m1 0h0m0 2h0m0 1h0m0 1h0m-5 1h0m5 0h0m0 5h0m0 2h0m-1 1h0m0 4h0m1 1h0m-5 1h0m5 2h0m0 1h0m-5 0h0m0 1h0m4 3h0m-4 1h0m4 2h0m1 2h0m-5 0h0m5 1h0m-1 1h0m-4 0h0m4 2h0m-4 2h0m3 26h0m1 2h0m0 1h0m0 1h0m0 1h0m1 0h0m0 1h0m-1 1h0m0 1h0m0 4h0m-1 1h0m0 3h0m1 0h0m1 2h0m-4 0h0m2 1h0m1 0h0m-3 0h0m2 1h0m0 1h0m2 2h0m-4 1h0m2 1h0m1 0h0m0 2h0m-4 0h0m1 1h0m0 1h0m1 1h0m-2 1h0m1 2h0m0 1h0m3 0h0m-4 1h0m4 1h0m0 1h0m-3 0h0m0 1h0m-1 0h0m2 0h0m-1 2h0m1 0h0m-2 0h0m1 5h0m-1 2h0m7-119h0m-1 13h0m2 3h0m0 2h0m0 11h0m-1 2h0m1 2h0m0 3h0m0 1h0m2 0h0m-2 2h0m-2 2h0m4 3h0m1 3h0m0 2h0m-2 2h0m0 3h0m1 1h0m-4 18h0m0 8h0m0 1h0m0 4h0m0 1h0m0 2h0m0 4h0m0 1h0m0 1h0m0 1h0m1 5h0m-1 0h0m2 1h0m-1 4h0m2 3h0m-2 2h0m1 2h0m1 2h0m7-117h0m0 6h0m0 1h0m0 1h0m1 0h0m-1 1h0m0 2h0m1 0h0m-1 2h0m-1 0h0m1 2h0m0 1h0m0 1h0m-1 1h0m1 1h0m1 3h0m0 5h0m-1 0h0m1 1h0m-1 2h0m1 3h0m-2 1h0m1 1h0m-1 0h0m2 1h0m-2 2h0m2 0h0m-2 3h0m2 0h0m-2 3h0m2 1h0m-3 2h0m3 1h0m-2 0h0m-1 1h0m-2 2h0m3 1h0m2 1h0m-2 0h0m2 1h0m-2 3h0m-1 41h0m3 1h0m0 2h0m-3 1h0m1 2h0m2 1h0m-3 1h0m1 0h0m-2 2h0m2 3h0m-2 1h0m0 1h0m-1 1h0m5 2h0m-5 1h0m3 0h0m-1 0h0m-1 2h0m2 1h0m-2 1h0m0 1h0m-1 1h0m2 1h0m1 2h0m-2 4h0m0 1h0m10-119h0m0 7h0m0 9h0m-4 7h0m4 2h0m-4 1h0m3 1h0m0 4h0m1 1h0m0 1h0m-1 1h0m1 1h0m0 2h0m-5 2h0m1 0h0m4 0h0m-1 4h0m-4 40h0m0 4h0m0 1h0m5 1h0m-1 1h0m-3 0h0m4 3h0m-5 1h0m1 2h0m1 2h0m3 0h0m-1 1h0m-3 1h0m-1 1h0m5 4h0m-3 1h0m1 1h0m-2 2h0m4 1h0m0 4h0m-1 0h0m6-127h0m0 1h0m-1 3h0m1 1h0m-1 1h0m1 1h0m-1 4h0m0 1h0m1 1h0m-4 5h0m3 0h0m0 1h0m1 1h0m-1 0h0m1 1h0m-4 3h0m0 1h0m3 1h0m-3 4h0m3 0h0m-3 1h0m3 1h0m-3 2h0m4 1h0m0 1h0m-1 0h0m-3 1h0m4 2h0m-1 4h0m-3 0h0m3 1h0m-1 3h0m-2 3h0m1 48h0m4 2h0m0 2h0m-1 0h0m-2 0h0m3 1h0m-5 0h0m1 1h0m4 0h0m-5 1h0m2 0h0m-2 1h0m1 1h0m0 1h0m0 1h0m4 0h0m0 2h0m-5 3h0m0 1h0m2 11h0m3 1h0m3-91h0m-2 1h0m3 6h0m2 0h0m-2 1h0m2 1h0m-2 0h0m-1 3h0m-2 1h0m4 1h0m0 55h0m1 2h0m-3 3h0m-1 2h0m-1 4h0m1 0h0m0 1h0m-1 8h0m0 2h0m10-127h0m-1 0h0m1 2h0m-2 4h0m2 0h0m-2 1h0m1 1h0m0 1h0m0 1h0m1 1h0m0 1h0m-1 0h0m0 1h0m-1 2h0m1 0h0m1 1h0m-1 1h0m1 1h0m-1 1h0m1 0h0m-2 1h0m1 0h0m1 1h0m0 1h0m-1 0h0m0 1h0m0 3h0m1 2h0m0 1h0m-2 0h0m0 1h0m2 1h0m0 2h0m-2 1h0m2 1h0m1 4h0m-1 2h0m1 0h0m-3 0h0m2 2h0m-2 1h0m1 1h0m2 0h0m-3 1h0m2 1h0m0 4h0m-2 1h0m0 1h0m2 0h0m1 1h0m-1 0h0m-2 1h0m-2 2h0m2 0h0m3 2h0m-1 1h0m0 2h0m0 1h0m-1 1h0m2 1h0m-3 1h0m3 0h0m0 1h0m0 1h0m0 3h0m-3 1h0m3 0h0m0 1h0m-1 1h0m1 1h0m-1 2h0m1 1h0m-1 1h0m-2 1h0m3 1h0m0 2h0m-1 0h0m0 1h0m0 1h0m1 1h0m-1 0h0m-2 1h0m3 2h0m-3 1h0m3 0h0m-4 2h0m0 3h0m3 0h0m-2 2h0m0 3h0m-1 1h0m1 0h0m2 0h0m-3 1h0m0 1h0m0 1h0m4 1h0m-4 0h0m4 1h0m-3 2h0m-1 1h0m0 1h0m-1 3h0m4 1h0m-3 4h0m-1 1h0m1 0h0m0 1h0m0 14h0m10-124h0m0 9h0m0 17h0m0 1h0m-1 2h0m1 1h0m-1 4h0m-4 2h0m5 0h0m-5 2h0m2 0h0m3 2h0m-1 3h0m-4 0h0m1 4h0m-1 18h0m0 12h0m0 6h0m0 3h0m0 1h0m0 2h0m1 2h0m2 6h0m-2 0h0m2 1h0m-1 2h0m1 0h0m0 1h0m-1 1h0m-2 0h0m3 2h0m-3 0h0m3 5h0m-3 1h0m3 1h0m1 1h0m-1 2h0m-1 4h0m1 5h0m1 2h0m2-134h0m0 1h0m0 1h0m0 1h0m2 1h0m1 1h0m-1 0h0m1 3h0m-1 2h0m-2 1h0m2 1h0m1 0h0m-3 0h0m3 1h0m-1 3h0m0 1h0m-2 2h0m2 0h0m-2 1h0m0 1h0m2 0h0m1 3h0m-3 2h0m3 0h0m-3 3h0m3 1h0m-3 1h0m4 3h0m-2 1h0m0 1h0m1 1h0m-1 3h0m1 2h0m0 2h0m1 1h0m-1 2h0m0 3h0m0 3h0m0 40h0m-2 1h0m0 1h0m2 1h0m-3 1h0m4 0h0m-3 2h0m4 3h0m-4 0h0m3 0h0m-3 1h0m4 0h0m0 1h0m0 1h0m0 1h0m0 3h0m0 1h0m-4 1h0m4 0h0m0 4h0m0 1h0m0 1h0m-1 4h0m1 0h0m0 9h0m0 2h0m2-127h0m1 11h0m-1 2h0m1 1h0m0 2h0m0 1h0m0 2h0m3 5h0m-3 1h0m-1 1h0m1 2h0m0 1h0m0 1h0m3 1h0m-4 1h0m0 1h0m1 1h0m0 1h0m-1 2h0m1 1h0m1 2h0m-3 0h0m1 3h0m-1 1h0m1 3h0m-1 0h0m3 55h0m0 3h0m-3 0h0m1 6h0m3 3h0m0 2h0m-1 1h0m5-123h0m0 2h0m0 2h0m0 4h0m0 4h0m0 1h0m0 4h0m-1 0h0m1 2h0m0 2h0m-1 0h0m1 2h0m0 1h0m-1 0h0m0 1h0m0 1h0m3 1h0m-2 1h0m0 2h0m2 1h0m-2 0h0m0 3h0m0 2h0m-1 3h0m1 1h0m-1 2h0m3 1h0m-3 0h0m0 1h0m4 0h0m0 11h0m0 1h0m-2 51h0m2 2h0m0 1h0m-5 0h0m4 2h0m-4 1h0m4 0h0m-1 5h0m-3 2h0m4 4h0m0 2h0m7-85h0m0 4h0m-5 1h0m2 3h0m-1 0h0m3 2h0m-4 1h0m5 2h0m0 1h0m-3 2h0m-1 0h0m4 1h0m-1 0h0m-4 0h0m4 3h0m-2 1h0m3 1h0m-3 1h0m3 0h0m-3 42h0m2 1h0m0 1h0m-2 3h0m3 0h0m-4 2h0m-1 2h0m4 0h0m-1 1h0m0 6h0m0 4h0m1 0h0m-1 14h0m4-139h0m0 1h0m0 4h0m0 2h0m0 1h0m0 1h0m0 1h0m0 1h0m0 1h0m0 1h0m-1 1h0m1 4h0m-1 3h0m2 1h0m-2 6h0m1 1h0m0 4h0m-1 0h0m2 1h0m-2 4h0m3 2h0m-1 1h0m-2 1h0m3 4h0m-3 1h0m2 1h0m2 0h0m-4 0h0m0 4h0m4 1h0m-4 6h0m0 1h0m4 45h0m0 2h0m1 3h0m0 2h0m-1 2h0m-1 1h0m2 1h0m-2 2h0m2 1h0m0 1h0m-1 1h0m1 2h0m0 1h0m0 1h0m0 2h0m3-110h0m0 22h0m-2 2h0m2 0h0m-1 3h0m-1 2h0m4 1h0m-4 2h0m3 1h0m-3 1h0m1 1h0m1 3h0m-2 0h0m2 2h0m3 1h0m0 1h0m-1 2h0m1 2h0m0 1h0m-1 2h0m1 0h0m0 1h0m0 3h0m0 1h0m0 1h0m0 1h0m0 2h0m0 1h0m0 1h0m-1 1h0m0 1h0m1 2h0m0 1h0m0 2h0m0 2h0m-1 1h0m1 0h0m-1 2h0m0 1h0m1 2h0m0 1h0m0 1h0m0 1h0m0 3h0m-1 3h0m0 1h0m1 3h0m0 2h0m0 2h0m-3 4h0m0 4h0m3 2h0m1-119h0m0 3h0m1 3h0m0 2h0m-1 1h0m1 1h0m0 2h0m0 1h0m-1 1h0m0 3h0m0 3h0m1 0h0m-1 4h0m0 2h0m1 1h0m-1 2h0m5 3h0m-5 1h0m0 2h0m0 2h0m4 0h0m-4 2h0m1 0h0m-1 2h0m5 1h0m-5 2h0m1 0h0m1 1h0m2 0h0m1 0h0m-1 1h0m-3 0h0m2 3h0m-2 2h0m-1 2h0m1 1h0m0 1h0m1 2h0m-1 0h0m-1 0h0m1 1h0m1 1h0m-1 1h0m0 1h0m-1 0h0m0 1h0m0 1h0m1 8h0m-1 4h0m1 1h0m0 2h0m1 1h0m-1 4h0m0 3h0m1 1h0m0 1h0m0 1h0m-1 2h0m0 3h0m-1 2h0m1 1h0m1 4h0m1 2h0m-2 0h0m1 1h0m1 1h0m2 0h0m-4 1h0m4 0h0m-1 0h0m-2 1h0m-1 1h0m1 3h0m2 1h0m-2 0h0m3 4h0m-1 1h0m-3 2h0m3 3h0m1 2h0m6-125h0m0 4h0m0 1h0m0 10h0m0 1h0m0 5h0m-3 7h0m2 6h0m1 1h0m0 4h0m-5 3h0m1 1h0m-1 1h0m5 1h0m-1 0h0m-4 2h0m1 0h0m3 0h0m1 0h0m-4 1h0m4 3h0m-4 1h0m0 1h0m4 3h0m-3 40h0m2 3h0m-1 1h0m0 1h0m-2 2h0m2 0h0m1 1h0m-3 0h0m3 1h0m0 1h0m-1 1h0m0 1h0m1 1h0m-4 0h0m0 1h0m0 1h0m2 2h0m1 1h0m0 1h0m1 1h0m-1 0h0m0 1h0m1 0h0m0 2h0m-1 6h0m0 7h0m3-129h0m1 3h0m-1 3h0m0 8h0m0 3h0m0 3h0m0 2h0m0 4h0m0 1h0m0 1h0m0 6h0m3 0h0m-3 3h0m1 4h0m-1 0h0m0 2h0m1 0h0m-1 4h0m3 1h0m1 0h0m-3 2h0m3 1h0m-1 3h0m-2 40h0m2 2h0m-1 4h0m0 3h0m-1 1h0m4 2h0m-2 2h0m-1 1h0m3 1h0m-1 0h0m-2 0h0m2 2h0m-1 1h0m2 7h0m0 7h0m-1 4h0m4-133h0m3 0h0m0 3h0m0 2h0m0 1h0m0 1h0m0 1h0m0 3h0m-1 3h0m-2 0h0m3 0h0m0 1h0m-3 1h0m3 1h0m-3 0h0m2 1h0m-2 0h0m3 0h0m-3 1h0m3 0h0m-3 1h0m3 0h0m-3 2h0m0 5h0m3 1h0m-1 0h0m-2 0h0m0 1h0m3 1h0m-3 0h0m0 1h0m0 1h0m0 1h0m2 1h0m-2 0h0m3 2h0m-1 1h0m-2 1h0m0 2h0m-1 0h0m2 1h0m-1 1h0m1 3h0m2 0h0m-4 1h0m1 0h0m2 1h0m-4 0h0m5 1h0m-2 0h0m-2 2h0m0 2h0m2 1h0m-2 2h0m0 1h0m2 25h0m1 2h0m0 2h0m0 2h0m0 1h0m0 3h0m-1 1h0m1 2h0m0 1h0m0 1h0m0 4h0m0 2h0m-4 1h0m0 2h0m3 2h0m-3 2h0m3 1h0m-3 2h0m3 1h0m-2 1h0m-1 4h0m1 3h0m3 11h0m2-113h0m0 1h0m0 2h0m0 5h0m0 2h0m0 12h0m0 1h0m0 2h0m3 3h0m0 1h0m-3 0h0m4 1h0m-4 1h0m4 1h0m1 2h0m-1 0h0m-4 0h0m2 1h0m2 1h0m-1 0h0m1 1h0m-4 1h0m0 1h0m0 1h0m4 0h0m-4 1h0m1 0h0m1 0h0m1 1h0m-3 0h0m1 1h0m2 1h0m-3 3h0m0 16h0m0 1h0m0 2h0m0 4h0m1 2h0m-1 6h0m0 1h0m0 1h0m0 2h0m0 2h0m1 1h0m0 3h0m4 0h0m-5 0h0m1 1h0m1 1h0m-1 0h0m0 1h0m1 2h0m-1 0h0m1 1h0m-1 1h0m2 1h0m-2 0h0m-1 3h0m4 0h0m-3 1h0m0 2h0m0 1h0m1 4h0m8-127h0m0 1h0m1 2h0m-1 2h0m1 0h0m-1 1h0m0 2h0m1 0h0m0 1h0m-1 2h0m1 1h0m-1 0h0m1 1h0m0 1h0m0 2h0m-1 5h0m0 1h0m0 5h0m1 1h0m-1 3h0m0 1h0m0 1h0m1 1h0m0 7h0m0 1h0m-1 1h0m1 2h0m0 1h0m0 1h0m-4 0h0m2 53h0m2 0h0m0 2h0m-2 1h0m0 1h0m0 3h0m0 1h0m0 2h0m2 2h0m-4 1h0m2 5h0m0 7h0m3-122h0m0 9h0m0 6h0m0 2h0m0 2h0m0 4h0m0 3h0m0 1h0m0 1h0m0 5h0m1 0h0m-1 3h0m1 1h0m-1 0h0m0 1h0m2 2h0m-2 0h0m3 1h0m0 1h0m-3 0h0m3 1h0m-3 0h0m2 1h0m-2 4h0m4 1h0m-1 2h0m0 1h0m1 3h0m0 1h0m-1 2h0m-2 37h0m0 5h0m1 1h0m3 2h0m0 2h0m0 2h0m-3 0h0m3 1h0m-3 0h0m-2 1h0m5 0h0m0 1h0m0 1h0m-4 0h0m1 1h0m3 1h0m0 1h0m-4 0h0m4 1h0m-3 2h0m3 1h0m0 1h0m0 2h0m5-123h0m0 5h0m-2 2h0m2 0h0m-2 1h0m1 1h0m-1 0h0m1 1h0m-1 1h0m2 2h0m-1 1h0m1 1h0m-1 2h0m-1 1h0m1 2h0m1 1h0m-2 3h0m2 2h0m-1 0h0m1 1h0m-1 1h0m-1 0h0m0 1h0m1 2h0m-1 0h0m2 0h0m-3 1h0m1 1h0m3 2h0m-2 1h0m-1 1h0m2 0h0m-2 1h0m2 0h0m1 2h0m-3 0h0m0 1h0m3 1h0m-3 0h0m0 2h0m2 0h0m0 1h0m-2 1h0m-1 0h0m0 1h0m4 1h0m-4 1h0m4 0h0m-5 3h0m5 1h0m-4 1h0m-1 1h0m1 3h0m0 1h0m0 3h0m0 1h0m0 30h0m4 1h0m0 1h0m0 1h0m-5 0h0m0 1h0m1 2h0m4 0h0m-5 1h0m5 1h0m-5 1h0m0 1h0m1 2h0m4 1h0m-4 0h0m1 1h0m-2 5h0m0 1h0m0 6h0m0 2h0m6-89h0m4 5h0m0 2h0m0 3h0m0 2h0m0 2h0m1 0h0m-2 3h0m0 2h0m1 2h0m0 1h0m-4 1h0m0 48h0m0 5h0m1 2h0m0 1h0m2 0h0m0 2h0m-2 2h0m-1 1h0m1 1h0m3 1h0m-4 1h0m2 1h0m3 0h0m-4 4h0m4 4h0m-5 1h0m1 0h0m0 2h0m8-128h0m0 1h0m0 1h0m0 2h0m0 2h0m0 2h0m0 1h0m0 1h0m0 1h0m0 3h0m0 1h0m0 1h0m0 1h0m0 2h0m0 4h0m0 2h0m0 1h0m1 4h0m-1 1h0m1 1h0m-1 0h0m0 1h0m1 1h0m-1 1h0m0 1h0m0 2h0m1 0h0m-1 2h0m0 1h0m-2 2h0m4 0h0m-1 1h0m-3 4h0m0 57h0m4 2h0m-4 3h0m4 5h0m-5 0h0m1 3h0m5-118h0m0 6h0m0 6h0m0 4h0m0 3h0m0 2h0m0 4h0m0 1h0m0 1h0m0 5h0m0 3h0m2 3h0m-2 1h0m3 3h0m-3 4h0m3 1h0m-3 1h0m3 1h0m0 2h0m0 1h0m2 0h0m-2 2h0m0 1h0m0 1h0m1 0h0m1 1h0m-2 0h0m1 1h0m-1 2h0m-2 35h0m4 2h0m-1 2h0m-3 0h0m3 1h0m-2 0h0m1 1h0m-1 1h0m-1 1h0m3 1h0m-2 1h0m2 1h0m-3 0h0m0 1h0m0 1h0m3 0h0m-3 1h0m2 1h0m2 2h0m-4 0h0m4 2h0m0 5h0m-3 1h0m3 2h0m0 10h0m4-134h0m-1 1h0m1 3h0m0 4h0m0 1h0m0 1h0m0 4h0m-1 7h0m0 1h0m0 1h0m0 2h0m1 3h0m0 1h0m-1 1h0m1 0h0m-1 2h0m0 1h0m0 4h0m1 1h0m-1 0h0m1 1h0m-1 1h0m0 1h0m1 0h0m1 1h0m1 0h0m-4 4h0m4 0h0m-3 2h0m1 3h0m2 1h0m-2 0h0m0 2h0m-1 0h0m-2 4h0m5 1h0m-4 1h0m0 1h0m1 2h0m3 44h0m-4 2h0m0 2h0m-1 2h0m4 4h0m-3 8h0m8-102h0m-3 10h0m5 2h0m-1 3h0m-4 3h0m4 1h0m-4 2h0m0 6h0m5 0h0m-1 1h0m-1 2h0m-2 0h0m-1 2h0m2 1h0m2 0h0m0 1h0m1 1h0m-3 52h0m3 1h0m-4 1h0m-1 0h0m5 1h0m-5 0h0m3 3h0m-3 0h0m0 5h0m3 2h0m-2 4h0m1 7h0m6-136h0m0 1h0m0 1h0m0 3h0m0 1h0m-1 2h0m1 1h0m0 1h0m0 2h0m0 1h0m0 1h0m0 2h0m0 3h0m0 2h0m-1 4h0m1 1h0m0 1h0m-1 1h0m1 1h0m0 1h0m0 1h0m-1 1h0m0 1h0m2 1h0m-1 0h0m0 3h0m0 2h0m3 2h0m-3 1h0m3 6h0m-4 1h0m4 0h0m-5 1h0m1 0h0m2 0h0m-2 2h0m-1 2h0m1 0h0m2 57h0m-3 3h0m4 0h0m-1 2h0m0 2h0m-3 1h0m4 1h0m-4 2h0m4 1h0m0 1h0m0 2h0m-1 7h0m1 1h0m-4 1h0m4 3h0m2-111h0m0 1h0m0 6h0m0 1h0m0 5h0m0 1h0m0 1h0m0 1h0m2 1h0m0 1h0m-2 1h0m1 1h0m-1 0h0m2 1h0m1 0h0m-3 3h0m1 0h0m-1 3h0m4 0h0m0 2h0m1 2h0m-2 4h0m1 2h0m1 4h0m-5 42h0m5 1h0m-2 3h0m-3 0h0m3 1h0m2 1h0m0 1h0m-2 2h0m2 1h0m0 5h0m-1 1h0m-2 0h0m-1 4h0m4 3h0m3-130h0m-1 1h0m0 1h0m1 3h0m-1 1h0m1 1h0m-1 0h0m1 2h0m0 1h0m-1 0h0m1 3h0m0 1h0m0 2h0m-1 0h0m1 3h0m1 1h0m-1 2h0m0 1h0m-1 2h0m1 1h0m1 0h0m-2 2h0m1 1h0m0 1h0m0 1h0m2 1h0m-2 0h0m1 1h0m-1 2h0m1 1h0m-1 1h0m-1 0h0m0 2h0m1 0h0m-1 1h0m1 0h0m0 1h0m0 1h0m3 0h0m-3 1h0m0 1h0m-1 0h0m1 1h0m1 1h0m0 1h0m-3 1h0m1 1h0m-1 2h0m2 1h0m-2 0h0m2 2h0m-1 0h0m1 1h0m-1 1h0m-1 1h0m3 2h0m0 2h0m-2 2h0m2 2h0m0 3h0m-3 0h0m0 2h0m1 0h0m-1 2h0m4 2h0m-4 1h0m0 1h0m4 1h0m0 1h0m-1 0h0m-2 0h0m2 1h0m-3 0h0m3 1h0m-3 0h0m0 1h0m4 0h0m-1 0h0m1 1h0m0 1h0m-4 2h0m0 1h0m3 0h0m0 1h0m0 1h0m1 1h0m-4 0h0m3 1h0m1 1h0m-4 0h0m3 1h0m0 1h0m-2 0h0m3 1h0m0 1h0m-4 0h0m0 1h0m0 2h0m3 0h0m0 2h0m-3 1h0m4 0h0m-4 2h0m4 2h0m-4 1h0m4 0h0m-4 1h0m5 1h0m-5 2h0m3 0h0m-3 1h0m0 1h0m5 1h0m-2 6h0m-3 4h0m0 5h0m0 4h0m10-109h0m0 5h0m0 1h0m0 2h0m-1 2h0m1 3h0m0 1h0m-1 3h0m-3 1h0m3 2h0m2 51h0m-2 1h0m0 4h0m1 0h0m-1 1h0m2 1h0m0 1h0m-3 1h0m2 4h0m-1 1h0m0 1h0m-2 0h0m1 3h0m-1 1h0m0 2h0m1 1h0m-1 0h0m-1 1h0m1 0h0m3 1h0m-1 1h0m-1 1h0m5-123h0m0 1h0m-1 0h0m1 6h0m0 1h0m0 1h0m-1 2h0m1 2h0m0 1h0m0 3h0m-1 2h0m0 2h0m1 2h0m0 1h0m0 3h0m-1 2h0m0 1h0m1 2h0m4 0h0m-5 2h0m1 0h0m0 1h0m-1 3h0m0 1h0m0 1h0m5 2h0m-4 0h0m0 1h0m0 1h0m2 4h0m2 2h0m-3 1h0m0 3h0m1 2h0m-1 41h0m1 1h0m-1 0h0m0 2h0m0 1h0m-2 0h0m2 1h0m1 2h0m-3 0h0m3 2h0m0 1h0m0 1h0m1 2h0m-1 2h0m0 1h0m0 1h0m0 1h0m1 2h0m-1 0h0m1 1h0m-1 6h0m0 1h0m1 2h0m3-91h0m2 9h0m-3 0h0m2 5h0m-1 1h0m-1 1h0m4 2h0m-4 0h0m1 1h0m3 47h0m-1 4h0m1 1h0m-2 1h0m2 0h0m0 2h0m-2 1h0m1 0h0m-1 1h0m3 0h0m-3 2h0m0 2h0m3 1h0m-3 2h0m-2 2h0m2 2h0m-2 1h0m5 6h0m-5 1h0m6-130h0m2 4h0m-2 3h0m0 2h0m2 0h0m-2 3h0m1 0h0m1 1h0m-2 2h0m0 5h0m2 2h0m-2 1h0m2 1h0m-2 0h0m2 2h0m-2 0h0m3 1h0m0 2h0m-3 1h0m1 0h0m-1 1h0m2 0h0m-2 3h0m1 0h0m1 2h0m-2 2h0m2 0h0m-2 1h0m1 1h0m-1 1h0m2 0h0m-1 1h0m-1 0h0m3 0h0m-3 1h0m0 1h0m1 0h0m-1 1h0m1 1h0m1 1h0m-2 0h0m5 0h0m-4 1h0m1 1h0m-2 2h0m3 3h0m-1 48h0m0 2h0m-1 3h0m2 2h0m0 3h0m1 0h0m-2 4h0m3 3h0m6-120h0m0 3h0m0 3h0m0 2h0m-1 3h0m1 2h0m0 1h0m0 1h0m0 2h0m0 1h0m0 1h0m0 3h0m-1 0h0m0 2h0m1 1h0m0 1h0m0 1h0m0 2h0m-1 2h0m1 1h0m0 1h0m0 2h0m0 3h0m0 2h0m-1 2h0m1 1h0m-1 0h0m-4 1h0m5 4h0m-1 1h0m0 1h0m-4 0h0m4 1h0m-4 0h0m1 1h0m-1 1h0m4 2h0m-1 51h0m1 4h0m-1 1h0m-1 2h0m2 5h0m-3 1h0m0 1h0m0 3h0m1 9h0m-1 0h0m5-130h0m0 2h0m0 1h0m0 6h0m0 6h0m0 5h0m0 2h0m0 1h0m0 4h0m0 2h0m0 1h0m0 4h0m3 1h0m-3 0h0m0 4h0m2 1h0m-2 1h0m0 1h0m0 1h0m2 1h0m-1 2h0m-1 1h0m5 2h0m0 1h0m-2 1h0m-3 1h0m0 1h0m3 4h0m-1 46h0m1 2h0m-1 2h0m1 2h0m0 1h0m2 1h0m-1 1h0m-1 3h0m0 1h0m2 1h0m-1 1h0m0 1h0m0 1h0m-3 2h0m2 1h0m2 7h0m-1 1h0m-1 1h0m1 3h0m7-134h0m0 1h0m0 1h0m0 4h0m-1 0h0m0 1h0m1 0h0m0 1h0m0 2h0m0 1h0m-1 1h0m1 1h0m-5 0h0m4 0h0m1 1h0m0 1h0m-4 0h0m3 3h0m-3 0h0m-1 0h0m5 2h0m0 1h0m-5 0h0m0 2h0m0 1h0m5 0h0m-5 2h0m4 2h0m1 1h0m0 1h0m-1 1h0m-3 0h0m0 1h0m4 1h0m-1 1h0m1 0h0m-5 0h0m4 2h0m0 2h0m-4 0h0m1 1h0m3 1h0m-4 0h0m1 1h0m3 0h0m0 1h0m-3 0h0m0 3h0m-1 1h0m2 2h0m-2 1h0m0 3h0m1 2h0m2 46h0m1 4h0m0 1h0m-1 0h0m-3 3h0m1 6h0m-1 3h0m2 15h0m6-131h0m1 16h0m0 1h0m0 2h0m0 1h0m-1 1h0m0 1h0m1 4h0m0 3h0m0 2h0m-1 1h0m0 3h0m1 1h0m0 1h0m-1 1h0m1 1h0m-1 0h0m2 2h0m-2 6h0m1 1h0m2 5h0m-4 48h0m0 4h0m-1 3h0m3 1h0m-2 1h0m3 0h0m0 1h0m-3 1h0m2 2h0m-3 0h0m4 0h0m1 1h0m-5 1h0m4 5h0m-2 8h0m8-132h0m0 1h0m0 3h0m0 1h0m0 1h0m0 2h0m0 4h0m0 1h0m0 3h0m0 4h0m0 1h0m0 1h0m0 2h0m1 1h0m0 2h0m0 1h0m-1 0h0m-1 1h0m2 0h0m0 1h0m-2 0h0m1 3h0m-1 1h0m2 1h0m-1 1h0m-4 4h0m4 0h0m1 0h0m-2 1h0m2 1h0m-1 0h0m1 5h0m-1 0h0m1 4h0m-4 1h0m4 0h0m0 1h0m0 1h0m-5 0h0m5 2h0m-2 2h0m-1 40h0m1 0h0m2 1h0m-3 1h0m1 0h0m0 2h0m-1 1h0m0 1h0m1 2h0m0 1h0m0 1h0m-1 1h0m0 1h0m-1 0h0m-1 3h0m3 0h0m-1 1h0m3 0h0m-2 4h0m-2 0h0m0 1h0m1 0h0m0 2h0m0 2h0m-2 0h0m7-84h0m4 6h0m-5 1h0m0 3h0m0 49h0m1 3h0m-1 2h0m0 1h0m0 1h0m0 3h0m3 3h0m1 1h0m-2 0h0m-1 2h0m3 4h0m0 2h0m0 2h0m0 1h0m5-123h0m0 1h0m1 1h0m-3 0h0m2 0h0m0 1h0m1 1h0m-1 1h0m1 1h0m0 2h0m-1 3h0m-2 0h0m3 1h0m0 4h0m-3 2h0m3 0h0m-1 1h0m0 1h0m0 1h0m-2 0h0m0 1h0m3 3h0m0 1h0m-1 2h0m1 0h0m0 1h0m-3 1h0m2 1h0m-2 0h0m3 1h0m-4 0h0m1 1h0m-1 1h0m1 0h0m0 1h0m2 0h0m-2 2h0m-1 0h0m1 1h0m1 0h0m1 2h0m-2 0h0m2 1h0m-2 3h0m2 0h0m-2 1h0m3 0h0m-1 1h0m-3 0h0m3 2h0m1 0h0m-4 1h0m1 0h0m3 1h0m-4 0h0m0 1h0m2 0h0m1 0h0m1 0h0m0 1h0m1 1h0m-2 0h0m-2 0h0m0 1h0m1 0h0m3 1h0m-2 1h0m-1 0h0m-1 0h0m3 1h0m-4 1h0m0 1h0m5 2h0m-2 1h0m-2 46h0m4 3h0m-3 1h0m-2 1h0m3 1h0m2 0h0m0 1h0m-4 2h0m2 2h0m-1 5h0m7-112h0m0 1h0m0 2h0m0 1h0m0 4h0m-1 2h0m1 0h0m0 1h0m0 3h0m1 1h0m-1 0h0m1 2h0m-1 1h0m0 7h0m-1 1h0m0 1h0m0 1h0m3 2h0m-3 1h0m0 2h0m3 1h0m-4 1h0m4 2h0m-5 58h0m4 0h0m-4 1h0m1 3h0m-1 0h0m0 5h0m0 1h0m0 7h0m0 1h0m0 12h0m9-138h0m2 1h0m-2 0h0m2 1h0m-2 4h0m0 1h0m0 2h0m2 1h0m-2 0h0m0 1h0m2 1h0m-2 0h0m0 1h0m2 3h0m-2 0h0m0 1h0m-1 0h0m3 0h0m-3 1h0m1 0h0m0 2h0m0 1h0m0 1h0m0 2h0m2 0h0m0 1h0m-2 1h0m1 3h0m1 0h0m-1 1h0m-1 2h0m2 0h0m-1 1h0m1 1h0m-1 0h0m1 1h0m-3 0h0m-2 1h0m5 0h0m0 1h0m-2 1h0m-1 0h0m2 0h0m-2 1h0m1 1h0m-3 0h0m5 4h0m-3 0h0m-2 1h0m1 0h0m4 0h0m-2 1h0m2 1h0m0 1h0m-1 1h0m1 0h0m0 1h0m-4 31h0m1 2h0m-1 1h0m3 0h0m-3 1h0m4 1h0m-3 1h0m0 1h0m2 0h0m1 1h0m-3 1h0m0 1h0m2 3h0m-2 0h0m-1 1h0m0 1h0m0 1h0m0 1h0m4 0h0m-3 3h0m0 1h0m-1 1h0m1 2h0m0 1h0m-1 5h0m0 1h0m3 1h0m-3 0h0m1 2h0m-1 1h0m1 0h0m-1 1h0m1 4h0m0 5h0m-1 1h0m8-87h0m0 3h0m2 6h0m-3 1h0m-2 0h0m0 1h0m5 0h0m-5 29h0m0 2h0m0 4h0m1 6h0m0 2h0m0 1h0m-1 3h0m0 1h0m0 2h0m4 2h0m1 1h0m0 1h0m-5 0h0m1 0h0m4 1h0m0 1h0m-4 1h0m4 0h0m-1 0h0m-2 1h0m-1 0h0m2 1h0m0 2h0m2 2h0m-2 0h0m1 2h0m1 2h0m-1 1h0m0 3h0m0 5h0m0 2h0m0 2h0m0 2h0m-1 2h0m6-133h0m0 2h0m0 2h0m-1 2h0m1 3h0m0 2h0m-1 1h0m0 2h0m0 1h0m1 0h0m-1 1h0m1 1h0m0 1h0m0 2h0m-1 2h0m1 2h0m-1 1h0m0 3h0m0 1h0m1 1h0m-2 0h0m2 1h0m-1 0h0m1 2h0m1 1h0m-1 0h0m0 1h0m-1 1h0m2 1h0m-2 1h0m-2 0h0m3 0h0m-3 5h0m1 0h0m3 0h0m0 1h0m-2 0h0m-2 0h0m5 2h0m-4 0h0m-1 0h0m3 1h0m-2 3h0m4 45h0m-1 0h0m-2 2h0m2 1h0m-4 0h0m5 2h0m-1 2h0m-4 3h0m5 2h0m-5 0h0m5 1h0m-5 1h0m0 10h0m1 17h0m9-107h0m-1 2h0m1 2h0m0 3h0m-1 1h0m1 0h0m1 3h0m-3 2h0m1 3h0m1 57h0m-4 1h0m4 0h0m-2 1h0m-2 0h0m0 1h0m3 0h0m-2 0h0m-1 2h0m0 1h0m1 1h0m-1 0h0m3 0h0m-3 2h0m3 1h0m-1 0h0m-1 0h0m-1 0h0m0 1h0m0 1h0m4 0h0m-4 1h0m3 1h0m2 1h0m-5 2h0m3 5h0m0 2h0m4-128h0m0 1h0m0 1h0m4 2h0m-3 0h0m-1 1h0m1 1h0m-1 0h0m1 1h0m0 1h0m-1 1h0m0 2h0m3 1h0m-3 3h0m4 1h0m0 1h0m-3 0h0m3 2h0m-4 1h0m4 2h0m-3 1h0m-1 0h0m4 0h0m-3 2h0m-1 0h0m0 1h0m0 1h0m1 1h0m3 0h0m0 1h0m-3 0h0m-1 2h0m1 1h0m-1 0h0m1 2h0m3 1h0m-4 0h0m0 1h0m4 1h0m-3 0h0m3 1h0m-1 1h0m-2 3h0m3 1h0m-1 0h0m0 3h0m-2 2h0m1 1h0m0 57h0m1 0h0m-1 1h0m2 1h0m-2 2h0m-3 9h0m6-87h0m2 1h0m3 7h0m-4 7h0m2 1h0m-3 1h0m3 2h0m2 38h0m0 2h0m0 2h0m0 2h0m0 4h0m0 2h0m0 1h0m-4 1h0m4 2h0m0 1h0m-3 1h0m2 2h0m1 0h0m-1 2h0m0 1h0m1 0h0m-2 3h0m-3 1h0m4 1h0m1 1h0m-1 3h0m0 1h0m-4 2h0m4 1h0m-4 0h0m4 4h0m3-129h0m0 1h0m0 2h0m0 1h0m-1 2h0m1 4h0m1 0h0m-1 3h0m0 2h0m0 2h0m0 1h0m0 1h0m0 3h0m0 1h0m-1 1h0m2 0h0m0 5h0m-2 1h0m2 3h0m-1 0h0m-1 4h0m5 0h0m-3 1h0m-2 0h0m4 2h0m-4 0h0m1 1h0m1 1h0m-2 2h0m5 2h0m0 1h0m-4 1h0m3 1h0m-4 1h0m1 2h0m1 38h0m0 1h0m0 1h0m1 1h0m-3 0h0m3 1h0m0 1h0m0 2h0m-3 2h0m3 1h0m0 1h0m-3 2h0m2 3h0m2 1h0m0 4h0m-1 4h0m-1 3h0m7-112h0m0 2h0m0 4h0m0 2h0m0 1h0m0 9h0m0 2h0m0 2h0m0 2h0m-1 1h0m1 3h0m0 1h0m0 1h0m0 3h0m0 1h0m0 1h0m0 1h0m0 2h0m-1 5h0m0 1h0m2 54h0m1 2h0m-4 4h0m0 1h0m3 2h0m-3 0h0m0 1h0m-1 4h0m0 3h0m0 1h0m2 1h0m-2 2h0m7-124h0m0 1h0m-1 0h0m0 1h0m5 2h0m-5 1h0m1 1h0m-1 1h0m5 4h0m-4 2h0m-1 0h0m1 1h0m4 0h0m-4 1h0m-1 1h0m5 0h0m-5 3h0m5 2h0m0 1h0m-4 0h0m4 1h0m0 2h0m-4 0h0m0 1h0m4 1h0m-4 0h0m-1 0h0m1 1h0m-1 0h0m5 2h0m-4 2h0m4 0h0m-5 0h0m5 1h0m-4 0h0m2 3h0m-3 1h0m5 0h0m0 2h0m0 1h0m-4 0h0m0 2h0m4 1h0m-4 1h0m3 0h0m0 3h0m-4 0h0m4 1h0m-3 0h0m0 1h0m3 2h0m0 1h0m-4 1h0m4 0h0m0 1h0m-3 1h0m2 38h0m-1 1h0m1 0h0m1 0h0m-1 2h0m2 1h0m-2 1h0m0 1h0m1 0h0m-1 1h0m1 1h0m-1 1h0m0 1h0m0 1h0m1 1h0m-2 0h0m2 1h0m-2 0h0m0 1h0m0 1h0m2 0h0m-2 3h0m0 2h0m1 1h0m0 1h0m-1 0h0m1 2h0m-1 0h0m0 6h0m0 7h0m9-128h0m0 2h0m0 7h0m0 5h0m0 3h0m0 1h0m0 8h0m0 1h0m-3 9h0m1 0h0m2 1h0m0 1h0m0 3h0m-5 1h0m3 4h0m2 1h0m0 1h0m-2 3h0m2 1h0m0 1h0m0 1h0m-3 1h0m3 0h0m-1 1h0m-1 1h0m0 1h0m0 1h0m-1 2h0m0 1h0m0 1h0m-2 28h0m0 3h0m0 2h0m0 5h0m1 2h0m0 1h0m-1 1h0m3 2h0m-2 0h0m0 1h0m3 4h0m-4 0h0m2 0h0m2 1h0m1 1h0m-1 3h0m-1 1h0m1 3h0m1 0h0m-3 3h0m2 1h0m0 4h0m1 2h0m1-133h0m0 1h0m0 3h0m0 1h0m0 1h0m0 1h0m0 3h0m0 1h0m0 1h0m0 1h0m0 2h0m0 3h0m3 1h0m-3 1h0m0 2h0m0 6h0m1 1h0m1 1h0m0 1h0m-2 0h0m0 2h0m1 1h0m-1 1h0m0 5h0m2 1h0m-1 4h0m3 1h0m-2 0h0m-1 0h0m0 2h0m-1 0h0m2 2h0m-1 1h0m4 0h0m-4 1h0m-1 1h0m4 2h0m-3 3h0m0 2h0m0 1h0m0 3h0m0 2h0m0 42h0m1 1h0m0 1h0m2 1h0m-2 1h0m2 0h0m-3 1h0m4 1h0m-4 3h0m1 2h0m2 2h0m-3 0h0m10-122h0m0 3h0m0 5h0m0 4h0m0 1h0m0 1h0m0 6h0m0 2h0m0 1h0m0 2h0m-2 2h0m2 0h0m0 1h0m0 1h0m-1 2h0m1 1h0m-1 6h0m-2 1h0m3 0h0m-3 1h0m2 0h0m0 3h0m-2 2h0m0 1h0m1 0h0m-1 2h0m2 1h0m-1 1h0m1 1h0m-2 0h0m3 1h0m-4 1h0m2 3h0m0 51h0m-3 1h0m1 1h0m2 2h0m-3 2h0m3 1h0m-1 4h0m-2 1h0m4 1h0m-1 8h0m3-128h0m5 0h0m-5 6h0m5 6h0m0 7h0m0 2h0m-5 4h0m3 4h0m-3 3h0m0 2h0m5 3h0m0 1h0m-1 3h0m-4 1h0m4 0h0m1 1h0m-5 0h0m0 1h0m5 0h0m0 1h0m0 1h0m-1 0h0m-3 0h0m3 1h0m1 1h0m0 2h0m-5 0h0m3 1h0m0 4h0m0 52h0m1 2h0m-3 0h0m3 1h0m-3 2h0m2 1h0m-1 0h0m0 1h0m1 0h0m-1 1h0m0 2h0m3 0h0m-4 2h0m1 1h0m3 0h0m-3 2h0m-1 5h0m1 0h0m9-127h0m-1 1h0m1 0h0m-1 1h0m1 0h0m-1 1h0m0 2h0m1 1h0m0 2h0m-1 0h0m0 1h0m1 5h0m0 4h0m-1 3h0m1 3h0m-1 0h0m1 2h0m0 1h0m-1 0h0m1 1h0m-1 0h0m1 1h0m-5 1h0m5 0h0m-5 3h0m4 1h0m1 1h0m0 1h0m0 1h0m-1 0h0m1 4h0m0 1h0m-3 2h0m2 0h0m-3 1h0m-1 0h0m5 0h0m0 1h0m0 1h0m-5 0h0m5 1h0m-5 1h0m0 1h0m1 0h0m2 0h0m-3 1h0m0 1h0m3 2h0m1 2h0m1 2h0m-2 2h0m1 3h0m0 1h0m0 1h0m-1 2h0m2 1h0m0 3h0m-1 1h0m1 1h0m-2 1h0m1 0h0m0 2h0m-1 1h0m2 0h0m-1 2h0m1 1h0m-2 2h0m1 0h0m0 2h0m1 2h0m-1 3h0m-1 1h0m1 0h0m0 2h0m-1 4h0m0 3h0m0 1h0m2 0h0m-3 1h0m1 0h0m-1 1h0m0 4h0m2 1h0m-2 0h0m-2 2h0m1 2h0m2 0h0m-2 3h0m2 1h0m4-101h0m0 1h0m0 4h0m0 7h0m0 2h0m1 1h0m-1 2h0m0 2h0m0 6h0m-1 2h0m1 0h0m0 1h0m0 4h0m0 1h0m1 0h0m-1 2h0m-1 2h0m2 3h0m0 3h0m1 1h0m0 2h0m-2 0h0m2 1h0m-3 0h0m1 2h0m-1 0h0m3 0h0m0 1h0m0 3h0m0 3h0m-3 1h0m3 0h0m0 1h0m0 1h0m-1 2h0m1 3h0m-3 0h0m2 1h0m1 0h0m-1 1h0m-2 0h0m0 1h0m0 2h0m3 0h0m-3 1h0m3 0h0m-1 1h0m-2 0h0m0 1h0m1 1h0m-1 0h0m3 0h0m0 1h0m0 1h0m-3 0h0m2 1h0m0 1h0m-2 0h0m0 2h0m1 2h0m1 0h0m1 0h0m-1 2h0m-2 0h0m2 2h0m1 0h0m-1 2h0m1 0h0m-1 1h0m-2 0h0m2 2h0m-2 0h0m2 7h0m0 4h0m0 3h0m0 4h0m-1 3h0"/>
<rect x="103.1" y="499" width="1257.2" height="48.7" fill="#f00" fill-opacity="0.1" stroke="#f00" stroke-opacity="0.1" stroke-width="1"/>
<path d="M160.7 516.5H733.5 M730.6 528.5H1303.9" stroke="#ffa500" stroke-width="2.78" fill="none"/>
<path d="M104.1 522.9H1360" stroke="#f00" stroke-width="2.08" fill="none"/>
<path class="pv" d="M162.0 666.5V380.5"/><path class="pv" d="M732.0 666.5V380.5"/><path class="pv" d="M1303.0 666.5V380.5"/>
<rect x="162.1" y="495" width="569.9" height="42.8" fill="#ffa500" fill-opacity="0.1"/><rect x="732.0" y="498" width="570.6" height="59.5" fill="#ffa500" fill-opacity="0.1"/>
</g>
<rect class="sp" x="105.5" y="380.5" width="1380.0" height="286.0"/>
<path class="tk" d="M162.5 666.5v4.9M395.5 666.5v4.9M628.5 666.5v4.9M861.5 666.5v4.9M1094.5 666.5v4.9M1327.5 666.5v4.9"/><text class="n" x="163.1" y="686.8" text-anchor="middle">0</text><text class="n" x="394.7" y="686.8" text-anchor="middle">10000</text><text class="n" x="627.7" y="686.8" text-anchor="middle">20000</text><text class="n" x="860.7" y="686.8" text-anchor="middle">30000</text><text class="n" x="1093.7" y="686.8" text-anchor="middle">40000</text><text class="n" x="1326.7" y="686.8" text-anchor="middle">50000</text>
<path class="tk" d="M105.5 392.5h-4.9M105.5 426.5h-4.9M105.5 461.5h-4.9M105.5 495.5h-4.9M105.5 530.5h-4.9M105.5 564.5h-4.9M105.5 599.5h-4.9M105.5 633.5h-4.9"/><text x="95.4" y="397.1" text-anchor="end">9.58</text><text x="95.4" y="432.1" text-anchor="end">9.56</text><text x="95.4" y="466.1" text-anchor="end">9.54</text><text x="95.4" y="501.1" text-anchor="end">9.52</text><text x="95.4" y="535.1" text-anchor="end">9.50</text><text x="95.4" y="570.1" text-anchor="end">9.48</text><text x="95.4" y="604.1" text-anchor="end">9.46</text><text x="95.4" y="639.1" text-anchor="end">9.44</text>
<text class="t" x="795" y="372" text-anchor="middle">Magnitude Estimates</text>
<text x="447.3" y="656.8" text-anchor="middle">4683</text><text x="1017.3" y="636.8" text-anchor="middle">4684</text>
<rect class="lg" x="1365.5" y="387.4" width="113.1" height="48.0" rx="2.8" ry="2.8"/><path d="M1369 399.7h30.9" stroke="#ffa500" stroke-width="2.78" fill="none"/><path d="M1369 422h30" stroke="#f00" stroke-width="2.08" fill="none"/><text x="1410" y="404.3">mag<tspan class="sub" dy="1.6" dx="-1.1">OBSID</tspan></text><text x="1409.2" y="426.9">mag</text>
<rect class="lg" x="1347.9" y="613.3" width="130.7" height="46.0" rx="2.8" ry="2.8"/><path class="do" style="stroke-width:3.7" d="M1367.4 626.4h0"/><text x="1392.4" y="629.6">Highlighted</text><path class="dk" style="stroke-width:3.7" d="M1367.4 647.4h0"/><text x="1392.4" y="650.6">OK</text>
<!-- panel 3: flags -->
<g clip-path="url(#c3)">
<path class="gr" d="M105.1 921.5H1485.0M105.1 889.5H1485.0M105.1 856.5H1485.0M105.1 823.5H1485.0M105.1 791.5H1485.0M105.1 758.5H1485.0"/>
<path d="M186.5 889.5a.9 .9 0 1 0 1.8 0a.9 .9 0 1 0-1.8 0zM192.5 889.5a.9 .9 0 1 0 1.8 0a.9 .9 0 1 0-1.8 0zM219.3 889.5a.9 .9 0 1 0 1.8 0a.9 .9 0 1 0-1.8 0zM220.7 889.5a.9 .9 0 1 0 1.8 0a.9 .9 0 1 0-1.8 0zM226.6 889.5a.9 .9 0 1 0 1.8 0a.9 .9 0 1 0-1.8 0zM253.5 889.5a.9 .9 0 1 0 1.8 0a.9 .9 0 1 0-1.8 0zM272.5 889.5a.9 .9 0 1 0 1.8 0a.9 .9 0 1 0-1.8 0zM295.5 889.5a.9 .9 0 1 0 1.8 0a.9 .9 0 1 0-1.8 0zM316.5 889.5a.9 .9 0 1 0 1.8 0a.9 .9 0 1 0-1.8 0zM342.5 889.5a.9 .9 0 1 0 1.8 0a.9 .9 0 1 0-1.8 0zM349.9 889.5a.9 .9 0 1 0 1.8 0a.9 .9 0 1 0-1.8 0zM351.1 889.5a.9 .9 0 1 0 1.8 0a.9 .9 0 1 0-1.8 0zM371.5 889.5a.9 .9 0 1 0 1.8 0a.9 .9 0 1 0-1.8 0zM401.5 889.5a.9 .9 0 1 0 1.8 0a.9 .9 0 1 0-1.8 0zM416.5 889.5a.9 .9 0 1 0 1.8 0a.9 .9 0 1 0-1.8 0zM426.5 889.5a.9 .9 0 1 0 1.8 0a.9 .9 0 1 0-1.8 0zM432.6 889.5a.9 .9 0 1 0 1.8 0a.9 .9 0 1 0-1.8 0zM490.5 889.5a.9 .9 0 1 0 1.8 0a.9 .9 0 1 0-1.8 0zM491.9 889.5a.9 .9 0 1 0 1.8 0a.9 .9 0 1 0-1.8 0zM495.9 889.5a.9 .9 0 1 0 1.8 0a.9 .9 0 1 0-1.8 0zM497.5 889.5a.9 .9 0 1 0 1.8 0a.9 .9 0 1 0-1.8 0zM537.5 889.5a.9 .9 0 1 0 1.8 0a.9 .9 0 1 0-1.8 0zM580.5 889.5a.9 .9 0 1 0 1.8 0a.9 .9 0 1 0-1.8 0zM604.4 889.5a.9 .9 0 1 0 1.8 0a.9 .9 0 1 0-1.8 0zM643.4 889.5a.9 .9 0 1 0 1.8 0a.9 .9 0 1 0-1.8 0zM697.5 889.5a.9 .9 0 1 0 1.8 0a.9 .9 0 1 0-1.8 0zM818.5 889.5a.9 .9 0 1 0 1.8 0a.9 .9 0 1 0-1.8 0zM819.7 889.5a.9 .9 0 1 0 1.8 0a.9 .9 0 1 0-1.8 0zM825.5 889.5a.9 .9 0 1 0 1.8 0a.9 .9 0 1 0-1.8 0zM864.5 889.5a.9 .9 0 1 0 1.8 0a.9 .9 0 1 0-1.8 0zM866.3 889.5a.9 .9 0 1 0 1.8 0a.9 .9 0 1 0-1.8 0zM889.5 889.5a.9 .9 0 1 0 1.8 0a.9 .9 0 1 0-1.8 0zM962.5 889.5a.9 .9 0 1 0 1.8 0a.9 .9 0 1 0-1.8 0zM964.5 889.5a.9 .9 0 1 0 1.8 0a.9 .9 0 1 0-1.8 0zM972.4 889.5a.9 .9 0 1 0 1.8 0a.9 .9 0 1 0-1.8 0zM987.5 889.5a.9 .9 0 1 0 1.8 0a.9 .9 0 1 0-1.8 0zM991.5 889.5a.9 .9 0 1 0 1.8 0a.9 .9 0 1 0-1.8 0zM1034.6 889.5a.9 .9 0 1 0 1.8 0a.9 .9 0 1 0-1.8 0zM1060.5 889.5a.9 .9 0 1 0 1.8 0a.9 .9 0 1 0-1.8 0zM1088.5 889.5a.9 .9 0 1 0 1.8 0a.9 .9 0 1 0-1.8 0zM1123.5 889.5a.9 .9 0 1 0 1.8 0a.9 .9 0 1 0-1.8 0zM1125.5 889.5a.9 .9 0 1 0 1.8 0a.9 .9 0 1 0-1.8 0zM1176.5 889.5a.9 .9 0 1 0 1.8 0a.9 .9 0 1 0-1.8 0zM1187.5 889.5a.9 .9 0 1 0 1.8 0a.9 .9 0 1 0-1.8 0zM1235.5 889.5a.9 .9 0 1 0 1.8 0a.9 .9 0 1 0-1.8 0zM1246.1 889.5a.9 .9 0 1 0 1.8 0a.9 .9 0 1 0-1.8 0zM1247.7 889.5a.9 .9 0 1 0 1.8 0a.9 .9 0 1 0-1.8 0zM1297.5 889.5a.9 .9 0 1 0 1.8 0a.9 .9 0 1 0-1.8 0zM186.5 856.5a.9 .9 0 1 0 1.8 0a.9 .9 0 1 0-1.8 0zM192.5 856.5a.9 .9 0 1 0 1.8 0a.9 .9 0 1 0-1.8 0zM219.3 856.5a.9 .9 0 1 0 1.8 0a.9 .9 0 1 0-1.8 0zM220.7 856.5a.9 .9 0 1 0 1.8 0a.9 .9 0 1 0-1.8 0zM226.6 856.5a.9 .9 0 1 0 1.8 0a.9 .9 0 1 0-1.8 0zM253.5 856.5a.9 .9 0 1 0 1.8 0a.9 .9 0 1 0-1.8 0zM272.5 856.5a.9 .9 0 1 0 1.8 0a.9 .9 0 1 0-1.8 0zM295.5 856.5a.9 .9 0 1 0 1.8 0a.9 .9 0 1 0-1.8 0zM316.5 856.5a.9 .9 0 1 0 1.8 0a.9 .9 0 1 0-1.8 0zM342.5 856.5a.9 .9 0 1 0 1.8 0a.9 .9 0 1 0-1.8 0zM349.9 856.5a.9 .9 0 1 0 1.8 0a.9 .9 0 1 0-1.8 0zM351.1 856.5a.9 .9 0 1 0 1.8 0a.9 .9 0 1 0-1.8 0zM371.5 856.5a.9 .9 0 1 0 1.8 0a.9 .9 0 1 0-1.8 0zM401.5 856.5a.9 .9 0 1 0 1.8 0a.9 .9 0 1 0-1.8 0zM416.5 856.5a.9 .9 0 1 0 1.8 0a.9 .9 0 1 0-1.8 0zM426.5 856.5a.9 .9 0 1 0 1.8 0a.9 .9 0 1 0-1.8 0zM432.6 856.5a.9 .9 0 1 0 1.8 0a.9 .9 0 1 0-1.8 0zM490.5 856.5a.9 .9 0 1 0 1.8 0a.9 .9 0 1 0-1.8 0zM491.9 856.5a.9 .9 0 1 0 1.8 0a.9 .9 0 1 0-1.8 0zM495.9 856.5a.9 .9 0 1 0 1.8 0a.9 .9 0 1 0-1.8 0zM497.5 856.5a.9 .9 0 1 0 1.8 0a.9 .9 0 1 0-1.8 0zM537.5 856.5a.9 .9 0 1 0 1.8 0a.9 .9 0 1 0-1.8 0zM580.5 856.5a.9 .9 0 1 0 1.8 0a.9 .9 0 1 0-1.8 0zM604.4 856.5a.9 .9 0 1 0 1.8 0a.9 .9 0 1 0-1.8 0zM643.4 856.5a.9 .9 0 1 0 1.8 0a.9 .9 0 1 0-1.8 0zM697.5 856.5a.9 .9 0 1 0 1.8 0a.9 .9 0 1 0-1.8 0zM818.5 856.5a.9 .9 0 1 0 1.8 0a.9 .9 0 1 0-1.8 0zM819.7 856.5a.9 .9 0 1 0 1.8 0a.9 .9 0 1 0-1.8 0zM825.5 856.5a.9 .9 0 1 0 1.8 0a.9 .9 0 1 0-1.8 0zM864.5 856.5a.9 .9 0 1 0 1.8 0a.9 .9 0 1 0-1.8 0zM866.3 856.5a.9 .9 0 1 0 1.8 0a.9 .9 0 1 0-1.8 0zM889.5 856.5a.9 .9 0 1 0 1.8 0a.9 .9 0 1 0-1.8 0zM962.5 856.5a.9 .9 0 1 0 1.8 0a.9 .9 0 1 0-1.8 0zM964.5 856.5a.9 .9 0 1 0 1.8 0a.9 .9 0 1 0-1.8 0zM972.4 856.5a.9 .9 0 1 0 1.8 0a.9 .9 0 1 0-1.8 0zM987.5 856.5a.9 .9 0 1 0 1.8 0a.9 .9 0 1 0-1.8 0zM991.5 856.5a.9 .9 0 1 0 1.8 0a.9 .9 0 1 0-1.8 0zM1034.6 856.5a.9 .9 0 1 0 1.8 0a.9 .9 0 1 0-1.8 0zM1060.5 856.5a.9 .9 0 1 0 1.8 0a.9 .9 0 1 0-1.8 0zM1088.5 856.5a.9 .9 0 1 0 1.8 0a.9 .9 0 1 0-1.8 0zM1123.5 856.5a.9 .9 0 1 0 1.8 0a.9 .9 0 1 0-1.8 0zM1125.5 856.5a.9 .9 0 1 0 1.8 0a.9 .9 0 1 0-1.8 0zM1176.5 856.5a.9 .9 0 1 0 1.8 0a.9 .9 0 1 0-1.8 0zM1187.5 856.5a.9 .9 0 1 0 1.8 0a.9 .9 0 1 0-1.8 0zM1235.5 856.5a.9 .9 0 1 0 1.8 0a.9 .9 0 1 0-1.8 0zM1246.1 856.5a.9 .9 0 1 0 1.8 0a.9 .9 0 1 0-1.8 0zM1247.7 856.5a.9 .9 0 1 0 1.8 0a.9 .9 0 1 0-1.8 0zM1297.5 856.5a.9 .9 0 1 0 1.8 0a.9 .9 0 1 0-1.8 0z" fill="#aaa" stroke="#000" stroke-width="1.15"/>
<circle cx="732.2" cy="758.5" r=".9" fill="#aaa" stroke="#000" stroke-width="1.15"/>
<path class="pv" d="M162.0 954.5V725.5"/><path class="pv" d="M732.0 954.5V725.5"/><path class="pv" d="M1303.0 954.5V725.5"/>
</g>
<g clip-path="url(#c4)">
<path class="gr" d="M105.1 1009.5H1485.0M105.1 983.5H1485.0M105.1 957.5H1485.0"/>
<path fill="#000" d="M160.5 1013V1006.1H161.5V1004.5H162.5V1005.5H163.5V1005.1H164.5V1005.0H165.5V1005.0H166.5V1003.4H167.5V1004.8H168.5V1004.6H169.5V1004.2H170.5V1003.0H171.5V1004.7H172.5V1004.8H173.5V1004.7H174.5V1004.7H175.5V1005.0H176.5V1005.4H177.5V1005.2H178.5V1005.7H179.5V1005.3H180.5V1005.4H181.5V1004.8H182.5V1005.5H183.5V1005.1H184.5V1005.1H185.5V1005.2H186.5V1005.6H187.5V1004.8H188.5V1004.7H189.5V1005.2H190.5V1004.1H191.5V1004.7H192.5V1005.2H193.5V1005.2H194.5V1005.1H195.5V1005.4H196.5V1004.3H197.5V1005.7H198.5V1005.0H199.5V1003.5H200.5V1005.5H201.5V1005.6H202.5V1005.1H203.5V1004.8H204.5V1005.1H205.5V1005.0H206.5V1005.4H207.5V1003.3H208.5V1004.9H209.5V1005.2H210.5V1004.7H211.5V1004.5H212.5V1005.1H213.5V1003.3H214.5V1005.1H215.5V1004.9H216.5V1005.4H217.5V1004.5H218.5V1004.8H219.5V1005.6H220.5V1004.8H221.5V1005.3H222.5V1004.9H223.5V1005.4H224.5V1004.3H225.5V1004.6H226.5V1005.1H227.5V1005.2H228.5V1004.0H229.5V1004.6H230.5V1005.0H231.5V1004.7H232.5V1005.5H233.5V1004.7H234.5V1003.6H235.5V1003.3H236.5V1005.8H237.5V1005.4H238.5V1005.3H239.5V1003.0H240.5V1005.9H241.5V1005.5H242.5V1005.5H243.5V1005.5H244.5V1005.1H245.5V1004.7H246.5V1004.6H247.5V1004.5H248.5V1005.3H249.5V1004.3H250.5V1004.7H251.5V1004.8H252.5V1003.4H253.5V1005.3H254.5V1004.8H255.5V1004.7H256.5V1005.4H257.5V1005.8H258.5V1005.7H259.5V1005.4H260.5V1003.8H261.5V1005.3H262.5V1005.1H263.5V1005.3H264.5V1004.7H265.5V1004.9H266.5V1004.8H267.5V1005.0H268.5V1003.8H269.5V1005.7H270.5V1005.4H271.5V1004.5H272.5V1004.4H273.5V1005.1H274.5V1005.1H275.5V1005.5H276.5V1004.6H277.5V1005.8H278.5V1005.8H279.5V1004.9H280.5V1004.9H281.5V1004.9H282.5V1005.1H283.5V1005.2H284.5V1005.6H285.5V1004.8H286.5V1005.1H287.5V1004.9H288.5V1005.4H289.5V1005.1H290.5V1005.4H291.5V1004.7H292.5V1003.6H293.5V1004.9H294.5V1005.8H295.5V1005.6H296.5V1005.3H297.5V1005.2H298.5V1005.5H299.5V1005.1H300.5V1004.9H301.5V1005.3H302.5V1005.9H303.5V1004.9H304.5V1004.7H305.5V1004.4H306.5V1004.3H307.5V1005.0H308.5V1005.1H309.5V1004.9H310.5V1005.1H311.5V1005.1H312.5V1005.2H313.5V1004.7H314.5V1005.2H315.5V1005.4H316.5V1005.1H317.5V1005.2H318.5V1005.1H319.5V1005.2H320.5V1005.5H321.5V1004.1H322.5V1004.9H323.5V1005.2H324.5V1005.1H325.5V1005.4H326.5V1004.1H327.5V1005.1H328.5V1004.7H329.5V1005.0H330.5V1005.3H331.5V1005.5H332.5V1005.6H333.5V1005.4H334.5V1005.9H335.5V1005.3H336.5V1004.0H337.5V1005.6H338.5V1005.1H339.5V1006.0H340.5V1005.5H341.5V1005.8H342.5V1004.9H343.5V1004.7H344.5V1004.9H345.5V1005.1H346.5V1004.6H347.5V1005.0H348.5V1004.4H349.5V1005.6H350.5V1004.0H351.5V1005.6H352.5V1004.6H353.5V1005.0H354.5V1005.1H355.5V1005.0H356.5V1005.4H357.5V1005.2H358.5V1005.3H359.5V1005.4H360.5V1005.7H361.5V1005.1H362.5V1005.0H363.5V1004.7H364.5V1004.2H365.5V1005.1H366.5V1004.2H367.5V1005.1H368.5V1004.4H369.5V1005.4H370.5V1005.1H371.5V1004.9H372.5V1005.4H373.5V1004.7H374.5V1005.3H375.5V1005.4H376.5V1005.3H377.5V1005.2H378.5V1004.9H379.5V1005.1H380.5V1004.3H381.5V1004.9H382.5V1004.5H383.5V1005.2H384.5V1005.2H385.5V1004.1H386.5V1004.9H387.5V1004.9H388.5V1004.6H389.5V1005.3H390.5V1005.0H391.5V1004.7H392.5V1005.3H393.5V1005.3H394.5V1005.4H395.5V1005.0H396.5V1004.9H397.5V1004.9H398.5V1004.8H399.5V1003.1H400.5V1005.0H401.5V1004.7H402.5V1005.5H403.5V1004.9H404.5V1004.4H405.5V1004.6H406.5V1004.9H407.5V1005.8H408.5V1005.0H409.5V1003.9H410.5V1005.4H411.5V1005.3H412.5V1005.7H413.5V1005.2H414.5V1005.7H415.5V1005.4H416.5V1005.5H417.5V1004.8H418.5V1005.7H419.5V1005.0H420.5V1004.3H421.5V1004.5H422.5V1004.6H423.5V1005.0H424.5V1005.2H425.5V1005.1H426.5V1005.3H427.5V1005.3H428.5V1005.1H429.5V1005.5H430.5V1005.5H431.5V1005.3H432.5V1003.9H433.5V1005.8H434.5V1005.5H435.5V1005.2H436.5V1005.5H437.5V1005.8H438.5V1005.0H439.5V1003.5H440.5V1004.9H441.5V1005.3H442.5V1004.2H443.5V1004.9H444.5V1005.2H445.5V1004.6H446.5V1005.5H447.5V1005.2H448.5V1005.0H449.5V1005.3H450.5V1004.8H451.5V1005.2H452.5V1006.0H453.5V1005.1H454.5V1006.0H455.5V1005.3H456.5V1005.6H457.5V1005.1H458.5V1004.2H459.5V1004.7H460.5V1004.9H461.5V1004.4H462.5V1004.3H463.5V1004.9H464.5V1004.6H465.5V1003.4H466.5V1004.8H467.5V1005.4H468.5V1005.0H469.5V1005.2H470.5V1005.9H471.5V1005.4H472.5V1005.0H473.5V1004.9H474.5V1005.3H475.5V1005.6H476.5V1005.3H477.5V1004.3H478.5V1004.8H479.5V1005.0H480.5V1003.8H481.5V1004.7H482.5V1004.4H483.5V1004.3H484.5V1004.7H485.5V1004.6H486.5V1003.9H487.5V1005.4H488.5V1005.2H489.5V1006.3H490.5V1005.7H491.5V1005.2H492.5V1005.7H493.5V1005.5H494.5V1005.1H495.5V1005.6H496.5V1002.9H497.5V1003.9H498.5V1005.2H499.5V1004.6H500.5V1005.3H501.5V1004.6H502.5V1004.4H503.5V1005.4H504.5V1004.6H505.5V1005.1H506.5V1005.6H507.5V1005.2H508.5V1005.3H509.5V1003.7H510.5V1005.7H511.5V1005.1H512.5V1005.6H513.5V1005.5H514.5V1006.1H515.5V1005.0H516.5V1004.7H517.5V1005.2H518.5V1004.8H519.5V1004.9H520.5V1004.9H521.5V1003.6H522.5V1004.6H523.5V1004.9H524.5V1004.1H525.5V1004.8H526.5V1005.7H527.5V1005.0H528.5V1005.1H529.5V1004.9H530.5V1005.6H531.5V1005.5H532.5V1004.9H533.5V1004.2H534.5V1003.5H535.5V1005.4H536.5V1004.8H537.5V1005.5H538.5V1005.0H539.5V1004.8H540.5V1004.6H541.5V1004.7H542.5V1005.2H543.5V1004.8H544.5V1005.4H545.5V1003.5H546.5V1004.4H547.5V1005.6H548.5V1005.3H549.5V1004.7H550.5V1005.5H551.5V1005.7H552.5V1005.4H553.5V1005.4H554.5V1005.0H555.5V1003.9H556.5V1004.6H557.5V1005.4H558.5V1004.9H559.5V1003.8H560.5V1004.3H561.5V1004.8H562.5V1005.4H563.5V1005.1H564.5V1004.8H565.5V1005.7H566.5V1005.8H567.5V1005.7H568.5V1005.7H569.5V1005.8H570.5V1005.6H571.5V1005.6H572.5V1005.0H573.5V1005.7H574.5V1005.2H575.5V1005.7H576.5V1004.2H577.5V1005.1H578.5V1005.2H579.5V1004.7H580.5V1005.0H581.5V1005.1H582.5V1005.1H583.5V1004.8H584.5V1005.1H585.5V1005.6H586.5V1005.7H587.5V1005.4H588.5V1005.4H589.5V1005.5H590.5V1005.7H591.5V1005.0H592.5V1003.5H593.5V1005.2H594.5V1004.7H595.5V1004.8H596.5V1004.9H597.5V1005.0H598.5V1004.4H599.5V1005.1H600.5V1004.2H601.5V1005.1H602.5V1004.4H603.5V1004.6H604.5V1005.4H605.5V1005.1H606.5V1005.1H607.5V1005.2H608.5V1005.6H609.5V1005.4H610.5V1005.3H611.5V1005.7H612.5V1004.9H613.5V1004.9H614.5V1004.8H615.5V1004.6H616.5V1004.5H617.5V1005.3H618.5V1004.8H619.5V1004.8H620.5V1005.2H621.5V1003.1H622.5V1005.3H623.5V1005.4H624.5V1004.4H625.5V1005.3H626.5V1005.3H627.5V1006.0H628.5V1006.3H629.5V1005.3H630.5V1004.4H631.5V1004.4H632.5V1005.2H633.5V1005.1H634.5V1004.6H635.5V1005.2H636.5V1002.4H637.5V1004.7H638.5V1004.9H639.5V1004.4H640.5V1003.7H641.5V1005.4H642.5V1004.6H643.5V1004.7H644.5V1005.5H645.5V1005.3H646.5V1005.0H647.5V1005.3H648.5V1005.4H649.5V1005.3H650.5V1004.2H651.5V1005.3H652.5V1005.7H653.5V1005.5H654.5V1004.6H655.5V1005.2H656.5V1005.3H657.5V1005.0H658.5V1004.4H659.5V1005.2H660.5V1005.0H661.5V1005.6H662.5V1005.2H663.5V1004.9H664.5V1004.9H665.5V1005.3H666.5V1005.5H667.5V1004.6H668.5V1005.5H669.5V1005.2H670.5V1005.3H671.5V1005.1H672.5V1005.1H673.5V1005.6H674.5V1004.7H675.5V1004.8H676.5V1004.7H677.5V1005.0H678.5V1003.9H679.5V1004.7H680.5V1005.0H681.5V1005.3H682.5V1004.6H683.5V1005.1H684.5V1003.1H685.5V1005.6H686.5V1005.9H687.5V1005.5H688.5V1005.4H689.5V1005.4H690.5V1002.9H691.5V1005.0H692.5V1004.9H693.5V1005.0H694.5V1004.8H695.5V1004.4H696.5V1005.2H697.5V1005.4H698.5V1004.8H699.5V1003.6H700.5V1005.1H701.5V1005.4H702.5V1004.7H703.5V1005.9H704.5V1003.6H705.5V1005.8H706.5V1005.4H707.5V1005.2H708.5V1004.4H709.5V1005.5H710.5V1004.8H711.5V1004.9H712.5V1004.8H713.5V1004.3H714.5V1005.3H715.5V1005.0H716.5V1004.8H717.5V1005.3H718.5V1004.6H719.5V1005.0H720.5V1005.7H721.5V1005.5H722.5V1004.5H723.5V1004.2H724.5V1005.0H725.5V1005.8H726.5V1005.2H727.5V1005.3H728.5V1005.5H729.5V1004.9H730.5V1005.2H731.5V1004.2H732.5V1005.1H733.5V1005.0H734.5V1004.6H735.5V1005.0H736.5V1004.7H737.5V1005.3H738.5V1005.8H739.5V1004.8H740.5V1004.4H741.5V1005.1H742.5V1005.4H743.5V1005.7H744.5V1005.8H745.5V1005.1H746.5V1005.1H747.5V1005.8H748.5V1003.9H749.5V1005.5H750.5V1005.0H751.5V1005.2H752.5V1005.1H753.5V1003.6H754.5V1005.1H755.5V1004.5H756.5V1005.0H757.5V1004.9H758.5V1005.1H759.5V1005.5H760.5V1005.1H761.5V1005.0H762.5V1005.1H763.5V1005.3H764.5V1004.9H765.5V1005.1H766.5V1005.7H767.5V1005.4H768.5V1005.1H769.5V1004.6H770.5V1005.1H771.5V1005.2H772.5V1004.2H773.5V1004.4H774.5V1005.4H775.5V1004.3H776.5V1003.6H777.5V1003.9H778.5V1004.0H779.5V1004.8H780.5V1005.2H781.5V1005.3H782.5V1005.3H783.5V1004.6H784.5V1005.7H785.5V1005.1H786.5V1005.4H787.5V1005.2H788.5V1005.4H789.5V1004.9H790.5V1004.0H791.5V1005.1H792.5V1005.3H793.5V1004.7H794.5V1005.3H795.5V1004.9H796.5V1004.0H797.5V1005.5H798.5V1003.4H799.5V1005.5H800.5V1003.8H801.5V1005.5H802.5V1003.9H803.5V1005.1H804.5V1005.8H805.5V1005.4H806.5V1005.3H807.5V1005.0H808.5V1004.8H809.5V1004.5H810.5V1004.5H811.5V1004.8H812.5V1004.5H813.5V1004.6H814.5V1004.8H815.5V1004.8H816.5V1004.9H817.5V1005.6H818.5V1005.5H819.5V1005.7H820.5V1005.3H821.5V1005.2H822.5V1004.9H823.5V1005.3H824.5V1004.6H825.5V1005.1H826.5V1005.5H827.5V1005.7H828.5V1005.4H829.5V1004.6H830.5V1005.0H831.5V1004.5H832.5V1005.1H833.5V1004.8H834.5V1005.2H835.5V1005.8H836.5V1005.3H837.5V1005.9H838.5V1004.7H839.5V1005.2H840.5V1005.8H841.5V1006.0H842.5V1005.2H843.5V1005.4H844.5V1004.8H845.5V1005.2H846.5V1005.5H847.5V1005.0H848.5V1004.8H849.5V1004.4H850.5V1005.0H851.5V1005.1H852.5V1005.0H853.5V1004.9H854.5V1004.4H855.5V1005.6H856.5V1005.0H857.5V1005.1H858.5V1005.5H859.5V1004.6H860.5V1005.3H861.5V1005.3H862.5V1005.5H863.5V1005.8H864.5V1005.5H865.5V1004.6H866.5V1005.0H867.5V1005.1H868.5V1005.0H869.5V1004.4H870.5V1004.2H871.5V1004.2H872.5V1003.6H873.5V1004.8H874.5V1004.3H875.5V1005.6H876.5V1004.1H877.5V1003.5H878.5V1006.0H879.5V1005.3H880.5V1003.8H881.5V1005.0H882.5V1005.9H883.5V1004.9H884.5V1005.3H885.5V1003.5H886.5V1004.7H887.5V1005.3H888.5V1004.4H889.5V1004.6H890.5V1004.8H891.5V1004.7H892.5V1005.0H893.5V1005.2H894.5V1004.9H895.5V1004.9H896.5V1005.0H897.5V1005.1H898.5V1005.6H899.5V1005.3H900.5V1005.5H901.5V1005.4H902.5V1005.1H903.5V1005.6H904.5V1004.9H905.5V1005.1H906.5V1005.5H907.5V1004.6H908.5V1004.8H909.5V1004.3H910.5V1004.6H911.5V1004.3H912.5V1004.7H913.5V1004.7H914.5V1004.3H915.5V1005.7H916.5V1005.3H917.5V1005.5H918.5V1005.3H919.5V1003.6H920.5V1005.1H921.5V1004.0H922.5V1005.4H923.5V1005.8H924.5V1004.5H925.5V1004.9H926.5V1005.6H927.5V1004.7H928.5V1004.6H929.5V1004.4H930.5V1003.7H931.5V1004.7H932.5V1005.6H933.5V1004.9H934.5V1004.7H935.5V1004.9H936.5V1005.2H937.5V1004.7H938.5V1005.4H939.5V1005.6H940.5V1005.5H941.5V1005.6H942.5V1004.8H943.5V1003.8H944.5V1005.6H945.5V1005.4H946.5V1004.4H947.5V1004.9H948.5V1004.8H949.5V1005.0H950.5V1004.9H951.5V1004.7H952.5V1004.0H953.5V1005.1H954.5V1005.1H955.5V1004.6H956.5V1002.7H957.5V1005.1H958.5V1004.1H959.5V1005.5H960.5V1005.6H961.5V1005.4H962.5V1005.1H963.5V1004.4H964.5V1005.5H965.5V1004.7H966.5V1005.2H967.5V1005.1H968.5V1004.9H969.5V1003.9H970.5V1004.6H971.5V1005.2H972.5V1004.6H973.5V1004.8H974.5V1004.8H975.5V1005.4H976.5V1003.9H977.5V1005.4H978.5V1005.0H979.5V1005.8H980.5V1006.0H981.5V1005.4H982.5V1003.8H983.5V1005.3H984.5V1005.8H985.5V1005.0H986.5V1004.3H987.5V1005.3H988.5V1004.8H989.5V1004.5H990.5V1004.6H991.5V1004.4H992.5V1005.0H993.5V1004.7H994.5V1005.7H995.5V1005.5H996.5V1004.8H997.5V1004.9H998.5V1005.2H999.5V1004.7H1000.5V1005.3H1001.5V1005.2H1002.5V1004.9H1003.5V1004.9H1004.5V1005.1H1005.5V1005.4H1006.5V1005.4H1007.5V1004.8H1008.5V1005.1H1009.5V1004.1H1010.5V1004.5H1011.5V1004.6H1012.5V1005.3H1013.5V1004.7H1014.5V1004.9H1015.5V1005.3H1016.5V1005.6H1017.5V1004.9H1018.5V1005.2H1019.5V1005.4H1020.5V1005.4H1021.5V1004.9H1022.5V1005.1H1023.5V1004.9H1024.5V1005.4H1025.5V1005.1H1026.5V1004.4H1027.5V1004.0H1028.5V1003.7H1029.5V1005.3H1030.5V1005.0H1031.5V1004.7H1032.5V1004.9H1033.5V1004.7H1034.5V1005.6H1035.5V1005.4H1036.5V1005.6H1037.5V1004.9H1038.5V1005.4H1039.5V1005.1H1040.5V1005.5H1041.5V1004.9H1042.5V1004.8H1043.5V1003.2H1044.5V1005.3H1045.5V1004.8H1046.5V1004.5H1047.5V1004.4H1048.5V1003.3H1049.5V1005.4H1050.5V1004.3H1051.5V1004.8H1052.5V1005.4H1053.5V1005.7H1054.5V1005.3H1055.5V1005.7H1056.5V1005.7H1057.5V1005.7H1058.5V1005.4H1059.5V1004.6H1060.5V1005.3H1061.5V1005.6H1062.5V1003.3H1063.5V1005.3H1064.5V1004.4H1065.5V1004.3H1066.5V1005.0H1067.5V1004.5H1068.5V1005.0H1069.5V1004.6H1070.5V1005.6H1071.5V1005.1H1072.5V1004.8H1073.5V1005.4H1074.5V1005.7H1075.5V1005.1H1076.5V1004.1H1077.5V1006.1H1078.5V1005.6H1079.5V1005.3H1080.5V1005.0H1081.5V1005.3H1082.5V1003.3H1083.5V1003.8H1084.5V1004.6H1085.5V1004.4H1086.5V1005.4H1087.5V1004.9H1088.5V1004.6H1089.5V1004.6H1090.5V1005.3H1091.5V1004.9H1092.5V1004.2H1093.5V1005.3H1094.5V1005.4H1095.5V1004.0H1096.5V1004.9H1097.5V1005.8H1098.5V1005.0H1099.5V1003.3H1100.5V1006.0H1101.5V1005.1H1102.5V1005.4H1103.5V1004.6H1104.5V1005.0H1105.5V1004.9H1106.5V1003.9H1107.5V1005.2H1108.5V1005.2H1109.5V1004.7H1110.5V1005.1H1111.5V1005.5H1112.5V1005.6H1113.5V1005.3H1114.5V1005.3H1115.5V1005.4H1116.5V1005.0H1117.5V1004.9H1118.5V1005.8H1119.5V1005.0H1120.5V1005.1H1121.5V1004.7H1122.5V1005.4H1123.5V1005.5H1124.5V1004.8H1125.5V1005.0H1126.5V1003.1H1127.5V1005.5H1128.5V1005.3H1129.5V1003.2H1130.5V1005.6H1131.5V1005.4H1132.5V1005.5H1133.5V1005.5H1134.5V1005.2H1135.5V1005.2H1136.5V1005.6H1137.5V1005.3H1138.5V1004.9H1139.5V1005.8H1140.5V1005.0H1141.5V1004.7H1142.5V1004.6H1143.5V1005.1H1144.5V1005.2H1145.5V1004.9H1146.5V1005.2H1147.5V1004.4H1148.5V1003.3H1149.5V1005.0H1150.5V1005.2H1151.5V1005.5H1152.5V1004.7H1153.5V1006.5H1154.5V1005.1H1155.5V1004.2H1156.5V1005.6H1157.5V1004.6H1158.5V1005.2H1159.5V1002.9H1160.5V1004.6H1161.5V1005.2H1162.5V1003.0H1163.5V1002.6H1164.5V1004.0H1165.5V1005.3H1166.5V1005.1H1167.5V1004.7H1168.5V1005.1H1169.5V1003.4H1170.5V1004.9H1171.5V1005.3H1172.5V1005.5H1173.5V1005.6H1174.5V1005.8H1175.5V1003.9H1176.5V1005.1H1177.5V1005.3H1178.5V1004.9H1179.5V1004.6H1180.5V1005.3H1181.5V1004.7H1182.5V1004.9H1183.5V1005.0H1184.5V1004.4H1185.5V1005.1H1186.5V1005.1H1187.5V1005.0H1188.5V1005.3H1189.5V1005.0H1190.5V1004.5H1191.5V1005.3H1192.5V1005.1H1193.5V1005.7H1194.5V1005.5H1195.5V1005.1H1196.5V1005.3H1197.5V1005.6H1198.5V1005.4H1199.5V1003.5H1200.5V1005.0H1201.5V1004.7H1202.5V1004.8H1203.5V1005.0H1204.5V1004.8H1205.5V1004.6H1206.5V1003.6H1207.5V1004.5H1208.5V1004.6H1209.5V1005.1H1210.5V1005.8H1211.5V1005.8H1212.5V1005.1H1213.5V1004.8H1214.5V1005.6H1215.5V1005.4H1216.5V1004.7H1217.5V1005.5H1218.5V1005.1H1219.5V1005.4H1220.5V1005.0H1221.5V1005.1H1222.5V1004.9H1223.5V1004.5H1224.5V1004.8H1225.5V1004.7H1226.5V1005.3H1227.5V1004.8H1228.5V1004.7H1229.5V1005.6H1230.5V1005.8H1231.5V1005.9H1232.5V1005.8H1233.5V1004.8H1234.5V1005.1H1235.5V1005.0H1236.5V1003.2H1237.5V1004.3H1238.5V1004.9H1239.5V1003.4H1240.5V1004.5H1241.5V1004.8H1242.5V1005.2H1243.5V1004.9H1244.5V1005.3H1245.5V1005.4H1246.5V1003.7H1247.5V1005.3H1248.5V1005.1H1249.5V1004.0H1250.5V1005.2H1251.5V1005.2H1252.5V1005.6H1253.5V1005.1H1254.5V1005.4H1255.5V1005.6H1256.5V1005.1H1257.5V1005.0H1258.5V1005.2H1259.5V1005.1H1260.5V1004.3H1261.5V1004.3H1262.5V1005.3H1263.5V1005.0H1264.5V1004.2H1265.5V1004.6H1266.5V1005.2H1267.5V1004.9H1268.5V1005.5H1269.5V1005.4H1270.5V1004.7H1271.5V1005.0H1272.5V1005.6H1273.5V1006.0H1274.5V1004.9H1275.5V1005.6H1276.5V1005.4H1277.5V1005.2H1278.5V1004.9H1279.5V1004.0H1280.5V1004.5H1281.5V1005.1H1282.5V1005.2H1283.5V1005.4H1284.5V1005.3H1285.5V1005.4H1286.5V1005.0H1287.5V1004.9H1288.5V1005.4H1289.5V1005.6H1290.5V1005.4H1291.5V1004.9H1292.5V1003.7H1293.5V1004.8H1294.5V1005.2H1295.5V1004.7H1296.5V1004.9H1297.5V1005.0H1298.5V1004.9H1299.5V1005.3H1300.5V1004.4H1301.5V1004.1H1302.5V1005.2H1303.5V1005.5H1304.5V1013Z"/>
<path d="M163.6 1010.15h3.5M169.1 1010.15h1.7M172.3 1010.15h5.4M181.3 1010.15h1.5M185.3 1010.15h2.7M190.7 1010.15h2.4M196.7 1010.15h3.2M202.6 1010.15h3.5M209.0 1010.15h4.9M215.7 1010.15h1.3M217.7 1010.15h2.7M223.5 1010.15h4.1M229.9 1010.15h1.4M233.1 1010.15h4.1M240.1 1010.15h5.3M247.2 1010.15h5.1M253.2 1010.15h3.7M259.7 1010.15h5.8M269.1 1010.15h5.1M277.2 1010.15h3.6M283.0 1010.15h3.0M289.5 1010.15h3.2M294.3 1010.15h5.7M302.2 1010.15h3.6M309.4 1010.15h1.6M312.1 1010.15h4.2M317.2 1010.15h6.1M327.0 1010.15h2.8M333.1 1010.15h3.7M339.3 1010.15h3.5M346.4 1010.15h3.0M352.9 1010.15h3.0M357.5 1010.15h6.7M365.2 1010.15h2.0M369.8 1010.15h6.4M379.6 1010.15h5.1M385.5 1010.15h1.6M390.3 1010.15h5.6M399.6 1010.15h3.2M405.2 1010.15h2.7M409.0 1010.15h5.0M416.9 1010.15h1.6M421.0 1010.15h5.9M429.9 1010.15h2.9M433.6 1010.15h2.5M437.4 1010.15h3.3M442.9 1010.15h3.8M447.9 1010.15h3.0M452.4 1010.15h5.9M461.5 1010.15h6.4M469.8 1010.15h5.6M476.9 1010.15h3.1M481.9 1010.15h2.8M486.2 1010.15h6.2M494.6 1010.15h5.1M501.1 1010.15h5.0M509.0 1010.15h6.2M516.8 1010.15h6.4M526.6 1010.15h2.1M530.6 1010.15h3.3M537.7 1010.15h4.9M543.9 1010.15h3.9M550.9 1010.15h1.5M555.4 1010.15h4.9M563.4 1010.15h2.0M569.1 1010.15h3.3M575.2 1010.15h2.5M578.6 1010.15h1.5M582.7 1010.15h6.2M591.6 1010.15h1.5M594.0 1010.15h6.6M602.7 1010.15h6.1M611.8 1010.15h5.2M620.4 1010.15h3.3M625.3 1010.15h1.5M630.6 1010.15h1.7M635.7 1010.15h1.6M639.9 1010.15h6.0M648.5 1010.15h4.4M655.3 1010.15h1.7M660.7 1010.15h5.0M669.3 1010.15h5.9M676.7 1010.15h5.4M684.5 1010.15h2.4M689.4 1010.15h6.6M696.9 1010.15h4.9M703.8 1010.15h3.9M710.6 1010.15h2.3M713.8 1010.15h2.0M717.8 1010.15h4.8M724.8 1010.15h5.6M732.0 1010.15h1.8M736.4 1010.15h5.1M743.8 1010.15h1.5M747.4 1010.15h5.0M754.3 1010.15h5.8M761.6 1010.15h4.9M768.5 1010.15h1.8M771.9 1010.15h1.9M776.3 1010.15h5.9M785.2 1010.15h4.7M790.8 1010.15h4.6M798.5 1010.15h2.9M803.7 1010.15h3.6M809.6 1010.15h1.7M813.6 1010.15h2.7M818.8 1010.15h1.6M822.1 1010.15h1.8M826.9 1010.15h6.4M836.2 1010.15h3.4M841.7 1010.15h4.5M847.6 1010.15h1.3M852.3 1010.15h3.8M859.1 1010.15h3.7M864.4 1010.15h1.4M868.4 1010.15h4.1M873.3 1010.15h2.0M878.9 1010.15h5.1M885.5 1010.15h3.3M891.6 1010.15h5.8M898.5 1010.15h4.8M905.9 1010.15h5.1M912.1 1010.15h3.3M918.1 1010.15h2.7M923.3 1010.15h3.5M929.2 1010.15h5.8M938.1 1010.15h1.7M942.6 1010.15h1.4M945.9 1010.15h5.2M954.2 1010.15h6.6M962.4 1010.15h4.1M969.3 1010.15h5.5M978.2 1010.15h3.0M982.5 1010.15h2.5M988.1 1010.15h1.6M991.2 1010.15h5.8M1000.6 1010.15h3.6M1007.4 1010.15h3.3M1012.4 1010.15h4.3M1017.8 1010.15h3.8M1024.4 1010.15h6.5M1034.3 1010.15h2.4M1038.8 1010.15h1.5M1041.2 1010.15h6.7M1049.2 1010.15h3.1M1055.3 1010.15h2.4M1059.8 1010.15h1.8M1064.8 1010.15h3.1M1069.1 1010.15h2.8M1074.5 1010.15h3.6M1079.8 1010.15h2.8M1084.5 1010.15h3.8M1090.2 1010.15h4.9M1096.9 1010.15h1.7M1099.6 1010.15h3.2M1106.5 1010.15h3.5M1112.1 1010.15h1.4M1115.7 1010.15h1.3M1118.6 1010.15h2.3M1122.6 1010.15h2.1M1126.1 1010.15h1.2M1129.5 1010.15h2.6M1135.5 1010.15h5.5M1143.1 1010.15h6.1M1151.0 1010.15h1.5M1155.9 1010.15h6.5M1163.3 1010.15h3.4M1167.5 1010.15h4.8M1175.6 1010.15h1.7M1180.3 1010.15h4.1M1185.7 1010.15h2.6M1189.7 1010.15h2.3M1194.4 1010.15h1.5M1199.5 1010.15h3.3M1204.7 1010.15h5.3M1211.0 1010.15h2.3M1216.2 1010.15h4.8M1223.3 1010.15h5.2M1231.1 1010.15h5.1M1239.5 1010.15h5.1M1248.0 1010.15h3.6M1254.9 1010.15h5.3M1261.0 1010.15h4.1M1268.6 1010.15h3.6M1274.1 1010.15h3.2M1280.5 1010.15h3.1M1285.1 1010.15h5.0M1293.8 1010.15h4.6M1299.3 1010.15h1.8" stroke="#fff" stroke-width="1.3" fill="none"/>
<path d="M187.4 994.5h0M221.5 1001.3h0M296.4 996.5h0M343.3 1001.5h0M351.4 995.5h0M351.6 1000.5h0M372.4 998.5h0M498.4 998.5h0M644.3 996.5h0M698.4 1001.5h0M714.6 1003.3h0M819.4 995.5h0M826.4 999.5h0M865.4 996.5h0M965.4 1002.5h0M973.4 1000.5h0M988.4 1003.4h0M992.4 1003.0h0M1035.4 995.5h0M1061.4 1002.5h0M1236.4 999.5h0" stroke="#000" stroke-width="3" stroke-linecap="round" fill="none"/><path d="M491.4 985.5h0M496.4 990.5h0M538.4 989.5h0M581.4 989.5h0M867.4 993.5h0M963.4 989.5h0M1247.4 972.5h0" stroke="#f00" stroke-width="3" stroke-linecap="round" fill="none"/>
<path d="M185.9 959l1.5-3l1.5 3zM191.9 959l1.5-3l1.5 3zM218.7 959l1.5-3l1.5 3zM220.1 959l1.5-3l1.5 3zM226.0 959l1.5-3l1.5 3zM252.9 959l1.5-3l1.5 3zM271.9 959l1.5-3l1.5 3zM294.9 959l1.5-3l1.5 3zM315.9 959l1.5-3l1.5 3zM341.9 959l1.5-3l1.5 3zM349.3 959l1.5-3l1.5 3zM350.5 959l1.5-3l1.5 3zM370.9 959l1.5-3l1.5 3zM400.9 959l1.5-3l1.5 3zM415.9 959l1.5-3l1.5 3zM425.9 959l1.5-3l1.5 3zM432.0 959l1.5-3l1.5 3zM489.9 959l1.5-3l1.5 3zM491.3 959l1.5-3l1.5 3zM495.3 959l1.5-3l1.5 3zM496.9 959l1.5-3l1.5 3zM536.9 959l1.5-3l1.5 3zM579.9 959l1.5-3l1.5 3zM603.8 959l1.5-3l1.5 3zM642.8 959l1.5-3l1.5 3zM696.9 959l1.5-3l1.5 3zM817.9 959l1.5-3l1.5 3zM819.1 959l1.5-3l1.5 3zM824.9 959l1.5-3l1.5 3zM863.9 959l1.5-3l1.5 3zM865.7 959l1.5-3l1.5 3zM888.9 959l1.5-3l1.5 3zM961.9 959l1.5-3l1.5 3zM963.9 959l1.5-3l1.5 3zM971.8 959l1.5-3l1.5 3zM986.9 959l1.5-3l1.5 3zM990.9 959l1.5-3l1.5 3zM1034.0 959l1.5-3l1.5 3zM1059.9 959l1.5-3l1.5 3zM1087.9 959l1.5-3l1.5 3zM1122.9 959l1.5-3l1.5 3zM1124.9 959l1.5-3l1.5 3zM1175.9 959l1.5-3l1.5 3zM1186.9 959l1.5-3l1.5 3zM1234.9 959l1.5-3l1.5 3zM1245.5 959l1.5-3l1.5 3zM1247.1 959l1.5-3l1.5 3zM1296.9 959l1.5-3l1.5 3zM730.7 959l1.5-3l1.5 3z" fill="#fdd" stroke="#f00" stroke-width="1.1" stroke-linejoin="round"/>
<path class="pv" d="M162.0 1011.5V954.5"/><path class="pv" d="M732.0 1011.5V954.5"/><path class="pv" d="M1303.0 1011.5V954.5"/>
</g>
<rect class="sp" x="105.5" y="725.5" width="1380.0" height="229.0"/>
<rect class="sp" x="105.5" y="954.5" width="1380.0" height="57.0"/>
<path class="tk" d="M105.5 921.5h-4.9M105.5 889.5h-4.9M105.5 856.5h-4.9M105.5 823.5h-4.9M105.5 791.5h-4.9M105.5 758.5h-4.9"/><text x="95.4" y="927.1" text-anchor="end">OBS not OK</text><text x="95.4" y="895.1" text-anchor="end">dr &gt; 5</text><text x="95.4" y="862.1" text-anchor="end">Ion. rad.</text><text x="95.4" y="829.1" text-anchor="end">Sat. pixel.</text><text x="95.4" y="797.1" text-anchor="end">not track</text><text x="95.4" y="764.1" text-anchor="end">not Kalman</text>
<path class="tk" d="M105.5 1009.5h-4.9M105.5 983.5h-4.9M105.5 957.5h-4.9"/><text x="95.4" y="1014.1" text-anchor="end">0</text><text x="95.4" y="988.1" text-anchor="end">5</text><text x="95.4" y="962.1" text-anchor="end">10</text>
<path class="tk" d="M105.5 970.5h-2.8M105.5 996.5h-2.8"/>
<path class="tk" d="M162.5 1011.5v4.9M395.5 1011.5v4.9M628.5 1011.5v4.9M861.5 1011.5v4.9M1094.5 1011.5v4.9M1327.5 1011.5v4.9"/><text class="n" x="163.1" y="1031.8" text-anchor="middle">0</text><text class="n" x="394.7" y="1031.8" text-anchor="middle">10000</text><text class="n" x="627.7" y="1031.8" text-anchor="middle">20000</text><text class="n" x="860.7" y="1031.8" text-anchor="middle">30000</text><text class="n" x="1093.7" y="1031.8" text-anchor="middle">40000</text><text class="n" x="1326.7" y="1031.8" text-anchor="middle">50000</text>
<text transform="translate(69 983.7) rotate(-90)" text-anchor="middle">dr</text>
</svg>
</body></html>
